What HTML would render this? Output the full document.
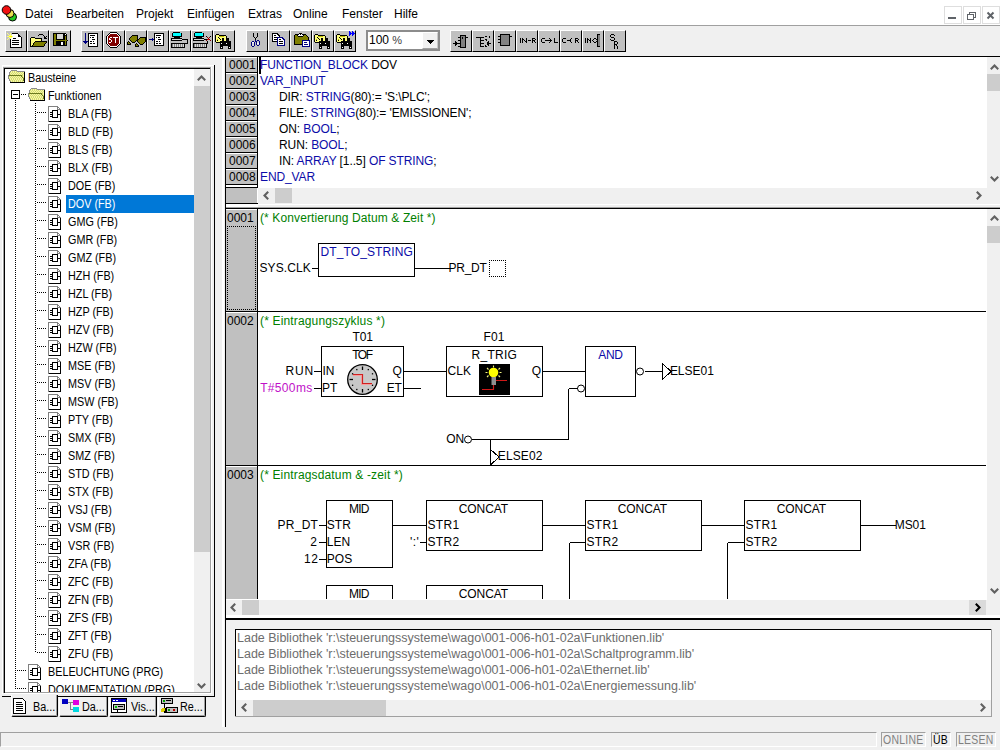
<!DOCTYPE html>
<html><head><meta charset="utf-8">
<style>
*{margin:0;padding:0;box-sizing:border-box}
html,body{width:1000px;height:750px;overflow:hidden;background:#f0f0f0;font-family:"Liberation Sans",sans-serif;font-size:12px;color:#000;position:relative}
.a{position:absolute}
.t{position:absolute;white-space:pre;line-height:16px;font-family:"Liberation Sans",sans-serif}
svg{position:absolute;overflow:visible}
</style></head><body>

<div class="a" style="left:0px;top:0px;width:1000px;height:25px;background:#fff;"></div>
<svg style="left:0;top:0" width="20" height="24" viewBox="0 0 20 24">
<circle cx="12.5" cy="17" r="4" fill="#22cc22" stroke="#000" stroke-width="1"/>
<circle cx="10" cy="13.5" r="4" fill="#e8e050" stroke="#000" stroke-width="1"/>
<circle cx="6.5" cy="10" r="4.3" fill="#f01010" stroke="#000" stroke-width="1"/>
</svg>
<span class="t" style="left:25px;top:6px;font-size:12px;color:#000;">Datei</span>
<span class="t" style="left:66px;top:6px;font-size:12px;color:#000;">Bearbeiten</span>
<span class="t" style="left:136px;top:6px;font-size:12px;color:#000;">Projekt</span>
<span class="t" style="left:187px;top:6px;font-size:12px;color:#000;">Einfügen</span>
<span class="t" style="left:248px;top:6px;font-size:12px;color:#000;">Extras</span>
<span class="t" style="left:293px;top:6px;font-size:12px;color:#000;">Online</span>
<span class="t" style="left:342px;top:6px;font-size:12px;color:#000;">Fenster</span>
<span class="t" style="left:394px;top:6px;font-size:12px;color:#000;">Hilfe</span>
<div class="a" style="left:944px;top:6px;width:18px;height:18px;background:#fff;border:1px solid #dedede"></div>
<div class="a" style="left:963px;top:6px;width:18px;height:18px;background:#fff;border:1px solid #dedede"></div>
<div class="a" style="left:982px;top:6px;width:18px;height:18px;background:#fff;border:1px solid #dedede"></div>
<div class="a" style="left:948px;top:17px;width:8px;height:2px;background:#5f6368;"></div>
<svg style="left:963px;top:6px" width="18" height="18"><g fill="none" stroke="#5f6368" stroke-width="1.2" shape-rendering="crispEdges">
<rect x="4.5" y="8.5" width="6" height="5"/><path d="M6.5 8.5 V6.5 H12.5 V11.5 H10.5"/></g></svg>
<svg style="left:982px;top:6px" width="18" height="18"><g stroke="#5f6368" stroke-width="2"><path d="M5.5 6.5 L11.5 12.5 M11.5 6.5 L5.5 12.5"/></g></svg>
<div class="a" style="left:0px;top:25px;width:1000px;height:1px;background:#a0a0a0;"></div>
<div class="a" style="left:0px;top:26px;width:1000px;height:29px;background:#f0f0f0;"></div>
<div class="a" style="left:0px;top:56px;width:1000px;height:1px;background:#000;"></div>
<div class="a" style="left:5px;top:30px;width:22px;height:22px;background:#c0c0c0;border-left:1px solid #fff;border-top:1px solid #fff;border-right:1px solid #000;border-bottom:1px solid #000"></div>
<svg style="left:6px;top:31px" width="20" height="20" shape-rendering="crispEdges"><rect x="1" y="2" width="1" height="1" fill="#ffff80"/><rect x="4" y="2" width="1" height="1" fill="#ffff80"/><rect x="6" y="2" width="6" height="1" fill="#000"/><rect x="2" y="3" width="1" height="1" fill="#ffff80"/><rect x="4" y="3" width="1" height="1" fill="#ffff80"/><rect x="6" y="3" width="6" height="1" fill="#fff"/><rect x="12" y="3" width="1" height="1" fill="#000"/><rect x="3" y="4" width="3" height="1" fill="#ffff80"/><rect x="6" y="4" width="6" height="1" fill="#fff"/><rect x="12" y="4" width="2" height="1" fill="#000"/><rect x="1" y="5" width="2" height="1" fill="#ffff80"/><rect x="3" y="5" width="3" height="1" fill="#ffff00"/><rect x="6" y="5" width="1" height="1" fill="#ffff80"/><rect x="7" y="5" width="5" height="1" fill="#fff"/><rect x="12" y="5" width="3" height="1" fill="#000"/><rect x="3" y="6" width="3" height="1" fill="#ffff80"/><rect x="6" y="6" width="9" height="1" fill="#fff"/><rect x="15" y="6" width="1" height="1" fill="#000"/><rect x="2" y="7" width="1" height="1" fill="#ffff80"/><rect x="4" y="7" width="1" height="1" fill="#ffff80"/><rect x="5" y="7" width="2" height="1" fill="#fff"/><rect x="7" y="7" width="3" height="1" fill="#000"/><rect x="10" y="7" width="5" height="1" fill="#fff"/><rect x="15" y="7" width="1" height="1" fill="#000"/><rect x="1" y="8" width="1" height="1" fill="#ffff80"/><rect x="4" y="8" width="1" height="1" fill="#000"/><rect x="5" y="8" width="10" height="1" fill="#fff"/><rect x="15" y="8" width="1" height="1" fill="#000"/><rect x="4" y="9" width="1" height="1" fill="#000"/><rect x="5" y="9" width="1" height="1" fill="#fff"/><rect x="6" y="9" width="7" height="1" fill="#000"/><rect x="13" y="9" width="2" height="1" fill="#fff"/><rect x="15" y="9" width="1" height="1" fill="#000"/><rect x="4" y="10" width="1" height="1" fill="#000"/><rect x="5" y="10" width="10" height="1" fill="#fff"/><rect x="15" y="10" width="1" height="1" fill="#000"/><rect x="4" y="11" width="1" height="1" fill="#000"/><rect x="5" y="11" width="1" height="1" fill="#fff"/><rect x="6" y="11" width="7" height="1" fill="#000"/><rect x="13" y="11" width="2" height="1" fill="#fff"/><rect x="15" y="11" width="1" height="1" fill="#000"/><rect x="4" y="12" width="1" height="1" fill="#000"/><rect x="5" y="12" width="10" height="1" fill="#fff"/><rect x="15" y="12" width="1" height="1" fill="#000"/><rect x="4" y="13" width="1" height="1" fill="#000"/><rect x="5" y="13" width="1" height="1" fill="#fff"/><rect x="6" y="13" width="7" height="1" fill="#000"/><rect x="13" y="13" width="2" height="1" fill="#fff"/><rect x="15" y="13" width="1" height="1" fill="#000"/><rect x="4" y="14" width="1" height="1" fill="#000"/><rect x="5" y="14" width="10" height="1" fill="#fff"/><rect x="15" y="14" width="1" height="1" fill="#000"/><rect x="4" y="15" width="1" height="1" fill="#000"/><rect x="5" y="15" width="10" height="1" fill="#fff"/><rect x="15" y="15" width="1" height="1" fill="#000"/><rect x="4" y="16" width="12" height="1" fill="#000"/></svg>
<div class="a" style="left:27px;top:30px;width:22px;height:22px;background:#c0c0c0;border-left:1px solid #fff;border-top:1px solid #fff;border-right:1px solid #000;border-bottom:1px solid #000"></div>
<svg style="left:28px;top:31px" width="20" height="20" shape-rendering="crispEdges"><rect x="11" y="3" width="4" height="1" fill="#000"/><rect x="10" y="4" width="1" height="1" fill="#000"/><rect x="15" y="4" width="1" height="1" fill="#000"/><rect x="16" y="5" width="1" height="1" fill="#000"/><rect x="18" y="5" width="1" height="1" fill="#000"/><rect x="3" y="6" width="4" height="1" fill="#000"/><rect x="16" y="6" width="2" height="1" fill="#000"/><rect x="2" y="7" width="1" height="1" fill="#000"/><rect x="3" y="7" width="4" height="1" fill="#ffff80"/><rect x="7" y="7" width="7" height="1" fill="#000"/><rect x="16" y="7" width="3" height="1" fill="#000"/><rect x="2" y="8" width="1" height="1" fill="#000"/><rect x="3" y="8" width="10" height="1" fill="#ffff80"/><rect x="13" y="8" width="1" height="1" fill="#000"/><rect x="2" y="9" width="1" height="1" fill="#000"/><rect x="3" y="9" width="10" height="1" fill="#ffff80"/><rect x="13" y="9" width="1" height="1" fill="#000"/><rect x="2" y="10" width="1" height="1" fill="#000"/><rect x="3" y="10" width="4" height="1" fill="#ffff80"/><rect x="7" y="10" width="12" height="1" fill="#000"/><rect x="2" y="11" width="1" height="1" fill="#000"/><rect x="3" y="11" width="3" height="1" fill="#ffff80"/><rect x="6" y="11" width="1" height="1" fill="#000"/><rect x="7" y="11" width="11" height="1" fill="#808000"/><rect x="18" y="11" width="1" height="1" fill="#000"/><rect x="2" y="12" width="1" height="1" fill="#000"/><rect x="3" y="12" width="2" height="1" fill="#ffff80"/><rect x="5" y="12" width="1" height="1" fill="#000"/><rect x="6" y="12" width="11" height="1" fill="#808000"/><rect x="17" y="12" width="1" height="1" fill="#000"/><rect x="2" y="13" width="1" height="1" fill="#000"/><rect x="3" y="13" width="2" height="1" fill="#ffff80"/><rect x="5" y="13" width="1" height="1" fill="#000"/><rect x="6" y="13" width="10" height="1" fill="#808000"/><rect x="16" y="13" width="1" height="1" fill="#000"/><rect x="2" y="14" width="1" height="1" fill="#000"/><rect x="3" y="14" width="1" height="1" fill="#ffff80"/><rect x="4" y="14" width="1" height="1" fill="#000"/><rect x="5" y="14" width="11" height="1" fill="#808000"/><rect x="16" y="14" width="1" height="1" fill="#000"/><rect x="2" y="15" width="14" height="1" fill="#000"/></svg>
<div class="a" style="left:49px;top:30px;width:22px;height:22px;background:#c0c0c0;border-left:1px solid #fff;border-top:1px solid #fff;border-right:1px solid #000;border-bottom:1px solid #000"></div>
<svg style="left:50px;top:31px" width="20" height="20" shape-rendering="crispEdges"><rect x="3" y="2" width="13" height="1" fill="#000"/><rect x="3" y="3" width="1" height="1" fill="#000"/><rect x="4" y="3" width="2" height="1" fill="#808000"/><rect x="6" y="3" width="1" height="1" fill="#000"/><rect x="7" y="3" width="6" height="1" fill="#d8d8d8"/><rect x="13" y="3" width="2" height="1" fill="#000"/><rect x="15" y="3" width="1" height="1" fill="#fff"/><rect x="16" y="3" width="1" height="1" fill="#000"/><rect x="3" y="4" width="1" height="1" fill="#000"/><rect x="4" y="4" width="2" height="1" fill="#808000"/><rect x="6" y="4" width="1" height="1" fill="#000"/><rect x="7" y="4" width="6" height="1" fill="#d8d8d8"/><rect x="13" y="4" width="4" height="1" fill="#000"/><rect x="3" y="5" width="1" height="1" fill="#000"/><rect x="4" y="5" width="2" height="1" fill="#808000"/><rect x="6" y="5" width="1" height="1" fill="#000"/><rect x="7" y="5" width="6" height="1" fill="#d8d8d8"/><rect x="13" y="5" width="2" height="1" fill="#000"/><rect x="15" y="5" width="1" height="1" fill="#808000"/><rect x="16" y="5" width="1" height="1" fill="#000"/><rect x="3" y="6" width="1" height="1" fill="#000"/><rect x="4" y="6" width="2" height="1" fill="#808000"/><rect x="6" y="6" width="1" height="1" fill="#000"/><rect x="7" y="6" width="6" height="1" fill="#d8d8d8"/><rect x="13" y="6" width="2" height="1" fill="#000"/><rect x="15" y="6" width="1" height="1" fill="#808000"/><rect x="16" y="6" width="1" height="1" fill="#000"/><rect x="3" y="7" width="1" height="1" fill="#000"/><rect x="4" y="7" width="2" height="1" fill="#808000"/><rect x="6" y="7" width="1" height="1" fill="#000"/><rect x="7" y="7" width="6" height="1" fill="#d8d8d8"/><rect x="13" y="7" width="2" height="1" fill="#000"/><rect x="15" y="7" width="1" height="1" fill="#808000"/><rect x="16" y="7" width="1" height="1" fill="#000"/><rect x="3" y="8" width="1" height="1" fill="#000"/><rect x="4" y="8" width="2" height="1" fill="#808000"/><rect x="6" y="8" width="9" height="1" fill="#000"/><rect x="15" y="8" width="1" height="1" fill="#808000"/><rect x="16" y="8" width="1" height="1" fill="#000"/><rect x="3" y="9" width="1" height="1" fill="#000"/><rect x="4" y="9" width="13" height="1" fill="#808000"/><rect x="17" y="9" width="1" height="1" fill="#000"/><rect x="3" y="10" width="1" height="1" fill="#000"/><rect x="4" y="10" width="2" height="1" fill="#808000"/><rect x="6" y="10" width="9" height="1" fill="#000"/><rect x="15" y="10" width="1" height="1" fill="#808000"/><rect x="16" y="10" width="1" height="1" fill="#000"/><rect x="3" y="11" width="1" height="1" fill="#000"/><rect x="4" y="11" width="2" height="1" fill="#808000"/><rect x="6" y="11" width="5" height="1" fill="#000"/><rect x="11" y="11" width="2" height="1" fill="#fff"/><rect x="13" y="11" width="2" height="1" fill="#000"/><rect x="15" y="11" width="1" height="1" fill="#808000"/><rect x="16" y="11" width="1" height="1" fill="#000"/><rect x="3" y="12" width="1" height="1" fill="#000"/><rect x="4" y="12" width="2" height="1" fill="#808000"/><rect x="6" y="12" width="5" height="1" fill="#000"/><rect x="11" y="12" width="2" height="1" fill="#fff"/><rect x="13" y="12" width="2" height="1" fill="#000"/><rect x="15" y="12" width="1" height="1" fill="#808000"/><rect x="16" y="12" width="1" height="1" fill="#000"/><rect x="3" y="13" width="1" height="1" fill="#000"/><rect x="4" y="13" width="2" height="1" fill="#808000"/><rect x="6" y="13" width="5" height="1" fill="#000"/><rect x="11" y="13" width="2" height="1" fill="#fff"/><rect x="13" y="13" width="2" height="1" fill="#000"/><rect x="15" y="13" width="1" height="1" fill="#808000"/><rect x="16" y="13" width="1" height="1" fill="#000"/><rect x="3" y="14" width="14" height="1" fill="#000"/></svg>
<div class="a" style="left:81px;top:30px;width:22px;height:22px;background:#c0c0c0;border-left:1px solid #fff;border-top:1px solid #fff;border-right:1px solid #000;border-bottom:1px solid #000"></div>
<svg style="left:82px;top:31px" width="20" height="20" shape-rendering="crispEdges"><rect x="3" y="2" width="1" height="1" fill="#000080"/><rect x="6" y="2" width="10" height="1" fill="#000"/><rect x="3" y="3" width="1" height="1" fill="#000080"/><rect x="6" y="3" width="1" height="1" fill="#000"/><rect x="7" y="3" width="8" height="1" fill="#fff"/><rect x="15" y="3" width="1" height="1" fill="#000"/><rect x="3" y="4" width="1" height="1" fill="#000080"/><rect x="6" y="4" width="1" height="1" fill="#000"/><rect x="7" y="4" width="1" height="1" fill="#fff"/><rect x="8" y="4" width="5" height="1" fill="#000"/><rect x="13" y="4" width="2" height="1" fill="#fff"/><rect x="15" y="4" width="1" height="1" fill="#000"/><rect x="3" y="5" width="1" height="1" fill="#000080"/><rect x="6" y="5" width="1" height="1" fill="#000"/><rect x="7" y="5" width="8" height="1" fill="#fff"/><rect x="15" y="5" width="1" height="1" fill="#000"/><rect x="3" y="6" width="1" height="1" fill="#000080"/><rect x="6" y="6" width="1" height="1" fill="#000"/><rect x="7" y="6" width="1" height="1" fill="#fff"/><rect x="8" y="6" width="1" height="1" fill="#000"/><rect x="9" y="6" width="1" height="1" fill="#fff"/><rect x="10" y="6" width="2" height="1" fill="#000"/><rect x="12" y="6" width="3" height="1" fill="#fff"/><rect x="15" y="6" width="1" height="1" fill="#000"/><rect x="3" y="7" width="1" height="1" fill="#000080"/><rect x="6" y="7" width="1" height="1" fill="#000"/><rect x="7" y="7" width="8" height="1" fill="#fff"/><rect x="15" y="7" width="1" height="1" fill="#000"/><rect x="3" y="8" width="1" height="1" fill="#000080"/><rect x="6" y="8" width="1" height="1" fill="#000"/><rect x="7" y="8" width="3" height="1" fill="#fff"/><rect x="10" y="8" width="3" height="1" fill="#000"/><rect x="13" y="8" width="2" height="1" fill="#fff"/><rect x="15" y="8" width="1" height="1" fill="#000"/><rect x="3" y="9" width="1" height="1" fill="#000080"/><rect x="6" y="9" width="1" height="1" fill="#000"/><rect x="7" y="9" width="8" height="1" fill="#fff"/><rect x="15" y="9" width="1" height="1" fill="#000"/><rect x="1" y="10" width="5" height="1" fill="#000080"/><rect x="6" y="10" width="1" height="1" fill="#000"/><rect x="7" y="10" width="1" height="1" fill="#fff"/><rect x="8" y="10" width="2" height="1" fill="#000"/><rect x="10" y="10" width="1" height="1" fill="#fff"/><rect x="11" y="10" width="1" height="1" fill="#000"/><rect x="12" y="10" width="3" height="1" fill="#fff"/><rect x="15" y="10" width="1" height="1" fill="#000"/><rect x="2" y="11" width="3" height="1" fill="#000080"/><rect x="6" y="11" width="1" height="1" fill="#000"/><rect x="7" y="11" width="8" height="1" fill="#fff"/><rect x="15" y="11" width="1" height="1" fill="#000"/><rect x="3" y="12" width="1" height="1" fill="#000080"/><rect x="6" y="12" width="1" height="1" fill="#000"/><rect x="7" y="12" width="1" height="1" fill="#fff"/><rect x="8" y="12" width="2" height="1" fill="#000"/><rect x="10" y="12" width="1" height="1" fill="#fff"/><rect x="11" y="12" width="2" height="1" fill="#000"/><rect x="13" y="12" width="2" height="1" fill="#fff"/><rect x="15" y="12" width="1" height="1" fill="#000"/><rect x="6" y="13" width="1" height="1" fill="#000"/><rect x="7" y="13" width="8" height="1" fill="#fff"/><rect x="15" y="13" width="1" height="1" fill="#000"/><rect x="6" y="14" width="1" height="1" fill="#000"/><rect x="7" y="14" width="8" height="1" fill="#fff"/><rect x="15" y="14" width="1" height="1" fill="#000"/><rect x="6" y="15" width="10" height="1" fill="#000"/></svg>
<div class="a" style="left:103px;top:30px;width:22px;height:22px;background:#c0c0c0;border-left:1px solid #fff;border-top:1px solid #fff;border-right:1px solid #000;border-bottom:1px solid #000"></div>
<svg style="left:104px;top:31px" width="20" height="20" shape-rendering="crispEdges"><rect x="6" y="1" width="7" height="1" fill="#000"/><rect x="5" y="2" width="1" height="1" fill="#000"/><rect x="6" y="2" width="7" height="1" fill="#fff"/><rect x="13" y="2" width="1" height="1" fill="#000"/><rect x="4" y="3" width="1" height="1" fill="#000"/><rect x="5" y="3" width="1" height="1" fill="#fff"/><rect x="6" y="3" width="7" height="1" fill="#800000"/><rect x="13" y="3" width="1" height="1" fill="#fff"/><rect x="14" y="3" width="1" height="1" fill="#000"/><rect x="3" y="4" width="1" height="1" fill="#000"/><rect x="4" y="4" width="1" height="1" fill="#fff"/><rect x="5" y="4" width="9" height="1" fill="#800000"/><rect x="14" y="4" width="1" height="1" fill="#fff"/><rect x="15" y="4" width="1" height="1" fill="#000"/><rect x="2" y="5" width="1" height="1" fill="#000"/><rect x="3" y="5" width="1" height="1" fill="#fff"/><rect x="4" y="5" width="11" height="1" fill="#800000"/><rect x="15" y="5" width="1" height="1" fill="#fff"/><rect x="16" y="5" width="1" height="1" fill="#000"/><rect x="2" y="6" width="1" height="1" fill="#000"/><rect x="3" y="6" width="1" height="1" fill="#fff"/><rect x="4" y="6" width="2" height="1" fill="#800000"/><rect x="6" y="6" width="2" height="1" fill="#fff"/><rect x="8" y="6" width="1" height="1" fill="#800000"/><rect x="9" y="6" width="5" height="1" fill="#fff"/><rect x="14" y="6" width="1" height="1" fill="#800000"/><rect x="15" y="6" width="1" height="1" fill="#fff"/><rect x="16" y="6" width="1" height="1" fill="#000"/><rect x="2" y="7" width="1" height="1" fill="#000"/><rect x="3" y="7" width="1" height="1" fill="#fff"/><rect x="4" y="7" width="1" height="1" fill="#800000"/><rect x="5" y="7" width="1" height="1" fill="#fff"/><rect x="6" y="7" width="5" height="1" fill="#800000"/><rect x="11" y="7" width="1" height="1" fill="#fff"/><rect x="12" y="7" width="3" height="1" fill="#800000"/><rect x="15" y="7" width="1" height="1" fill="#fff"/><rect x="16" y="7" width="1" height="1" fill="#000"/><rect x="2" y="8" width="1" height="1" fill="#000"/><rect x="3" y="8" width="1" height="1" fill="#fff"/><rect x="4" y="8" width="1" height="1" fill="#800000"/><rect x="5" y="8" width="2" height="1" fill="#fff"/><rect x="7" y="8" width="4" height="1" fill="#800000"/><rect x="11" y="8" width="1" height="1" fill="#fff"/><rect x="12" y="8" width="3" height="1" fill="#800000"/><rect x="15" y="8" width="1" height="1" fill="#fff"/><rect x="16" y="8" width="1" height="1" fill="#000"/><rect x="2" y="9" width="1" height="1" fill="#000"/><rect x="3" y="9" width="1" height="1" fill="#fff"/><rect x="4" y="9" width="3" height="1" fill="#800000"/><rect x="7" y="9" width="1" height="1" fill="#fff"/><rect x="8" y="9" width="3" height="1" fill="#800000"/><rect x="11" y="9" width="1" height="1" fill="#fff"/><rect x="12" y="9" width="3" height="1" fill="#800000"/><rect x="15" y="9" width="1" height="1" fill="#fff"/><rect x="16" y="9" width="1" height="1" fill="#000"/><rect x="2" y="10" width="1" height="1" fill="#000"/><rect x="3" y="10" width="1" height="1" fill="#fff"/><rect x="4" y="10" width="3" height="1" fill="#800000"/><rect x="7" y="10" width="1" height="1" fill="#fff"/><rect x="8" y="10" width="3" height="1" fill="#800000"/><rect x="11" y="10" width="1" height="1" fill="#fff"/><rect x="12" y="10" width="3" height="1" fill="#800000"/><rect x="15" y="10" width="1" height="1" fill="#fff"/><rect x="16" y="10" width="1" height="1" fill="#000"/><rect x="2" y="11" width="1" height="1" fill="#000"/><rect x="3" y="11" width="1" height="1" fill="#fff"/><rect x="4" y="11" width="1" height="1" fill="#800000"/><rect x="5" y="11" width="2" height="1" fill="#fff"/><rect x="7" y="11" width="4" height="1" fill="#800000"/><rect x="11" y="11" width="1" height="1" fill="#fff"/><rect x="12" y="11" width="3" height="1" fill="#800000"/><rect x="15" y="11" width="1" height="1" fill="#fff"/><rect x="16" y="11" width="1" height="1" fill="#000"/><rect x="2" y="12" width="1" height="1" fill="#000"/><rect x="3" y="12" width="1" height="1" fill="#fff"/><rect x="4" y="12" width="11" height="1" fill="#800000"/><rect x="15" y="12" width="1" height="1" fill="#fff"/><rect x="16" y="12" width="1" height="1" fill="#000"/><rect x="3" y="13" width="1" height="1" fill="#000"/><rect x="4" y="13" width="1" height="1" fill="#fff"/><rect x="5" y="13" width="9" height="1" fill="#800000"/><rect x="14" y="13" width="1" height="1" fill="#fff"/><rect x="15" y="13" width="1" height="1" fill="#000"/><rect x="4" y="14" width="1" height="1" fill="#000"/><rect x="5" y="14" width="1" height="1" fill="#fff"/><rect x="6" y="14" width="7" height="1" fill="#800000"/><rect x="13" y="14" width="1" height="1" fill="#fff"/><rect x="14" y="14" width="1" height="1" fill="#000"/><rect x="5" y="15" width="1" height="1" fill="#000"/><rect x="6" y="15" width="7" height="1" fill="#fff"/><rect x="13" y="15" width="1" height="1" fill="#000"/><rect x="6" y="16" width="7" height="1" fill="#000"/></svg>
<div class="a" style="left:125px;top:30px;width:22px;height:22px;background:#c0c0c0;border-left:1px solid #fff;border-top:1px solid #fff;border-right:1px solid #000;border-bottom:1px solid #000"></div>
<svg style="left:126px;top:31px" width="20" height="20" shape-rendering="crispEdges"><rect x="6" y="4" width="6" height="1" fill="#000"/><rect x="5" y="5" width="1" height="1" fill="#000"/><rect x="6" y="5" width="5" height="1" fill="#808000"/><rect x="11" y="5" width="1" height="1" fill="#000"/><rect x="4" y="6" width="1" height="1" fill="#000"/><rect x="5" y="6" width="6" height="1" fill="#808000"/><rect x="11" y="6" width="1" height="1" fill="#000"/><rect x="14" y="6" width="6" height="1" fill="#000"/><rect x="3" y="7" width="1" height="1" fill="#000"/><rect x="4" y="7" width="7" height="1" fill="#808000"/><rect x="11" y="7" width="1" height="1" fill="#000"/><rect x="13" y="7" width="1" height="1" fill="#000"/><rect x="14" y="7" width="5" height="1" fill="#808000"/><rect x="19" y="7" width="1" height="1" fill="#000"/><rect x="3" y="8" width="1" height="1" fill="#000"/><rect x="4" y="8" width="7" height="1" fill="#808000"/><rect x="11" y="8" width="2" height="1" fill="#000"/><rect x="13" y="8" width="6" height="1" fill="#808000"/><rect x="19" y="8" width="1" height="1" fill="#000"/><rect x="4" y="9" width="1" height="1" fill="#000"/><rect x="5" y="9" width="5" height="1" fill="#808000"/><rect x="10" y="9" width="2" height="1" fill="#000"/><rect x="12" y="9" width="7" height="1" fill="#808000"/><rect x="19" y="9" width="1" height="1" fill="#000"/><rect x="2" y="10" width="1" height="1" fill="#000"/><rect x="5" y="10" width="1" height="1" fill="#000"/><rect x="6" y="10" width="3" height="1" fill="#808000"/><rect x="9" y="10" width="1" height="1" fill="#000"/><rect x="11" y="10" width="1" height="1" fill="#000"/><rect x="12" y="10" width="7" height="1" fill="#808000"/><rect x="19" y="10" width="1" height="1" fill="#000"/><rect x="1" y="11" width="1" height="1" fill="#000"/><rect x="2" y="11" width="1" height="1" fill="#808000"/><rect x="3" y="11" width="1" height="1" fill="#000"/><rect x="6" y="11" width="3" height="1" fill="#000"/><rect x="12" y="11" width="1" height="1" fill="#000"/><rect x="13" y="11" width="5" height="1" fill="#808000"/><rect x="18" y="11" width="1" height="1" fill="#000"/><rect x="1" y="12" width="1" height="1" fill="#000"/><rect x="2" y="12" width="2" height="1" fill="#808000"/><rect x="4" y="12" width="1" height="1" fill="#000"/><rect x="10" y="12" width="1" height="1" fill="#000"/><rect x="13" y="12" width="1" height="1" fill="#000"/><rect x="14" y="12" width="3" height="1" fill="#808000"/><rect x="17" y="12" width="1" height="1" fill="#000"/><rect x="1" y="13" width="4" height="1" fill="#000"/><rect x="9" y="13" width="1" height="1" fill="#000"/><rect x="10" y="13" width="1" height="1" fill="#808000"/><rect x="11" y="13" width="1" height="1" fill="#000"/><rect x="14" y="13" width="3" height="1" fill="#000"/><rect x="9" y="14" width="1" height="1" fill="#000"/><rect x="10" y="14" width="2" height="1" fill="#808000"/><rect x="12" y="14" width="1" height="1" fill="#000"/><rect x="9" y="15" width="4" height="1" fill="#000"/></svg>
<div class="a" style="left:147px;top:30px;width:22px;height:22px;background:#c0c0c0;border-left:1px solid #fff;border-top:1px solid #fff;border-right:1px solid #000;border-bottom:1px solid #000"></div>
<svg style="left:148px;top:31px" width="20" height="20" shape-rendering="crispEdges"><rect x="6" y="2" width="10" height="1" fill="#000"/><rect x="6" y="3" width="1" height="1" fill="#000"/><rect x="7" y="3" width="8" height="1" fill="#fff"/><rect x="15" y="3" width="1" height="1" fill="#000"/><rect x="6" y="4" width="1" height="1" fill="#000"/><rect x="7" y="4" width="1" height="1" fill="#fff"/><rect x="8" y="4" width="5" height="1" fill="#000"/><rect x="13" y="4" width="2" height="1" fill="#fff"/><rect x="15" y="4" width="1" height="1" fill="#000"/><rect x="6" y="5" width="1" height="1" fill="#000"/><rect x="7" y="5" width="8" height="1" fill="#fff"/><rect x="15" y="5" width="1" height="1" fill="#000"/><rect x="6" y="6" width="1" height="1" fill="#000"/><rect x="7" y="6" width="1" height="1" fill="#fff"/><rect x="8" y="6" width="1" height="1" fill="#000"/><rect x="9" y="6" width="1" height="1" fill="#fff"/><rect x="10" y="6" width="2" height="1" fill="#000"/><rect x="12" y="6" width="3" height="1" fill="#fff"/><rect x="15" y="6" width="1" height="1" fill="#000"/><rect x="4" y="7" width="1" height="1" fill="#000080"/><rect x="6" y="7" width="1" height="1" fill="#000"/><rect x="7" y="7" width="8" height="1" fill="#fff"/><rect x="15" y="7" width="1" height="1" fill="#000"/><rect x="1" y="8" width="5" height="1" fill="#000080"/><rect x="6" y="8" width="1" height="1" fill="#000"/><rect x="7" y="8" width="3" height="1" fill="#fff"/><rect x="10" y="8" width="3" height="1" fill="#000"/><rect x="13" y="8" width="2" height="1" fill="#fff"/><rect x="15" y="8" width="1" height="1" fill="#000"/><rect x="4" y="9" width="1" height="1" fill="#000080"/><rect x="6" y="9" width="1" height="1" fill="#000"/><rect x="7" y="9" width="8" height="1" fill="#fff"/><rect x="15" y="9" width="1" height="1" fill="#000"/><rect x="6" y="10" width="1" height="1" fill="#000"/><rect x="7" y="10" width="1" height="1" fill="#fff"/><rect x="8" y="10" width="2" height="1" fill="#000"/><rect x="10" y="10" width="1" height="1" fill="#fff"/><rect x="11" y="10" width="1" height="1" fill="#000"/><rect x="12" y="10" width="3" height="1" fill="#fff"/><rect x="15" y="10" width="1" height="1" fill="#000"/><rect x="6" y="11" width="1" height="1" fill="#000"/><rect x="7" y="11" width="8" height="1" fill="#fff"/><rect x="15" y="11" width="1" height="1" fill="#000"/><rect x="6" y="12" width="1" height="1" fill="#000"/><rect x="7" y="12" width="1" height="1" fill="#fff"/><rect x="8" y="12" width="2" height="1" fill="#000"/><rect x="10" y="12" width="1" height="1" fill="#fff"/><rect x="11" y="12" width="2" height="1" fill="#000"/><rect x="13" y="12" width="2" height="1" fill="#fff"/><rect x="15" y="12" width="1" height="1" fill="#000"/><rect x="6" y="13" width="1" height="1" fill="#000"/><rect x="7" y="13" width="8" height="1" fill="#fff"/><rect x="15" y="13" width="1" height="1" fill="#000"/><rect x="6" y="14" width="10" height="1" fill="#000"/></svg>
<div class="a" style="left:169px;top:30px;width:22px;height:22px;background:#c0c0c0;border-left:1px solid #fff;border-top:1px solid #fff;border-right:1px solid #000;border-bottom:1px solid #000"></div>
<svg style="left:170px;top:31px" width="20" height="20" shape-rendering="crispEdges"><rect x="3" y="1" width="7" height="1" fill="#000"/><rect x="2" y="2" width="1" height="1" fill="#000"/><rect x="3" y="2" width="8" height="1" fill="#00ffff"/><rect x="11" y="2" width="1" height="1" fill="#000"/><rect x="2" y="3" width="1" height="1" fill="#000"/><rect x="3" y="3" width="8" height="1" fill="#00ffff"/><rect x="11" y="3" width="1" height="1" fill="#000"/><rect x="2" y="4" width="1" height="1" fill="#000"/><rect x="3" y="4" width="8" height="1" fill="#00ffff"/><rect x="11" y="4" width="1" height="1" fill="#000"/><rect x="2" y="5" width="10" height="1" fill="#000"/><rect x="4" y="6" width="6" height="1" fill="#000"/><rect x="1" y="7" width="11" height="1" fill="#000"/><rect x="1" y="8" width="1" height="1" fill="#000"/><rect x="2" y="8" width="10" height="1" fill="#d8d8d8"/><rect x="12" y="8" width="6" height="1" fill="#000"/><rect x="1" y="9" width="11" height="1" fill="#000"/><rect x="17" y="9" width="1" height="1" fill="#000"/><rect x="17" y="10" width="1" height="1" fill="#000"/><rect x="17" y="11" width="1" height="1" fill="#000"/><rect x="1" y="12" width="17" height="1" fill="#000"/><rect x="1" y="13" width="1" height="1" fill="#000"/><rect x="2" y="13" width="1" height="1" fill="#808080"/><rect x="3" y="13" width="1" height="1" fill="#d8d8d8"/><rect x="4" y="13" width="1" height="1" fill="#808080"/><rect x="5" y="13" width="1" height="1" fill="#d8d8d8"/><rect x="6" y="13" width="1" height="1" fill="#808080"/><rect x="7" y="13" width="1" height="1" fill="#d8d8d8"/><rect x="8" y="13" width="1" height="1" fill="#808080"/><rect x="9" y="13" width="1" height="1" fill="#d8d8d8"/><rect x="10" y="13" width="1" height="1" fill="#808080"/><rect x="11" y="13" width="1" height="1" fill="#d8d8d8"/><rect x="12" y="13" width="1" height="1" fill="#808080"/><rect x="13" y="13" width="1" height="1" fill="#d8d8d8"/><rect x="14" y="13" width="1" height="1" fill="#000"/><rect x="1" y="14" width="1" height="1" fill="#000"/><rect x="2" y="14" width="1" height="1" fill="#808080"/><rect x="3" y="14" width="1" height="1" fill="#d8d8d8"/><rect x="4" y="14" width="1" height="1" fill="#808080"/><rect x="5" y="14" width="1" height="1" fill="#d8d8d8"/><rect x="6" y="14" width="1" height="1" fill="#808080"/><rect x="7" y="14" width="1" height="1" fill="#d8d8d8"/><rect x="8" y="14" width="1" height="1" fill="#808080"/><rect x="9" y="14" width="1" height="1" fill="#d8d8d8"/><rect x="10" y="14" width="1" height="1" fill="#808080"/><rect x="11" y="14" width="1" height="1" fill="#d8d8d8"/><rect x="12" y="14" width="1" height="1" fill="#808080"/><rect x="13" y="14" width="1" height="1" fill="#d8d8d8"/><rect x="14" y="14" width="1" height="1" fill="#000"/><rect x="1" y="15" width="1" height="1" fill="#000"/><rect x="2" y="15" width="1" height="1" fill="#808080"/><rect x="3" y="15" width="1" height="1" fill="#d8d8d8"/><rect x="4" y="15" width="1" height="1" fill="#808080"/><rect x="5" y="15" width="1" height="1" fill="#d8d8d8"/><rect x="6" y="15" width="1" height="1" fill="#808080"/><rect x="7" y="15" width="1" height="1" fill="#d8d8d8"/><rect x="8" y="15" width="1" height="1" fill="#808080"/><rect x="9" y="15" width="1" height="1" fill="#d8d8d8"/><rect x="10" y="15" width="1" height="1" fill="#808080"/><rect x="11" y="15" width="1" height="1" fill="#d8d8d8"/><rect x="12" y="15" width="1" height="1" fill="#808080"/><rect x="13" y="15" width="1" height="1" fill="#d8d8d8"/><rect x="14" y="15" width="1" height="1" fill="#000"/><rect x="1" y="16" width="14" height="1" fill="#000"/></svg>
<div class="a" style="left:191px;top:30px;width:22px;height:22px;background:#c0c0c0;border-left:1px solid #fff;border-top:1px solid #fff;border-right:1px solid #000;border-bottom:1px solid #000"></div>
<svg style="left:192px;top:31px" width="20" height="20" shape-rendering="crispEdges"><rect x="3" y="1" width="7" height="1" fill="#000"/><rect x="2" y="2" width="1" height="1" fill="#000"/><rect x="3" y="2" width="8" height="1" fill="#00ffff"/><rect x="11" y="2" width="1" height="1" fill="#000"/><rect x="2" y="3" width="1" height="1" fill="#000"/><rect x="3" y="3" width="8" height="1" fill="#00ffff"/><rect x="11" y="3" width="1" height="1" fill="#000"/><rect x="2" y="4" width="1" height="1" fill="#000"/><rect x="3" y="4" width="8" height="1" fill="#00ffff"/><rect x="11" y="4" width="1" height="1" fill="#000"/><rect x="2" y="5" width="10" height="1" fill="#000"/><rect x="14" y="5" width="1" height="1" fill="#000"/><rect x="18" y="5" width="1" height="1" fill="#000"/><rect x="4" y="6" width="6" height="1" fill="#000"/><rect x="15" y="6" width="1" height="1" fill="#800000"/><rect x="17" y="6" width="1" height="1" fill="#800000"/><rect x="1" y="7" width="11" height="1" fill="#000"/><rect x="16" y="7" width="1" height="1" fill="#800000"/><rect x="1" y="8" width="1" height="1" fill="#000"/><rect x="2" y="8" width="10" height="1" fill="#d8d8d8"/><rect x="12" y="8" width="3" height="1" fill="#000"/><rect x="15" y="8" width="1" height="1" fill="#800000"/><rect x="16" y="8" width="1" height="1" fill="#ff0000"/><rect x="17" y="8" width="1" height="1" fill="#800000"/><rect x="1" y="9" width="11" height="1" fill="#000"/><rect x="14" y="9" width="1" height="1" fill="#800000"/><rect x="18" y="9" width="1" height="1" fill="#800000"/><rect x="15" y="10" width="1" height="1" fill="#000"/><rect x="15" y="11" width="1" height="1" fill="#000"/><rect x="1" y="12" width="15" height="1" fill="#000"/><rect x="1" y="13" width="1" height="1" fill="#000"/><rect x="2" y="13" width="1" height="1" fill="#808080"/><rect x="3" y="13" width="1" height="1" fill="#d8d8d8"/><rect x="4" y="13" width="1" height="1" fill="#808080"/><rect x="5" y="13" width="1" height="1" fill="#d8d8d8"/><rect x="6" y="13" width="1" height="1" fill="#808080"/><rect x="7" y="13" width="1" height="1" fill="#d8d8d8"/><rect x="8" y="13" width="1" height="1" fill="#808080"/><rect x="9" y="13" width="1" height="1" fill="#d8d8d8"/><rect x="10" y="13" width="1" height="1" fill="#808080"/><rect x="11" y="13" width="1" height="1" fill="#d8d8d8"/><rect x="12" y="13" width="1" height="1" fill="#808080"/><rect x="13" y="13" width="1" height="1" fill="#d8d8d8"/><rect x="14" y="13" width="1" height="1" fill="#000"/><rect x="1" y="14" width="1" height="1" fill="#000"/><rect x="2" y="14" width="1" height="1" fill="#808080"/><rect x="3" y="14" width="1" height="1" fill="#d8d8d8"/><rect x="4" y="14" width="1" height="1" fill="#808080"/><rect x="5" y="14" width="1" height="1" fill="#d8d8d8"/><rect x="6" y="14" width="1" height="1" fill="#808080"/><rect x="7" y="14" width="1" height="1" fill="#d8d8d8"/><rect x="8" y="14" width="1" height="1" fill="#808080"/><rect x="9" y="14" width="1" height="1" fill="#d8d8d8"/><rect x="10" y="14" width="1" height="1" fill="#808080"/><rect x="11" y="14" width="1" height="1" fill="#d8d8d8"/><rect x="12" y="14" width="1" height="1" fill="#808080"/><rect x="13" y="14" width="1" height="1" fill="#d8d8d8"/><rect x="14" y="14" width="1" height="1" fill="#000"/><rect x="1" y="15" width="1" height="1" fill="#000"/><rect x="2" y="15" width="1" height="1" fill="#808080"/><rect x="3" y="15" width="1" height="1" fill="#d8d8d8"/><rect x="4" y="15" width="1" height="1" fill="#808080"/><rect x="5" y="15" width="1" height="1" fill="#d8d8d8"/><rect x="6" y="15" width="1" height="1" fill="#808080"/><rect x="7" y="15" width="1" height="1" fill="#d8d8d8"/><rect x="8" y="15" width="1" height="1" fill="#808080"/><rect x="9" y="15" width="1" height="1" fill="#d8d8d8"/><rect x="10" y="15" width="1" height="1" fill="#808080"/><rect x="11" y="15" width="1" height="1" fill="#d8d8d8"/><rect x="12" y="15" width="1" height="1" fill="#808080"/><rect x="13" y="15" width="1" height="1" fill="#d8d8d8"/><rect x="14" y="15" width="1" height="1" fill="#000"/><rect x="1" y="16" width="14" height="1" fill="#000"/></svg>
<div class="a" style="left:213px;top:30px;width:22px;height:22px;background:#c0c0c0;border-left:1px solid #fff;border-top:1px solid #fff;border-right:1px solid #000;border-bottom:1px solid #000"></div>
<svg style="left:214px;top:31px" width="20" height="20" shape-rendering="crispEdges"><rect x="2" y="3" width="3" height="1" fill="#000"/><rect x="1" y="4" width="1" height="1" fill="#000"/><rect x="2" y="4" width="3" height="1" fill="#ffff80"/><rect x="5" y="4" width="7" height="1" fill="#000"/><rect x="1" y="5" width="1" height="1" fill="#000"/><rect x="2" y="5" width="3" height="1" fill="#ffff80"/><rect x="5" y="5" width="5" height="1" fill="#c0c000"/><rect x="10" y="5" width="2" height="1" fill="#ffff80"/><rect x="12" y="5" width="1" height="1" fill="#000"/><rect x="1" y="6" width="1" height="1" fill="#000"/><rect x="2" y="6" width="2" height="1" fill="#ffff80"/><rect x="4" y="6" width="1" height="1" fill="#000"/><rect x="5" y="6" width="7" height="1" fill="#ffff80"/><rect x="12" y="6" width="1" height="1" fill="#000"/><rect x="1" y="7" width="1" height="1" fill="#000"/><rect x="2" y="7" width="3" height="1" fill="#ffff80"/><rect x="5" y="7" width="1" height="1" fill="#000"/><rect x="6" y="7" width="2" height="1" fill="#ffff80"/><rect x="8" y="7" width="2" height="1" fill="#000"/><rect x="10" y="7" width="2" height="1" fill="#ffff80"/><rect x="12" y="7" width="3" height="1" fill="#000"/><rect x="1" y="8" width="1" height="1" fill="#000"/><rect x="2" y="8" width="1" height="1" fill="#ffff80"/><rect x="3" y="8" width="1" height="1" fill="#c0c000"/><rect x="4" y="8" width="2" height="1" fill="#ffff80"/><rect x="6" y="8" width="1" height="1" fill="#000"/><rect x="7" y="8" width="1" height="1" fill="#ffff80"/><rect x="8" y="8" width="2" height="1" fill="#000"/><rect x="10" y="8" width="2" height="1" fill="#ffff80"/><rect x="12" y="8" width="3" height="1" fill="#000"/><rect x="1" y="9" width="1" height="1" fill="#000"/><rect x="2" y="9" width="1" height="1" fill="#ffff80"/><rect x="3" y="9" width="1" height="1" fill="#000"/><rect x="4" y="9" width="4" height="1" fill="#ffff80"/><rect x="8" y="9" width="2" height="1" fill="#000"/><rect x="10" y="9" width="2" height="1" fill="#ffff80"/><rect x="12" y="9" width="3" height="1" fill="#000"/><rect x="1" y="10" width="1" height="1" fill="#000"/><rect x="2" y="10" width="4" height="1" fill="#ffff80"/><rect x="6" y="10" width="11" height="1" fill="#000"/><rect x="2" y="11" width="15" height="1" fill="#000"/><rect x="6" y="12" width="1" height="1" fill="#000"/><rect x="7" y="12" width="1" height="1" fill="#fff"/><rect x="8" y="12" width="4" height="1" fill="#000"/><rect x="12" y="12" width="1" height="1" fill="#fff"/><rect x="13" y="12" width="4" height="1" fill="#000"/><rect x="6" y="13" width="11" height="1" fill="#000"/><rect x="6" y="14" width="11" height="1" fill="#000"/><rect x="6" y="15" width="3" height="1" fill="#000"/><rect x="14" y="15" width="3" height="1" fill="#000"/><rect x="6" y="16" width="1" height="1" fill="#000"/><rect x="7" y="16" width="1" height="1" fill="#fff"/><rect x="8" y="16" width="1" height="1" fill="#000"/><rect x="14" y="16" width="1" height="1" fill="#000"/><rect x="15" y="16" width="1" height="1" fill="#fff"/><rect x="16" y="16" width="1" height="1" fill="#000"/><rect x="6" y="17" width="3" height="1" fill="#000"/><rect x="14" y="17" width="3" height="1" fill="#000"/></svg>
<div class="a" style="left:246px;top:30px;width:22px;height:22px;background:#c0c0c0;border-left:1px solid #fff;border-top:1px solid #fff;border-right:1px solid #000;border-bottom:1px solid #000"></div>
<svg style="left:247px;top:31px" width="20" height="20" shape-rendering="crispEdges"><rect x="6" y="2" width="1" height="1" fill="#000"/><rect x="10" y="2" width="1" height="1" fill="#000"/><rect x="6" y="3" width="1" height="1" fill="#000"/><rect x="10" y="3" width="1" height="1" fill="#000"/><rect x="6" y="4" width="1" height="1" fill="#000"/><rect x="10" y="4" width="1" height="1" fill="#000"/><rect x="6" y="5" width="1" height="1" fill="#000"/><rect x="10" y="5" width="1" height="1" fill="#000"/><rect x="7" y="6" width="1" height="1" fill="#000"/><rect x="9" y="6" width="1" height="1" fill="#000"/><rect x="8" y="7" width="1" height="1" fill="#000"/><rect x="8" y="8" width="1" height="1" fill="#000"/><rect x="8" y="9" width="1" height="1" fill="#000080"/><rect x="10" y="9" width="2" height="1" fill="#000080"/><rect x="5" y="10" width="2" height="1" fill="#000080"/><rect x="8" y="10" width="2" height="1" fill="#000080"/><rect x="12" y="10" width="1" height="1" fill="#000080"/><rect x="4" y="11" width="1" height="1" fill="#000080"/><rect x="5" y="11" width="2" height="1" fill="#fff"/><rect x="7" y="11" width="1" height="1" fill="#000080"/><rect x="9" y="11" width="1" height="1" fill="#000080"/><rect x="10" y="11" width="2" height="1" fill="#d8d8d8"/><rect x="12" y="11" width="1" height="1" fill="#000080"/><rect x="4" y="12" width="1" height="1" fill="#000080"/><rect x="5" y="12" width="2" height="1" fill="#d8d8d8"/><rect x="7" y="12" width="1" height="1" fill="#000080"/><rect x="9" y="12" width="1" height="1" fill="#000080"/><rect x="10" y="12" width="2" height="1" fill="#fff"/><rect x="12" y="12" width="1" height="1" fill="#000080"/><rect x="4" y="13" width="1" height="1" fill="#000080"/><rect x="5" y="13" width="2" height="1" fill="#d8d8d8"/><rect x="7" y="13" width="1" height="1" fill="#000080"/><rect x="9" y="13" width="1" height="1" fill="#000080"/><rect x="10" y="13" width="2" height="1" fill="#d8d8d8"/><rect x="12" y="13" width="1" height="1" fill="#000080"/><rect x="4" y="14" width="1" height="1" fill="#000080"/><rect x="5" y="14" width="2" height="1" fill="#d8d8d8"/><rect x="7" y="14" width="1" height="1" fill="#000080"/><rect x="10" y="14" width="2" height="1" fill="#000080"/><rect x="5" y="15" width="2" height="1" fill="#000080"/></svg>
<div class="a" style="left:268px;top:30px;width:22px;height:22px;background:#c0c0c0;border-left:1px solid #fff;border-top:1px solid #fff;border-right:1px solid #000;border-bottom:1px solid #000"></div>
<svg style="left:269px;top:31px" width="20" height="20" shape-rendering="crispEdges"><rect x="3" y="2" width="6" height="1" fill="#000"/><rect x="3" y="3" width="1" height="1" fill="#000"/><rect x="4" y="3" width="4" height="1" fill="#fff"/><rect x="8" y="3" width="2" height="1" fill="#000"/><rect x="3" y="4" width="1" height="1" fill="#000"/><rect x="4" y="4" width="1" height="1" fill="#fff"/><rect x="5" y="4" width="2" height="1" fill="#000"/><rect x="7" y="4" width="2" height="1" fill="#fff"/><rect x="9" y="4" width="2" height="1" fill="#000"/><rect x="3" y="5" width="1" height="1" fill="#000"/><rect x="4" y="5" width="6" height="1" fill="#fff"/><rect x="10" y="5" width="1" height="1" fill="#000"/><rect x="3" y="6" width="1" height="1" fill="#000"/><rect x="4" y="6" width="1" height="1" fill="#fff"/><rect x="5" y="6" width="3" height="1" fill="#000"/><rect x="8" y="6" width="6" height="1" fill="#000080"/><rect x="3" y="7" width="1" height="1" fill="#000"/><rect x="4" y="7" width="4" height="1" fill="#fff"/><rect x="8" y="7" width="1" height="1" fill="#000080"/><rect x="9" y="7" width="4" height="1" fill="#fff"/><rect x="13" y="7" width="2" height="1" fill="#000080"/><rect x="3" y="8" width="1" height="1" fill="#000"/><rect x="4" y="8" width="1" height="1" fill="#fff"/><rect x="5" y="8" width="3" height="1" fill="#000"/><rect x="8" y="8" width="1" height="1" fill="#000080"/><rect x="9" y="8" width="1" height="1" fill="#fff"/><rect x="10" y="8" width="2" height="1" fill="#000"/><rect x="12" y="8" width="2" height="1" fill="#fff"/><rect x="14" y="8" width="2" height="1" fill="#000080"/><rect x="3" y="9" width="1" height="1" fill="#000"/><rect x="4" y="9" width="4" height="1" fill="#fff"/><rect x="8" y="9" width="1" height="1" fill="#000080"/><rect x="9" y="9" width="6" height="1" fill="#fff"/><rect x="15" y="9" width="1" height="1" fill="#000080"/><rect x="3" y="10" width="5" height="1" fill="#000"/><rect x="8" y="10" width="1" height="1" fill="#000080"/><rect x="9" y="10" width="1" height="1" fill="#fff"/><rect x="10" y="10" width="4" height="1" fill="#000"/><rect x="14" y="10" width="1" height="1" fill="#fff"/><rect x="15" y="10" width="1" height="1" fill="#000080"/><rect x="8" y="11" width="1" height="1" fill="#000080"/><rect x="9" y="11" width="6" height="1" fill="#fff"/><rect x="15" y="11" width="1" height="1" fill="#000080"/><rect x="8" y="12" width="1" height="1" fill="#000080"/><rect x="9" y="12" width="1" height="1" fill="#fff"/><rect x="10" y="12" width="4" height="1" fill="#000"/><rect x="14" y="12" width="1" height="1" fill="#fff"/><rect x="15" y="12" width="1" height="1" fill="#000080"/><rect x="8" y="13" width="1" height="1" fill="#000080"/><rect x="9" y="13" width="6" height="1" fill="#fff"/><rect x="15" y="13" width="1" height="1" fill="#000080"/><rect x="8" y="14" width="8" height="1" fill="#000080"/></svg>
<div class="a" style="left:290px;top:30px;width:22px;height:22px;background:#c0c0c0;border-left:1px solid #fff;border-top:1px solid #fff;border-right:1px solid #000;border-bottom:1px solid #000"></div>
<svg style="left:291px;top:31px" width="20" height="20" shape-rendering="crispEdges"><rect x="8" y="2" width="3" height="1" fill="#000"/><rect x="4" y="3" width="4" height="1" fill="#000"/><rect x="8" y="3" width="1" height="1" fill="#fff"/><rect x="9" y="3" width="1" height="1" fill="#000"/><rect x="10" y="3" width="1" height="1" fill="#fff"/><rect x="11" y="3" width="4" height="1" fill="#000"/><rect x="3" y="4" width="1" height="1" fill="#000"/><rect x="4" y="4" width="2" height="1" fill="#808000"/><rect x="6" y="4" width="1" height="1" fill="#000"/><rect x="7" y="4" width="5" height="1" fill="#fff"/><rect x="12" y="4" width="1" height="1" fill="#000"/><rect x="13" y="4" width="2" height="1" fill="#808000"/><rect x="15" y="4" width="1" height="1" fill="#000"/><rect x="3" y="5" width="1" height="1" fill="#000"/><rect x="4" y="5" width="3" height="1" fill="#808000"/><rect x="7" y="5" width="5" height="1" fill="#000"/><rect x="12" y="5" width="4" height="1" fill="#808000"/><rect x="16" y="5" width="1" height="1" fill="#000"/><rect x="3" y="6" width="1" height="1" fill="#000"/><rect x="4" y="6" width="13" height="1" fill="#808000"/><rect x="17" y="6" width="1" height="1" fill="#000"/><rect x="3" y="7" width="1" height="1" fill="#000"/><rect x="4" y="7" width="13" height="1" fill="#808000"/><rect x="17" y="7" width="1" height="1" fill="#000"/><rect x="3" y="8" width="1" height="1" fill="#000"/><rect x="4" y="8" width="13" height="1" fill="#808000"/><rect x="17" y="8" width="1" height="1" fill="#000"/><rect x="3" y="9" width="1" height="1" fill="#000"/><rect x="4" y="9" width="7" height="1" fill="#808000"/><rect x="11" y="9" width="8" height="1" fill="#000080"/><rect x="3" y="10" width="1" height="1" fill="#000"/><rect x="4" y="10" width="7" height="1" fill="#808000"/><rect x="11" y="10" width="1" height="1" fill="#000080"/><rect x="12" y="10" width="6" height="1" fill="#fff"/><rect x="18" y="10" width="1" height="1" fill="#000080"/><rect x="3" y="11" width="1" height="1" fill="#000"/><rect x="4" y="11" width="7" height="1" fill="#808000"/><rect x="11" y="11" width="1" height="1" fill="#000080"/><rect x="12" y="11" width="1" height="1" fill="#fff"/><rect x="13" y="11" width="3" height="1" fill="#000080"/><rect x="16" y="11" width="2" height="1" fill="#fff"/><rect x="18" y="11" width="1" height="1" fill="#000080"/><rect x="3" y="12" width="1" height="1" fill="#000"/><rect x="4" y="12" width="7" height="1" fill="#808000"/><rect x="11" y="12" width="1" height="1" fill="#000080"/><rect x="12" y="12" width="6" height="1" fill="#fff"/><rect x="18" y="12" width="1" height="1" fill="#000080"/><rect x="3" y="13" width="8" height="1" fill="#000"/><rect x="11" y="13" width="1" height="1" fill="#000080"/><rect x="12" y="13" width="1" height="1" fill="#fff"/><rect x="13" y="13" width="4" height="1" fill="#000080"/><rect x="17" y="13" width="1" height="1" fill="#fff"/><rect x="18" y="13" width="1" height="1" fill="#000080"/><rect x="11" y="14" width="1" height="1" fill="#000080"/><rect x="12" y="14" width="6" height="1" fill="#fff"/><rect x="18" y="14" width="1" height="1" fill="#000080"/><rect x="11" y="15" width="8" height="1" fill="#000080"/></svg>
<div class="a" style="left:312px;top:30px;width:22px;height:22px;background:#c0c0c0;border-left:1px solid #fff;border-top:1px solid #fff;border-right:1px solid #000;border-bottom:1px solid #000"></div>
<svg style="left:313px;top:31px" width="20" height="20" shape-rendering="crispEdges"><rect x="2" y="3" width="3" height="1" fill="#000"/><rect x="1" y="4" width="1" height="1" fill="#000"/><rect x="2" y="4" width="3" height="1" fill="#ffff80"/><rect x="5" y="4" width="7" height="1" fill="#000"/><rect x="1" y="5" width="1" height="1" fill="#000"/><rect x="2" y="5" width="3" height="1" fill="#ffff80"/><rect x="5" y="5" width="5" height="1" fill="#c0c000"/><rect x="10" y="5" width="2" height="1" fill="#ffff80"/><rect x="12" y="5" width="1" height="1" fill="#000"/><rect x="1" y="6" width="1" height="1" fill="#000"/><rect x="2" y="6" width="2" height="1" fill="#ffff80"/><rect x="4" y="6" width="1" height="1" fill="#000"/><rect x="5" y="6" width="7" height="1" fill="#ffff80"/><rect x="12" y="6" width="1" height="1" fill="#000"/><rect x="1" y="7" width="1" height="1" fill="#000"/><rect x="2" y="7" width="3" height="1" fill="#ffff80"/><rect x="5" y="7" width="1" height="1" fill="#000"/><rect x="6" y="7" width="2" height="1" fill="#ffff80"/><rect x="8" y="7" width="2" height="1" fill="#000"/><rect x="10" y="7" width="2" height="1" fill="#ffff80"/><rect x="12" y="7" width="3" height="1" fill="#000"/><rect x="1" y="8" width="1" height="1" fill="#000"/><rect x="2" y="8" width="1" height="1" fill="#ffff80"/><rect x="3" y="8" width="1" height="1" fill="#c0c000"/><rect x="4" y="8" width="2" height="1" fill="#ffff80"/><rect x="6" y="8" width="1" height="1" fill="#000"/><rect x="7" y="8" width="1" height="1" fill="#ffff80"/><rect x="8" y="8" width="2" height="1" fill="#000"/><rect x="10" y="8" width="2" height="1" fill="#ffff80"/><rect x="12" y="8" width="3" height="1" fill="#000"/><rect x="1" y="9" width="1" height="1" fill="#000"/><rect x="2" y="9" width="1" height="1" fill="#ffff80"/><rect x="3" y="9" width="1" height="1" fill="#000"/><rect x="4" y="9" width="4" height="1" fill="#ffff80"/><rect x="8" y="9" width="2" height="1" fill="#000"/><rect x="10" y="9" width="2" height="1" fill="#ffff80"/><rect x="12" y="9" width="3" height="1" fill="#000"/><rect x="1" y="10" width="1" height="1" fill="#000"/><rect x="2" y="10" width="4" height="1" fill="#ffff80"/><rect x="6" y="10" width="11" height="1" fill="#000"/><rect x="2" y="11" width="15" height="1" fill="#000"/><rect x="6" y="12" width="1" height="1" fill="#000"/><rect x="7" y="12" width="1" height="1" fill="#fff"/><rect x="8" y="12" width="4" height="1" fill="#000"/><rect x="12" y="12" width="1" height="1" fill="#fff"/><rect x="13" y="12" width="4" height="1" fill="#000"/><rect x="6" y="13" width="11" height="1" fill="#000"/><rect x="6" y="14" width="11" height="1" fill="#000"/><rect x="6" y="15" width="3" height="1" fill="#000"/><rect x="14" y="15" width="3" height="1" fill="#000"/><rect x="6" y="16" width="1" height="1" fill="#000"/><rect x="7" y="16" width="1" height="1" fill="#fff"/><rect x="8" y="16" width="1" height="1" fill="#000"/><rect x="14" y="16" width="1" height="1" fill="#000"/><rect x="15" y="16" width="1" height="1" fill="#fff"/><rect x="16" y="16" width="1" height="1" fill="#000"/><rect x="6" y="17" width="3" height="1" fill="#000"/><rect x="14" y="17" width="3" height="1" fill="#000"/></svg>
<div class="a" style="left:334px;top:30px;width:22px;height:22px;background:#c0c0c0;border-left:1px solid #fff;border-top:1px solid #fff;border-right:1px solid #000;border-bottom:1px solid #000"></div>
<svg style="left:335px;top:31px" width="20" height="20" shape-rendering="crispEdges"><rect x="14" y="0" width="1" height="1" fill="#0000ff"/><rect x="17" y="0" width="1" height="1" fill="#0000ff"/><rect x="14" y="1" width="2" height="1" fill="#0000ff"/><rect x="17" y="1" width="2" height="1" fill="#0000ff"/><rect x="14" y="2" width="6" height="1" fill="#0000ff"/><rect x="2" y="3" width="3" height="1" fill="#000"/><rect x="14" y="3" width="2" height="1" fill="#0000ff"/><rect x="17" y="3" width="2" height="1" fill="#0000ff"/><rect x="1" y="4" width="1" height="1" fill="#000"/><rect x="2" y="4" width="3" height="1" fill="#ffff80"/><rect x="5" y="4" width="7" height="1" fill="#000"/><rect x="14" y="4" width="1" height="1" fill="#0000ff"/><rect x="17" y="4" width="1" height="1" fill="#0000ff"/><rect x="1" y="5" width="1" height="1" fill="#000"/><rect x="2" y="5" width="3" height="1" fill="#ffff80"/><rect x="5" y="5" width="5" height="1" fill="#c0c000"/><rect x="10" y="5" width="2" height="1" fill="#ffff80"/><rect x="12" y="5" width="1" height="1" fill="#000"/><rect x="1" y="6" width="1" height="1" fill="#000"/><rect x="2" y="6" width="2" height="1" fill="#ffff80"/><rect x="4" y="6" width="1" height="1" fill="#000"/><rect x="5" y="6" width="7" height="1" fill="#ffff80"/><rect x="12" y="6" width="1" height="1" fill="#000"/><rect x="1" y="7" width="1" height="1" fill="#000"/><rect x="2" y="7" width="3" height="1" fill="#ffff80"/><rect x="5" y="7" width="1" height="1" fill="#000"/><rect x="6" y="7" width="2" height="1" fill="#ffff80"/><rect x="8" y="7" width="2" height="1" fill="#000"/><rect x="10" y="7" width="2" height="1" fill="#ffff80"/><rect x="12" y="7" width="3" height="1" fill="#000"/><rect x="1" y="8" width="1" height="1" fill="#000"/><rect x="2" y="8" width="1" height="1" fill="#ffff80"/><rect x="3" y="8" width="1" height="1" fill="#c0c000"/><rect x="4" y="8" width="2" height="1" fill="#ffff80"/><rect x="6" y="8" width="1" height="1" fill="#000"/><rect x="7" y="8" width="1" height="1" fill="#ffff80"/><rect x="8" y="8" width="2" height="1" fill="#000"/><rect x="10" y="8" width="2" height="1" fill="#ffff80"/><rect x="12" y="8" width="3" height="1" fill="#000"/><rect x="1" y="9" width="1" height="1" fill="#000"/><rect x="2" y="9" width="1" height="1" fill="#ffff80"/><rect x="3" y="9" width="1" height="1" fill="#000"/><rect x="4" y="9" width="4" height="1" fill="#ffff80"/><rect x="8" y="9" width="2" height="1" fill="#000"/><rect x="10" y="9" width="2" height="1" fill="#ffff80"/><rect x="12" y="9" width="3" height="1" fill="#000"/><rect x="1" y="10" width="1" height="1" fill="#000"/><rect x="2" y="10" width="4" height="1" fill="#ffff80"/><rect x="6" y="10" width="11" height="1" fill="#000"/><rect x="2" y="11" width="15" height="1" fill="#000"/><rect x="6" y="12" width="1" height="1" fill="#000"/><rect x="7" y="12" width="1" height="1" fill="#fff"/><rect x="8" y="12" width="4" height="1" fill="#000"/><rect x="12" y="12" width="1" height="1" fill="#fff"/><rect x="13" y="12" width="4" height="1" fill="#000"/><rect x="6" y="13" width="11" height="1" fill="#000"/><rect x="6" y="14" width="11" height="1" fill="#000"/><rect x="6" y="15" width="3" height="1" fill="#000"/><rect x="14" y="15" width="3" height="1" fill="#000"/><rect x="6" y="16" width="1" height="1" fill="#000"/><rect x="7" y="16" width="1" height="1" fill="#fff"/><rect x="8" y="16" width="1" height="1" fill="#000"/><rect x="14" y="16" width="1" height="1" fill="#000"/><rect x="15" y="16" width="1" height="1" fill="#fff"/><rect x="16" y="16" width="1" height="1" fill="#000"/><rect x="6" y="17" width="3" height="1" fill="#000"/><rect x="14" y="17" width="3" height="1" fill="#000"/></svg>
<div class="a" style="left:450px;top:30px;width:22px;height:22px;background:#c0c0c0;border-left:1px solid #fff;border-top:1px solid #fff;border-right:1px solid #000;border-bottom:1px solid #000"></div>
<svg style="left:451px;top:31px" width="20" height="20" shape-rendering="crispEdges"><rect x="9" y="4" width="6" height="1" fill="#000"/><rect x="9" y="5" width="1" height="1" fill="#000"/><rect x="10" y="5" width="4" height="1" fill="#808080"/><rect x="14" y="5" width="1" height="1" fill="#000"/><rect x="7" y="6" width="3" height="1" fill="#000"/><rect x="10" y="6" width="1" height="1" fill="#808080"/><rect x="11" y="6" width="1" height="1" fill="#000"/><rect x="12" y="6" width="2" height="1" fill="#808080"/><rect x="14" y="6" width="3" height="1" fill="#000"/><rect x="9" y="7" width="1" height="1" fill="#000"/><rect x="10" y="7" width="1" height="1" fill="#808080"/><rect x="11" y="7" width="1" height="1" fill="#000"/><rect x="12" y="7" width="2" height="1" fill="#808080"/><rect x="14" y="7" width="1" height="1" fill="#000"/><rect x="9" y="8" width="1" height="1" fill="#000"/><rect x="10" y="8" width="4" height="1" fill="#808080"/><rect x="14" y="8" width="1" height="1" fill="#000"/><rect x="7" y="9" width="3" height="1" fill="#000"/><rect x="10" y="9" width="4" height="1" fill="#808080"/><rect x="14" y="9" width="1" height="1" fill="#000"/><rect x="4" y="10" width="1" height="1" fill="#000"/><rect x="9" y="10" width="1" height="1" fill="#000"/><rect x="10" y="10" width="4" height="1" fill="#808080"/><rect x="14" y="10" width="1" height="1" fill="#000"/><rect x="4" y="11" width="2" height="1" fill="#000"/><rect x="9" y="11" width="1" height="1" fill="#000"/><rect x="10" y="11" width="4" height="1" fill="#808080"/><rect x="14" y="11" width="1" height="1" fill="#000"/><rect x="2" y="12" width="8" height="1" fill="#000"/><rect x="10" y="12" width="4" height="1" fill="#808080"/><rect x="14" y="12" width="1" height="1" fill="#000"/><rect x="4" y="13" width="2" height="1" fill="#000"/><rect x="9" y="13" width="1" height="1" fill="#000"/><rect x="10" y="13" width="4" height="1" fill="#808080"/><rect x="14" y="13" width="1" height="1" fill="#000"/><rect x="4" y="14" width="1" height="1" fill="#000"/><rect x="9" y="14" width="1" height="1" fill="#000"/><rect x="10" y="14" width="4" height="1" fill="#808080"/><rect x="14" y="14" width="1" height="1" fill="#000"/><rect x="7" y="15" width="3" height="1" fill="#000"/><rect x="10" y="15" width="4" height="1" fill="#808080"/><rect x="14" y="15" width="1" height="1" fill="#000"/><rect x="9" y="16" width="6" height="1" fill="#000"/></svg>
<div class="a" style="left:472px;top:30px;width:22px;height:22px;background:#c0c0c0;border-left:1px solid #fff;border-top:1px solid #fff;border-right:1px solid #000;border-bottom:1px solid #000"></div>
<svg style="left:473px;top:31px" width="20" height="20" shape-rendering="crispEdges"><rect x="12" y="5" width="2" height="1" fill="#000"/><rect x="16" y="5" width="1" height="1" fill="#000"/><rect x="3" y="6" width="8" height="1" fill="#000"/><rect x="16" y="6" width="1" height="1" fill="#000"/><rect x="7" y="7" width="1" height="1" fill="#000"/><rect x="7" y="8" width="1" height="1" fill="#000"/><rect x="12" y="8" width="2" height="1" fill="#000"/><rect x="7" y="9" width="4" height="1" fill="#000"/><rect x="13" y="9" width="1" height="1" fill="#000"/><rect x="7" y="10" width="1" height="1" fill="#000"/><rect x="15" y="10" width="1" height="1" fill="#000"/><rect x="7" y="11" width="1" height="1" fill="#000"/><rect x="14" y="11" width="2" height="1" fill="#000"/><rect x="7" y="12" width="4" height="1" fill="#000"/><rect x="14" y="12" width="4" height="1" fill="#000"/><rect x="7" y="13" width="1" height="1" fill="#000"/><rect x="14" y="13" width="2" height="1" fill="#000"/><rect x="7" y="14" width="1" height="1" fill="#000"/><rect x="12" y="14" width="1" height="1" fill="#000"/><rect x="15" y="14" width="1" height="1" fill="#000"/><rect x="7" y="15" width="4" height="1" fill="#000"/><rect x="12" y="15" width="2" height="1" fill="#000"/></svg>
<div class="a" style="left:494px;top:30px;width:22px;height:22px;background:#c0c0c0;border-left:1px solid #fff;border-top:1px solid #fff;border-right:1px solid #000;border-bottom:1px solid #000"></div>
<svg style="left:495px;top:31px" width="20" height="20" shape-rendering="crispEdges"><rect x="5" y="3" width="10" height="1" fill="#000"/><rect x="5" y="4" width="1" height="1" fill="#000"/><rect x="6" y="4" width="8" height="1" fill="#808080"/><rect x="14" y="4" width="1" height="1" fill="#000"/><rect x="3" y="5" width="3" height="1" fill="#000"/><rect x="6" y="5" width="8" height="1" fill="#808080"/><rect x="14" y="5" width="3" height="1" fill="#000"/><rect x="5" y="6" width="1" height="1" fill="#000"/><rect x="6" y="6" width="8" height="1" fill="#808080"/><rect x="14" y="6" width="1" height="1" fill="#000"/><rect x="5" y="7" width="1" height="1" fill="#000"/><rect x="6" y="7" width="8" height="1" fill="#808080"/><rect x="14" y="7" width="1" height="1" fill="#000"/><rect x="3" y="8" width="3" height="1" fill="#000"/><rect x="6" y="8" width="8" height="1" fill="#808080"/><rect x="14" y="8" width="1" height="1" fill="#000"/><rect x="5" y="9" width="1" height="1" fill="#000"/><rect x="6" y="9" width="8" height="1" fill="#808080"/><rect x="14" y="9" width="1" height="1" fill="#000"/><rect x="5" y="10" width="1" height="1" fill="#000"/><rect x="6" y="10" width="8" height="1" fill="#808080"/><rect x="14" y="10" width="1" height="1" fill="#000"/><rect x="3" y="11" width="3" height="1" fill="#000"/><rect x="6" y="11" width="8" height="1" fill="#808080"/><rect x="14" y="11" width="1" height="1" fill="#000"/><rect x="5" y="12" width="1" height="1" fill="#000"/><rect x="6" y="12" width="8" height="1" fill="#808080"/><rect x="14" y="12" width="1" height="1" fill="#000"/><rect x="5" y="13" width="1" height="1" fill="#000"/><rect x="6" y="13" width="8" height="1" fill="#808080"/><rect x="14" y="13" width="1" height="1" fill="#000"/><rect x="5" y="14" width="10" height="1" fill="#000"/></svg>
<div class="a" style="left:516px;top:30px;width:22px;height:22px;background:#c0c0c0;border-left:1px solid #fff;border-top:1px solid #fff;border-right:1px solid #000;border-bottom:1px solid #000"></div>
<svg style="left:517px;top:31px" width="20" height="20" shape-rendering="crispEdges"><rect x="3" y="7" width="1" height="1" fill="#000"/><rect x="5" y="7" width="1" height="1" fill="#000"/><rect x="9" y="7" width="1" height="1" fill="#000"/><rect x="15" y="7" width="3" height="1" fill="#000"/><rect x="3" y="8" width="1" height="1" fill="#000"/><rect x="5" y="8" width="2" height="1" fill="#000"/><rect x="9" y="8" width="1" height="1" fill="#000"/><rect x="15" y="8" width="1" height="1" fill="#000"/><rect x="18" y="8" width="1" height="1" fill="#000"/><rect x="3" y="9" width="1" height="1" fill="#000"/><rect x="5" y="9" width="1" height="1" fill="#000"/><rect x="7" y="9" width="1" height="1" fill="#000"/><rect x="9" y="9" width="1" height="1" fill="#000"/><rect x="11" y="9" width="3" height="1" fill="#000"/><rect x="15" y="9" width="3" height="1" fill="#000"/><rect x="3" y="10" width="1" height="1" fill="#000"/><rect x="5" y="10" width="1" height="1" fill="#000"/><rect x="8" y="10" width="2" height="1" fill="#000"/><rect x="15" y="10" width="1" height="1" fill="#000"/><rect x="17" y="10" width="1" height="1" fill="#000"/><rect x="3" y="11" width="1" height="1" fill="#000"/><rect x="5" y="11" width="1" height="1" fill="#000"/><rect x="9" y="11" width="1" height="1" fill="#000"/><rect x="15" y="11" width="1" height="1" fill="#000"/><rect x="18" y="11" width="1" height="1" fill="#000"/></svg>
<div class="a" style="left:538px;top:30px;width:22px;height:22px;background:#c0c0c0;border-left:1px solid #fff;border-top:1px solid #fff;border-right:1px solid #000;border-bottom:1px solid #000"></div>
<svg style="left:539px;top:31px" width="20" height="20" shape-rendering="crispEdges"><rect x="3" y="7" width="3" height="1" fill="#000"/><rect x="10" y="7" width="1" height="1" fill="#000"/><rect x="15" y="7" width="1" height="1" fill="#000"/><rect x="2" y="8" width="1" height="1" fill="#000"/><rect x="11" y="8" width="1" height="1" fill="#000"/><rect x="15" y="8" width="1" height="1" fill="#000"/><rect x="2" y="9" width="1" height="1" fill="#000"/><rect x="6" y="9" width="7" height="1" fill="#000"/><rect x="15" y="9" width="1" height="1" fill="#000"/><rect x="2" y="10" width="1" height="1" fill="#000"/><rect x="11" y="10" width="1" height="1" fill="#000"/><rect x="15" y="10" width="1" height="1" fill="#000"/><rect x="3" y="11" width="3" height="1" fill="#000"/><rect x="10" y="11" width="1" height="1" fill="#000"/><rect x="15" y="11" width="4" height="1" fill="#000"/></svg>
<div class="a" style="left:560px;top:30px;width:22px;height:22px;background:#c0c0c0;border-left:1px solid #fff;border-top:1px solid #fff;border-right:1px solid #000;border-bottom:1px solid #000"></div>
<svg style="left:561px;top:31px" width="20" height="20" shape-rendering="crispEdges"><rect x="2" y="7" width="3" height="1" fill="#000"/><rect x="10" y="7" width="1" height="1" fill="#000"/><rect x="14" y="7" width="3" height="1" fill="#000"/><rect x="1" y="8" width="1" height="1" fill="#000"/><rect x="9" y="8" width="1" height="1" fill="#000"/><rect x="14" y="8" width="1" height="1" fill="#000"/><rect x="17" y="8" width="1" height="1" fill="#000"/><rect x="1" y="9" width="1" height="1" fill="#000"/><rect x="6" y="9" width="4" height="1" fill="#000"/><rect x="14" y="9" width="3" height="1" fill="#000"/><rect x="1" y="10" width="1" height="1" fill="#000"/><rect x="9" y="10" width="1" height="1" fill="#000"/><rect x="14" y="10" width="1" height="1" fill="#000"/><rect x="16" y="10" width="1" height="1" fill="#000"/><rect x="2" y="11" width="3" height="1" fill="#000"/><rect x="10" y="11" width="1" height="1" fill="#000"/><rect x="14" y="11" width="1" height="1" fill="#000"/><rect x="17" y="11" width="1" height="1" fill="#000"/></svg>
<div class="a" style="left:582px;top:30px;width:22px;height:22px;background:#c0c0c0;border-left:1px solid #fff;border-top:1px solid #fff;border-right:1px solid #000;border-bottom:1px solid #000"></div>
<svg style="left:583px;top:31px" width="20" height="20" shape-rendering="crispEdges"><rect x="14" y="3" width="3" height="1" fill="#000"/><rect x="14" y="4" width="1" height="1" fill="#000"/><rect x="15" y="4" width="2" height="1" fill="#808080"/><rect x="14" y="5" width="1" height="1" fill="#000"/><rect x="15" y="5" width="2" height="1" fill="#808080"/><rect x="14" y="6" width="1" height="1" fill="#000"/><rect x="15" y="6" width="2" height="1" fill="#808080"/><rect x="2" y="7" width="1" height="1" fill="#000"/><rect x="4" y="7" width="1" height="1" fill="#000"/><rect x="7" y="7" width="1" height="1" fill="#000"/><rect x="11" y="7" width="2" height="1" fill="#000"/><rect x="14" y="7" width="1" height="1" fill="#000"/><rect x="15" y="7" width="2" height="1" fill="#808080"/><rect x="2" y="8" width="1" height="1" fill="#000"/><rect x="4" y="8" width="2" height="1" fill="#000"/><rect x="7" y="8" width="1" height="1" fill="#000"/><rect x="10" y="8" width="1" height="1" fill="#000"/><rect x="13" y="8" width="2" height="1" fill="#000"/><rect x="15" y="8" width="2" height="1" fill="#808080"/><rect x="2" y="9" width="1" height="1" fill="#000"/><rect x="4" y="9" width="1" height="1" fill="#000"/><rect x="6" y="9" width="2" height="1" fill="#000"/><rect x="9" y="9" width="1" height="1" fill="#000"/><rect x="14" y="9" width="1" height="1" fill="#000"/><rect x="15" y="9" width="2" height="1" fill="#808080"/><rect x="2" y="10" width="1" height="1" fill="#000"/><rect x="4" y="10" width="1" height="1" fill="#000"/><rect x="7" y="10" width="1" height="1" fill="#000"/><rect x="10" y="10" width="1" height="1" fill="#000"/><rect x="13" y="10" width="2" height="1" fill="#000"/><rect x="15" y="10" width="2" height="1" fill="#808080"/><rect x="2" y="11" width="1" height="1" fill="#000"/><rect x="4" y="11" width="1" height="1" fill="#000"/><rect x="7" y="11" width="1" height="1" fill="#000"/><rect x="11" y="11" width="2" height="1" fill="#000"/><rect x="14" y="11" width="1" height="1" fill="#000"/><rect x="15" y="11" width="2" height="1" fill="#808080"/><rect x="14" y="12" width="1" height="1" fill="#000"/><rect x="15" y="12" width="2" height="1" fill="#808080"/><rect x="14" y="13" width="1" height="1" fill="#000"/><rect x="15" y="13" width="2" height="1" fill="#808080"/><rect x="14" y="14" width="1" height="1" fill="#000"/><rect x="15" y="14" width="2" height="1" fill="#808080"/><rect x="14" y="15" width="3" height="1" fill="#000"/></svg>
<div class="a" style="left:604px;top:30px;width:22px;height:22px;background:#c0c0c0;border-left:1px solid #fff;border-top:1px solid #fff;border-right:1px solid #000;border-bottom:1px solid #000"></div>
<svg style="left:605px;top:31px" width="20" height="20" shape-rendering="crispEdges"><rect x="6" y="3" width="3" height="1" fill="#000"/><rect x="5" y="4" width="1" height="1" fill="#000"/><rect x="9" y="4" width="1" height="1" fill="#000"/><rect x="5" y="5" width="1" height="1" fill="#000"/><rect x="6" y="6" width="3" height="1" fill="#000"/><rect x="9" y="7" width="1" height="1" fill="#000"/><rect x="5" y="8" width="1" height="1" fill="#000"/><rect x="9" y="8" width="1" height="1" fill="#000"/><rect x="6" y="9" width="3" height="1" fill="#000"/><rect x="9" y="10" width="3" height="1" fill="#000"/><rect x="9" y="11" width="1" height="1" fill="#000"/><rect x="12" y="11" width="1" height="1" fill="#000"/><rect x="9" y="12" width="1" height="1" fill="#000"/><rect x="12" y="12" width="1" height="1" fill="#000"/><rect x="9" y="13" width="3" height="1" fill="#000"/><rect x="9" y="14" width="1" height="1" fill="#000"/><rect x="11" y="14" width="1" height="1" fill="#000"/><rect x="9" y="15" width="1" height="1" fill="#000"/><rect x="12" y="15" width="1" height="1" fill="#000"/><rect x="9" y="16" width="1" height="1" fill="#000"/><rect x="12" y="16" width="1" height="1" fill="#000"/><rect x="9" y="17" width="1" height="1" fill="#000"/><rect x="12" y="17" width="1" height="1" fill="#000"/></svg>
<div class="a" style="left:366px;top:30px;width:74px;height:21px;background:#fff;border:2px solid #8c8c8c"></div>
<span class="t" style="left:369px;top:32px;font-size:12px;color:#000">100 <span style="font-size:11px;color:#404040">%</span></span>
<div class="a" style="left:422px;top:32px;width:16px;height:17px;background:#f0f0f0;border-left:1px solid #fff;border-top:1px solid #fff;border-right:1px solid #c8c8c8;border-bottom:1px solid #a0a0a0"></div>
<svg style="left:422px;top:32px" width="16" height="17" shape-rendering="crispEdges"><path d="M5 8h7v1h-1v1h-1v1h-1v1h-1v-1h-1v-1h-1v-1h-1z" fill="#000"/></svg>
<div class="a" style="left:0px;top:57px;width:1000px;height:1px;background:#fff;"></div>
<div class="a" style="left:2px;top:65px;width:212px;height:1px;background:#fff;"></div>
<div class="a" style="left:2px;top:65px;width:1px;height:631px;background:#fff;"></div>
<div class="a" style="left:214px;top:65px;width:1px;height:631px;background:#000;"></div>
<div class="a" style="left:2px;top:696px;width:213px;height:1px;background:#000;"></div>
<div class="a" style="left:3px;top:67px;width:208px;height:1px;background:#a0a0a0;"></div>
<div class="a" style="left:3px;top:67px;width:1px;height:626px;background:#a0a0a0;"></div>
<div class="a" style="left:4px;top:68px;width:206px;height:1px;background:#000;"></div>
<div class="a" style="left:4px;top:68px;width:1px;height:625px;background:#000;"></div>
<div class="a" style="left:210px;top:68px;width:1px;height:625px;background:#a0a0a0;"></div>
<div class="a" style="left:5px;top:692px;width:206px;height:1px;background:#a0a0a0;"></div>
<div class="a" style="left:211px;top:67px;width:1px;height:627px;background:#fff;"></div>
<div class="a" style="left:4px;top:693px;width:208px;height:1px;background:#fff;"></div>
<div class="a" style="left:5px;top:69px;width:189px;height:623px;background:#fff;"></div>
<div class="a" style="left:194px;top:69px;width:16px;height:623px;background:#f0f0f0;"></div>
<div class="a" style="left:194px;top:86px;width:16px;height:466px;background:#cdcdcd;"></div>
<svg style="left:197px;top:75px" width="9" height="6"><path d="M0.8 5.2 L4.5 1.5 L8.2 5.2" fill="none" stroke="#606060" stroke-width="2.1"/></svg>
<svg style="left:197px;top:683px" width="9" height="6"><path d="M0.8 0.8 L4.5 4.5 L8.2 0.8" fill="none" stroke="#606060" stroke-width="2.1"/></svg>
<svg style="left:8px;top:70px" width="17" height="14" shape-rendering="crispEdges"><rect x="3" y="0" width="6" height="1" fill="#8c8c8c"/><rect x="2" y="1" width="1" height="1" fill="#8c8c8c"/><rect x="3" y="1" width="1" height="1" fill="#f6f6a8"/><rect x="4" y="1" width="1" height="1" fill="#d4dc70"/><rect x="5" y="1" width="1" height="1" fill="#f6f6a8"/><rect x="6" y="1" width="1" height="1" fill="#d4dc70"/><rect x="7" y="1" width="1" height="1" fill="#f6f6a8"/><rect x="8" y="1" width="1" height="1" fill="#d4dc70"/><rect x="9" y="1" width="8" height="1" fill="#8c8c8c"/><rect x="1" y="2" width="1" height="1" fill="#8c8c8c"/><rect x="2" y="2" width="1" height="1" fill="#d4dc70"/><rect x="3" y="2" width="1" height="1" fill="#f6f6a8"/><rect x="4" y="2" width="1" height="1" fill="#d4dc70"/><rect x="5" y="2" width="1" height="1" fill="#f6f6a8"/><rect x="6" y="2" width="1" height="1" fill="#d4dc70"/><rect x="7" y="2" width="1" height="1" fill="#f6f6a8"/><rect x="8" y="2" width="1" height="1" fill="#d4dc70"/><rect x="9" y="2" width="1" height="1" fill="#f6f6a8"/><rect x="10" y="2" width="1" height="1" fill="#d4dc70"/><rect x="11" y="2" width="1" height="1" fill="#f6f6a8"/><rect x="12" y="2" width="1" height="1" fill="#d4dc70"/><rect x="13" y="2" width="1" height="1" fill="#f6f6a8"/><rect x="14" y="2" width="1" height="1" fill="#d4dc70"/><rect x="15" y="2" width="1" height="1" fill="#f6f6a8"/><rect x="16" y="2" width="1" height="1" fill="#000"/><rect x="1" y="3" width="1" height="1" fill="#8c8c8c"/><rect x="2" y="3" width="1" height="1" fill="#f6f6a8"/><rect x="3" y="3" width="1" height="1" fill="#d4dc70"/><rect x="4" y="3" width="1" height="1" fill="#f6f6a8"/><rect x="5" y="3" width="1" height="1" fill="#d4dc70"/><rect x="6" y="3" width="1" height="1" fill="#f6f6a8"/><rect x="7" y="3" width="1" height="1" fill="#d4dc70"/><rect x="8" y="3" width="1" height="1" fill="#f6f6a8"/><rect x="9" y="3" width="1" height="1" fill="#d4dc70"/><rect x="10" y="3" width="1" height="1" fill="#f6f6a8"/><rect x="11" y="3" width="1" height="1" fill="#d4dc70"/><rect x="12" y="3" width="1" height="1" fill="#f6f6a8"/><rect x="13" y="3" width="1" height="1" fill="#d4dc70"/><rect x="14" y="3" width="1" height="1" fill="#f6f6a8"/><rect x="15" y="3" width="1" height="1" fill="#d4dc70"/><rect x="16" y="3" width="1" height="1" fill="#000"/><rect x="1" y="4" width="1" height="1" fill="#8c8c8c"/><rect x="2" y="4" width="1" height="1" fill="#d4dc70"/><rect x="3" y="4" width="1" height="1" fill="#f6f6a8"/><rect x="4" y="4" width="1" height="1" fill="#d4dc70"/><rect x="5" y="4" width="1" height="1" fill="#f6f6a8"/><rect x="6" y="4" width="1" height="1" fill="#d4dc70"/><rect x="7" y="4" width="1" height="1" fill="#f6f6a8"/><rect x="8" y="4" width="1" height="1" fill="#d4dc70"/><rect x="9" y="4" width="1" height="1" fill="#f6f6a8"/><rect x="10" y="4" width="1" height="1" fill="#d4dc70"/><rect x="11" y="4" width="1" height="1" fill="#f6f6a8"/><rect x="12" y="4" width="1" height="1" fill="#d4dc70"/><rect x="13" y="4" width="1" height="1" fill="#f6f6a8"/><rect x="14" y="4" width="1" height="1" fill="#d4dc70"/><rect x="15" y="4" width="1" height="1" fill="#f6f6a8"/><rect x="16" y="4" width="1" height="1" fill="#000"/><rect x="0" y="5" width="1" height="1" fill="#8c8c8c"/><rect x="1" y="5" width="13" height="1" fill="#6b7a1e"/><rect x="14" y="5" width="1" height="1" fill="#d4dc70"/><rect x="15" y="5" width="1" height="1" fill="#f6f6a8"/><rect x="16" y="5" width="1" height="1" fill="#000"/><rect x="0" y="6" width="1" height="1" fill="#8c8c8c"/><rect x="1" y="6" width="1" height="1" fill="#d4dc70"/><rect x="2" y="6" width="1" height="1" fill="#f6f6a8"/><rect x="3" y="6" width="1" height="1" fill="#d4dc70"/><rect x="4" y="6" width="1" height="1" fill="#f6f6a8"/><rect x="5" y="6" width="1" height="1" fill="#d4dc70"/><rect x="6" y="6" width="1" height="1" fill="#f6f6a8"/><rect x="7" y="6" width="1" height="1" fill="#d4dc70"/><rect x="8" y="6" width="1" height="1" fill="#f6f6a8"/><rect x="9" y="6" width="1" height="1" fill="#d4dc70"/><rect x="10" y="6" width="1" height="1" fill="#f6f6a8"/><rect x="11" y="6" width="1" height="1" fill="#d4dc70"/><rect x="12" y="6" width="1" height="1" fill="#f6f6a8"/><rect x="13" y="6" width="1" height="1" fill="#6b7a1e"/><rect x="14" y="6" width="1" height="1" fill="#d4dc70"/><rect x="15" y="6" width="1" height="1" fill="#f6f6a8"/><rect x="16" y="6" width="1" height="1" fill="#000"/><rect x="0" y="7" width="1" height="1" fill="#8c8c8c"/><rect x="1" y="7" width="1" height="1" fill="#f6f6a8"/><rect x="2" y="7" width="1" height="1" fill="#d4dc70"/><rect x="3" y="7" width="1" height="1" fill="#f6f6a8"/><rect x="4" y="7" width="1" height="1" fill="#d4dc70"/><rect x="5" y="7" width="1" height="1" fill="#f6f6a8"/><rect x="6" y="7" width="1" height="1" fill="#d4dc70"/><rect x="7" y="7" width="1" height="1" fill="#f6f6a8"/><rect x="8" y="7" width="1" height="1" fill="#d4dc70"/><rect x="9" y="7" width="1" height="1" fill="#f6f6a8"/><rect x="10" y="7" width="1" height="1" fill="#d4dc70"/><rect x="11" y="7" width="1" height="1" fill="#f6f6a8"/><rect x="12" y="7" width="1" height="1" fill="#d4dc70"/><rect x="13" y="7" width="1" height="1" fill="#f6f6a8"/><rect x="14" y="7" width="1" height="1" fill="#6b7a1e"/><rect x="15" y="7" width="1" height="1" fill="#d4dc70"/><rect x="16" y="7" width="1" height="1" fill="#000"/><rect x="0" y="8" width="1" height="1" fill="#8c8c8c"/><rect x="1" y="8" width="1" height="1" fill="#d4dc70"/><rect x="2" y="8" width="1" height="1" fill="#f6f6a8"/><rect x="3" y="8" width="1" height="1" fill="#d4dc70"/><rect x="4" y="8" width="1" height="1" fill="#f6f6a8"/><rect x="5" y="8" width="1" height="1" fill="#d4dc70"/><rect x="6" y="8" width="1" height="1" fill="#f6f6a8"/><rect x="7" y="8" width="1" height="1" fill="#d4dc70"/><rect x="8" y="8" width="1" height="1" fill="#f6f6a8"/><rect x="9" y="8" width="1" height="1" fill="#d4dc70"/><rect x="10" y="8" width="1" height="1" fill="#f6f6a8"/><rect x="11" y="8" width="1" height="1" fill="#d4dc70"/><rect x="12" y="8" width="1" height="1" fill="#f6f6a8"/><rect x="13" y="8" width="1" height="1" fill="#d4dc70"/><rect x="14" y="8" width="1" height="1" fill="#f6f6a8"/><rect x="15" y="8" width="1" height="1" fill="#6b7a1e"/><rect x="16" y="8" width="1" height="1" fill="#000"/><rect x="1" y="9" width="1" height="1" fill="#8c8c8c"/><rect x="2" y="9" width="1" height="1" fill="#f6f6a8"/><rect x="3" y="9" width="1" height="1" fill="#d4dc70"/><rect x="4" y="9" width="1" height="1" fill="#f6f6a8"/><rect x="5" y="9" width="1" height="1" fill="#d4dc70"/><rect x="6" y="9" width="1" height="1" fill="#f6f6a8"/><rect x="7" y="9" width="1" height="1" fill="#d4dc70"/><rect x="8" y="9" width="1" height="1" fill="#f6f6a8"/><rect x="9" y="9" width="1" height="1" fill="#d4dc70"/><rect x="10" y="9" width="1" height="1" fill="#f6f6a8"/><rect x="11" y="9" width="1" height="1" fill="#d4dc70"/><rect x="12" y="9" width="1" height="1" fill="#f6f6a8"/><rect x="13" y="9" width="1" height="1" fill="#d4dc70"/><rect x="14" y="9" width="1" height="1" fill="#f6f6a8"/><rect x="15" y="9" width="1" height="1" fill="#6b7a1e"/><rect x="16" y="9" width="1" height="1" fill="#000"/><rect x="1" y="10" width="1" height="1" fill="#8c8c8c"/><rect x="2" y="10" width="1" height="1" fill="#d4dc70"/><rect x="3" y="10" width="1" height="1" fill="#f6f6a8"/><rect x="4" y="10" width="1" height="1" fill="#d4dc70"/><rect x="5" y="10" width="1" height="1" fill="#f6f6a8"/><rect x="6" y="10" width="1" height="1" fill="#d4dc70"/><rect x="7" y="10" width="1" height="1" fill="#f6f6a8"/><rect x="8" y="10" width="1" height="1" fill="#d4dc70"/><rect x="9" y="10" width="1" height="1" fill="#f6f6a8"/><rect x="10" y="10" width="1" height="1" fill="#d4dc70"/><rect x="11" y="10" width="1" height="1" fill="#f6f6a8"/><rect x="12" y="10" width="1" height="1" fill="#d4dc70"/><rect x="13" y="10" width="1" height="1" fill="#f6f6a8"/><rect x="14" y="10" width="1" height="1" fill="#d4dc70"/><rect x="15" y="10" width="1" height="1" fill="#6b7a1e"/><rect x="16" y="10" width="1" height="1" fill="#000"/><rect x="2" y="11" width="1" height="1" fill="#8c8c8c"/><rect x="3" y="11" width="1" height="1" fill="#f6f6a8"/><rect x="4" y="11" width="1" height="1" fill="#d4dc70"/><rect x="5" y="11" width="1" height="1" fill="#f6f6a8"/><rect x="6" y="11" width="1" height="1" fill="#d4dc70"/><rect x="7" y="11" width="1" height="1" fill="#f6f6a8"/><rect x="8" y="11" width="1" height="1" fill="#d4dc70"/><rect x="9" y="11" width="1" height="1" fill="#f6f6a8"/><rect x="10" y="11" width="1" height="1" fill="#d4dc70"/><rect x="11" y="11" width="1" height="1" fill="#f6f6a8"/><rect x="12" y="11" width="1" height="1" fill="#d4dc70"/><rect x="13" y="11" width="1" height="1" fill="#f6f6a8"/><rect x="14" y="11" width="1" height="1" fill="#d4dc70"/><rect x="15" y="11" width="1" height="1" fill="#f6f6a8"/><rect x="16" y="11" width="1" height="1" fill="#000"/><rect x="2" y="12" width="15" height="1" fill="#000"/></svg>
<span class="t" style="left:28px;top:70px;font-size:12px;color:#000;transform:scaleX(0.9);transform-origin:0 0">Bausteine</span>
<svg style="left:11px;top:90px" width="9" height="9" shape-rendering="crispEdges"><rect x="0.5" y="0.5" width="8" height="8" fill="#fff" stroke="#000"/><path d="M2 4.5h5" stroke="#000"/></svg>
<svg style="left:28px;top:88px" width="17" height="14" shape-rendering="crispEdges"><rect x="3" y="0" width="6" height="1" fill="#8c8c8c"/><rect x="2" y="1" width="1" height="1" fill="#8c8c8c"/><rect x="3" y="1" width="1" height="1" fill="#f6f6a8"/><rect x="4" y="1" width="1" height="1" fill="#d4dc70"/><rect x="5" y="1" width="1" height="1" fill="#f6f6a8"/><rect x="6" y="1" width="1" height="1" fill="#d4dc70"/><rect x="7" y="1" width="1" height="1" fill="#f6f6a8"/><rect x="8" y="1" width="1" height="1" fill="#d4dc70"/><rect x="9" y="1" width="8" height="1" fill="#8c8c8c"/><rect x="1" y="2" width="1" height="1" fill="#8c8c8c"/><rect x="2" y="2" width="1" height="1" fill="#d4dc70"/><rect x="3" y="2" width="1" height="1" fill="#f6f6a8"/><rect x="4" y="2" width="1" height="1" fill="#d4dc70"/><rect x="5" y="2" width="1" height="1" fill="#f6f6a8"/><rect x="6" y="2" width="1" height="1" fill="#d4dc70"/><rect x="7" y="2" width="1" height="1" fill="#f6f6a8"/><rect x="8" y="2" width="1" height="1" fill="#d4dc70"/><rect x="9" y="2" width="1" height="1" fill="#f6f6a8"/><rect x="10" y="2" width="1" height="1" fill="#d4dc70"/><rect x="11" y="2" width="1" height="1" fill="#f6f6a8"/><rect x="12" y="2" width="1" height="1" fill="#d4dc70"/><rect x="13" y="2" width="1" height="1" fill="#f6f6a8"/><rect x="14" y="2" width="1" height="1" fill="#d4dc70"/><rect x="15" y="2" width="1" height="1" fill="#f6f6a8"/><rect x="16" y="2" width="1" height="1" fill="#000"/><rect x="1" y="3" width="1" height="1" fill="#8c8c8c"/><rect x="2" y="3" width="1" height="1" fill="#f6f6a8"/><rect x="3" y="3" width="1" height="1" fill="#d4dc70"/><rect x="4" y="3" width="1" height="1" fill="#f6f6a8"/><rect x="5" y="3" width="1" height="1" fill="#d4dc70"/><rect x="6" y="3" width="1" height="1" fill="#f6f6a8"/><rect x="7" y="3" width="1" height="1" fill="#d4dc70"/><rect x="8" y="3" width="1" height="1" fill="#f6f6a8"/><rect x="9" y="3" width="1" height="1" fill="#d4dc70"/><rect x="10" y="3" width="1" height="1" fill="#f6f6a8"/><rect x="11" y="3" width="1" height="1" fill="#d4dc70"/><rect x="12" y="3" width="1" height="1" fill="#f6f6a8"/><rect x="13" y="3" width="1" height="1" fill="#d4dc70"/><rect x="14" y="3" width="1" height="1" fill="#f6f6a8"/><rect x="15" y="3" width="1" height="1" fill="#d4dc70"/><rect x="16" y="3" width="1" height="1" fill="#000"/><rect x="1" y="4" width="1" height="1" fill="#8c8c8c"/><rect x="2" y="4" width="1" height="1" fill="#d4dc70"/><rect x="3" y="4" width="1" height="1" fill="#f6f6a8"/><rect x="4" y="4" width="1" height="1" fill="#d4dc70"/><rect x="5" y="4" width="1" height="1" fill="#f6f6a8"/><rect x="6" y="4" width="1" height="1" fill="#d4dc70"/><rect x="7" y="4" width="1" height="1" fill="#f6f6a8"/><rect x="8" y="4" width="1" height="1" fill="#d4dc70"/><rect x="9" y="4" width="1" height="1" fill="#f6f6a8"/><rect x="10" y="4" width="1" height="1" fill="#d4dc70"/><rect x="11" y="4" width="1" height="1" fill="#f6f6a8"/><rect x="12" y="4" width="1" height="1" fill="#d4dc70"/><rect x="13" y="4" width="1" height="1" fill="#f6f6a8"/><rect x="14" y="4" width="1" height="1" fill="#d4dc70"/><rect x="15" y="4" width="1" height="1" fill="#f6f6a8"/><rect x="16" y="4" width="1" height="1" fill="#000"/><rect x="0" y="5" width="1" height="1" fill="#8c8c8c"/><rect x="1" y="5" width="13" height="1" fill="#6b7a1e"/><rect x="14" y="5" width="1" height="1" fill="#d4dc70"/><rect x="15" y="5" width="1" height="1" fill="#f6f6a8"/><rect x="16" y="5" width="1" height="1" fill="#000"/><rect x="0" y="6" width="1" height="1" fill="#8c8c8c"/><rect x="1" y="6" width="1" height="1" fill="#d4dc70"/><rect x="2" y="6" width="1" height="1" fill="#f6f6a8"/><rect x="3" y="6" width="1" height="1" fill="#d4dc70"/><rect x="4" y="6" width="1" height="1" fill="#f6f6a8"/><rect x="5" y="6" width="1" height="1" fill="#d4dc70"/><rect x="6" y="6" width="1" height="1" fill="#f6f6a8"/><rect x="7" y="6" width="1" height="1" fill="#d4dc70"/><rect x="8" y="6" width="1" height="1" fill="#f6f6a8"/><rect x="9" y="6" width="1" height="1" fill="#d4dc70"/><rect x="10" y="6" width="1" height="1" fill="#f6f6a8"/><rect x="11" y="6" width="1" height="1" fill="#d4dc70"/><rect x="12" y="6" width="1" height="1" fill="#f6f6a8"/><rect x="13" y="6" width="1" height="1" fill="#6b7a1e"/><rect x="14" y="6" width="1" height="1" fill="#d4dc70"/><rect x="15" y="6" width="1" height="1" fill="#f6f6a8"/><rect x="16" y="6" width="1" height="1" fill="#000"/><rect x="0" y="7" width="1" height="1" fill="#8c8c8c"/><rect x="1" y="7" width="1" height="1" fill="#f6f6a8"/><rect x="2" y="7" width="1" height="1" fill="#d4dc70"/><rect x="3" y="7" width="1" height="1" fill="#f6f6a8"/><rect x="4" y="7" width="1" height="1" fill="#d4dc70"/><rect x="5" y="7" width="1" height="1" fill="#f6f6a8"/><rect x="6" y="7" width="1" height="1" fill="#d4dc70"/><rect x="7" y="7" width="1" height="1" fill="#f6f6a8"/><rect x="8" y="7" width="1" height="1" fill="#d4dc70"/><rect x="9" y="7" width="1" height="1" fill="#f6f6a8"/><rect x="10" y="7" width="1" height="1" fill="#d4dc70"/><rect x="11" y="7" width="1" height="1" fill="#f6f6a8"/><rect x="12" y="7" width="1" height="1" fill="#d4dc70"/><rect x="13" y="7" width="1" height="1" fill="#f6f6a8"/><rect x="14" y="7" width="1" height="1" fill="#6b7a1e"/><rect x="15" y="7" width="1" height="1" fill="#d4dc70"/><rect x="16" y="7" width="1" height="1" fill="#000"/><rect x="0" y="8" width="1" height="1" fill="#8c8c8c"/><rect x="1" y="8" width="1" height="1" fill="#d4dc70"/><rect x="2" y="8" width="1" height="1" fill="#f6f6a8"/><rect x="3" y="8" width="1" height="1" fill="#d4dc70"/><rect x="4" y="8" width="1" height="1" fill="#f6f6a8"/><rect x="5" y="8" width="1" height="1" fill="#d4dc70"/><rect x="6" y="8" width="1" height="1" fill="#f6f6a8"/><rect x="7" y="8" width="1" height="1" fill="#d4dc70"/><rect x="8" y="8" width="1" height="1" fill="#f6f6a8"/><rect x="9" y="8" width="1" height="1" fill="#d4dc70"/><rect x="10" y="8" width="1" height="1" fill="#f6f6a8"/><rect x="11" y="8" width="1" height="1" fill="#d4dc70"/><rect x="12" y="8" width="1" height="1" fill="#f6f6a8"/><rect x="13" y="8" width="1" height="1" fill="#d4dc70"/><rect x="14" y="8" width="1" height="1" fill="#f6f6a8"/><rect x="15" y="8" width="1" height="1" fill="#6b7a1e"/><rect x="16" y="8" width="1" height="1" fill="#000"/><rect x="1" y="9" width="1" height="1" fill="#8c8c8c"/><rect x="2" y="9" width="1" height="1" fill="#f6f6a8"/><rect x="3" y="9" width="1" height="1" fill="#d4dc70"/><rect x="4" y="9" width="1" height="1" fill="#f6f6a8"/><rect x="5" y="9" width="1" height="1" fill="#d4dc70"/><rect x="6" y="9" width="1" height="1" fill="#f6f6a8"/><rect x="7" y="9" width="1" height="1" fill="#d4dc70"/><rect x="8" y="9" width="1" height="1" fill="#f6f6a8"/><rect x="9" y="9" width="1" height="1" fill="#d4dc70"/><rect x="10" y="9" width="1" height="1" fill="#f6f6a8"/><rect x="11" y="9" width="1" height="1" fill="#d4dc70"/><rect x="12" y="9" width="1" height="1" fill="#f6f6a8"/><rect x="13" y="9" width="1" height="1" fill="#d4dc70"/><rect x="14" y="9" width="1" height="1" fill="#f6f6a8"/><rect x="15" y="9" width="1" height="1" fill="#6b7a1e"/><rect x="16" y="9" width="1" height="1" fill="#000"/><rect x="1" y="10" width="1" height="1" fill="#8c8c8c"/><rect x="2" y="10" width="1" height="1" fill="#d4dc70"/><rect x="3" y="10" width="1" height="1" fill="#f6f6a8"/><rect x="4" y="10" width="1" height="1" fill="#d4dc70"/><rect x="5" y="10" width="1" height="1" fill="#f6f6a8"/><rect x="6" y="10" width="1" height="1" fill="#d4dc70"/><rect x="7" y="10" width="1" height="1" fill="#f6f6a8"/><rect x="8" y="10" width="1" height="1" fill="#d4dc70"/><rect x="9" y="10" width="1" height="1" fill="#f6f6a8"/><rect x="10" y="10" width="1" height="1" fill="#d4dc70"/><rect x="11" y="10" width="1" height="1" fill="#f6f6a8"/><rect x="12" y="10" width="1" height="1" fill="#d4dc70"/><rect x="13" y="10" width="1" height="1" fill="#f6f6a8"/><rect x="14" y="10" width="1" height="1" fill="#d4dc70"/><rect x="15" y="10" width="1" height="1" fill="#6b7a1e"/><rect x="16" y="10" width="1" height="1" fill="#000"/><rect x="2" y="11" width="1" height="1" fill="#8c8c8c"/><rect x="3" y="11" width="1" height="1" fill="#f6f6a8"/><rect x="4" y="11" width="1" height="1" fill="#d4dc70"/><rect x="5" y="11" width="1" height="1" fill="#f6f6a8"/><rect x="6" y="11" width="1" height="1" fill="#d4dc70"/><rect x="7" y="11" width="1" height="1" fill="#f6f6a8"/><rect x="8" y="11" width="1" height="1" fill="#d4dc70"/><rect x="9" y="11" width="1" height="1" fill="#f6f6a8"/><rect x="10" y="11" width="1" height="1" fill="#d4dc70"/><rect x="11" y="11" width="1" height="1" fill="#f6f6a8"/><rect x="12" y="11" width="1" height="1" fill="#d4dc70"/><rect x="13" y="11" width="1" height="1" fill="#f6f6a8"/><rect x="14" y="11" width="1" height="1" fill="#d4dc70"/><rect x="15" y="11" width="1" height="1" fill="#f6f6a8"/><rect x="16" y="11" width="1" height="1" fill="#000"/><rect x="2" y="12" width="15" height="1" fill="#000"/></svg>
<span class="t" style="left:48px;top:88px;font-size:12px;color:#000;transform:scaleX(0.9);transform-origin:0 0">Funktionen</span>
<svg style="left:0;top:0" width="200" height="700" shape-rendering="crispEdges"><g fill="#000"><rect x="15" y="100" width="1" height="1"/><rect x="15" y="102" width="1" height="1"/><rect x="15" y="104" width="1" height="1"/><rect x="15" y="106" width="1" height="1"/><rect x="15" y="108" width="1" height="1"/><rect x="15" y="110" width="1" height="1"/><rect x="15" y="112" width="1" height="1"/><rect x="15" y="114" width="1" height="1"/><rect x="15" y="116" width="1" height="1"/><rect x="15" y="118" width="1" height="1"/><rect x="15" y="120" width="1" height="1"/><rect x="15" y="122" width="1" height="1"/><rect x="15" y="124" width="1" height="1"/><rect x="15" y="126" width="1" height="1"/><rect x="15" y="128" width="1" height="1"/><rect x="15" y="130" width="1" height="1"/><rect x="15" y="132" width="1" height="1"/><rect x="15" y="134" width="1" height="1"/><rect x="15" y="136" width="1" height="1"/><rect x="15" y="138" width="1" height="1"/><rect x="15" y="140" width="1" height="1"/><rect x="15" y="142" width="1" height="1"/><rect x="15" y="144" width="1" height="1"/><rect x="15" y="146" width="1" height="1"/><rect x="15" y="148" width="1" height="1"/><rect x="15" y="150" width="1" height="1"/><rect x="15" y="152" width="1" height="1"/><rect x="15" y="154" width="1" height="1"/><rect x="15" y="156" width="1" height="1"/><rect x="15" y="158" width="1" height="1"/><rect x="15" y="160" width="1" height="1"/><rect x="15" y="162" width="1" height="1"/><rect x="15" y="164" width="1" height="1"/><rect x="15" y="166" width="1" height="1"/><rect x="15" y="168" width="1" height="1"/><rect x="15" y="170" width="1" height="1"/><rect x="15" y="172" width="1" height="1"/><rect x="15" y="174" width="1" height="1"/><rect x="15" y="176" width="1" height="1"/><rect x="15" y="178" width="1" height="1"/><rect x="15" y="180" width="1" height="1"/><rect x="15" y="182" width="1" height="1"/><rect x="15" y="184" width="1" height="1"/><rect x="15" y="186" width="1" height="1"/><rect x="15" y="188" width="1" height="1"/><rect x="15" y="190" width="1" height="1"/><rect x="15" y="192" width="1" height="1"/><rect x="15" y="194" width="1" height="1"/><rect x="15" y="196" width="1" height="1"/><rect x="15" y="198" width="1" height="1"/><rect x="15" y="200" width="1" height="1"/><rect x="15" y="202" width="1" height="1"/><rect x="15" y="204" width="1" height="1"/><rect x="15" y="206" width="1" height="1"/><rect x="15" y="208" width="1" height="1"/><rect x="15" y="210" width="1" height="1"/><rect x="15" y="212" width="1" height="1"/><rect x="15" y="214" width="1" height="1"/><rect x="15" y="216" width="1" height="1"/><rect x="15" y="218" width="1" height="1"/><rect x="15" y="220" width="1" height="1"/><rect x="15" y="222" width="1" height="1"/><rect x="15" y="224" width="1" height="1"/><rect x="15" y="226" width="1" height="1"/><rect x="15" y="228" width="1" height="1"/><rect x="15" y="230" width="1" height="1"/><rect x="15" y="232" width="1" height="1"/><rect x="15" y="234" width="1" height="1"/><rect x="15" y="236" width="1" height="1"/><rect x="15" y="238" width="1" height="1"/><rect x="15" y="240" width="1" height="1"/><rect x="15" y="242" width="1" height="1"/><rect x="15" y="244" width="1" height="1"/><rect x="15" y="246" width="1" height="1"/><rect x="15" y="248" width="1" height="1"/><rect x="15" y="250" width="1" height="1"/><rect x="15" y="252" width="1" height="1"/><rect x="15" y="254" width="1" height="1"/><rect x="15" y="256" width="1" height="1"/><rect x="15" y="258" width="1" height="1"/><rect x="15" y="260" width="1" height="1"/><rect x="15" y="262" width="1" height="1"/><rect x="15" y="264" width="1" height="1"/><rect x="15" y="266" width="1" height="1"/><rect x="15" y="268" width="1" height="1"/><rect x="15" y="270" width="1" height="1"/><rect x="15" y="272" width="1" height="1"/><rect x="15" y="274" width="1" height="1"/><rect x="15" y="276" width="1" height="1"/><rect x="15" y="278" width="1" height="1"/><rect x="15" y="280" width="1" height="1"/><rect x="15" y="282" width="1" height="1"/><rect x="15" y="284" width="1" height="1"/><rect x="15" y="286" width="1" height="1"/><rect x="15" y="288" width="1" height="1"/><rect x="15" y="290" width="1" height="1"/><rect x="15" y="292" width="1" height="1"/><rect x="15" y="294" width="1" height="1"/><rect x="15" y="296" width="1" height="1"/><rect x="15" y="298" width="1" height="1"/><rect x="15" y="300" width="1" height="1"/><rect x="15" y="302" width="1" height="1"/><rect x="15" y="304" width="1" height="1"/><rect x="15" y="306" width="1" height="1"/><rect x="15" y="308" width="1" height="1"/><rect x="15" y="310" width="1" height="1"/><rect x="15" y="312" width="1" height="1"/><rect x="15" y="314" width="1" height="1"/><rect x="15" y="316" width="1" height="1"/><rect x="15" y="318" width="1" height="1"/><rect x="15" y="320" width="1" height="1"/><rect x="15" y="322" width="1" height="1"/><rect x="15" y="324" width="1" height="1"/><rect x="15" y="326" width="1" height="1"/><rect x="15" y="328" width="1" height="1"/><rect x="15" y="330" width="1" height="1"/><rect x="15" y="332" width="1" height="1"/><rect x="15" y="334" width="1" height="1"/><rect x="15" y="336" width="1" height="1"/><rect x="15" y="338" width="1" height="1"/><rect x="15" y="340" width="1" height="1"/><rect x="15" y="342" width="1" height="1"/><rect x="15" y="344" width="1" height="1"/><rect x="15" y="346" width="1" height="1"/><rect x="15" y="348" width="1" height="1"/><rect x="15" y="350" width="1" height="1"/><rect x="15" y="352" width="1" height="1"/><rect x="15" y="354" width="1" height="1"/><rect x="15" y="356" width="1" height="1"/><rect x="15" y="358" width="1" height="1"/><rect x="15" y="360" width="1" height="1"/><rect x="15" y="362" width="1" height="1"/><rect x="15" y="364" width="1" height="1"/><rect x="15" y="366" width="1" height="1"/><rect x="15" y="368" width="1" height="1"/><rect x="15" y="370" width="1" height="1"/><rect x="15" y="372" width="1" height="1"/><rect x="15" y="374" width="1" height="1"/><rect x="15" y="376" width="1" height="1"/><rect x="15" y="378" width="1" height="1"/><rect x="15" y="380" width="1" height="1"/><rect x="15" y="382" width="1" height="1"/><rect x="15" y="384" width="1" height="1"/><rect x="15" y="386" width="1" height="1"/><rect x="15" y="388" width="1" height="1"/><rect x="15" y="390" width="1" height="1"/><rect x="15" y="392" width="1" height="1"/><rect x="15" y="394" width="1" height="1"/><rect x="15" y="396" width="1" height="1"/><rect x="15" y="398" width="1" height="1"/><rect x="15" y="400" width="1" height="1"/><rect x="15" y="402" width="1" height="1"/><rect x="15" y="404" width="1" height="1"/><rect x="15" y="406" width="1" height="1"/><rect x="15" y="408" width="1" height="1"/><rect x="15" y="410" width="1" height="1"/><rect x="15" y="412" width="1" height="1"/><rect x="15" y="414" width="1" height="1"/><rect x="15" y="416" width="1" height="1"/><rect x="15" y="418" width="1" height="1"/><rect x="15" y="420" width="1" height="1"/><rect x="15" y="422" width="1" height="1"/><rect x="15" y="424" width="1" height="1"/><rect x="15" y="426" width="1" height="1"/><rect x="15" y="428" width="1" height="1"/><rect x="15" y="430" width="1" height="1"/><rect x="15" y="432" width="1" height="1"/><rect x="15" y="434" width="1" height="1"/><rect x="15" y="436" width="1" height="1"/><rect x="15" y="438" width="1" height="1"/><rect x="15" y="440" width="1" height="1"/><rect x="15" y="442" width="1" height="1"/><rect x="15" y="444" width="1" height="1"/><rect x="15" y="446" width="1" height="1"/><rect x="15" y="448" width="1" height="1"/><rect x="15" y="450" width="1" height="1"/><rect x="15" y="452" width="1" height="1"/><rect x="15" y="454" width="1" height="1"/><rect x="15" y="456" width="1" height="1"/><rect x="15" y="458" width="1" height="1"/><rect x="15" y="460" width="1" height="1"/><rect x="15" y="462" width="1" height="1"/><rect x="15" y="464" width="1" height="1"/><rect x="15" y="466" width="1" height="1"/><rect x="15" y="468" width="1" height="1"/><rect x="15" y="470" width="1" height="1"/><rect x="15" y="472" width="1" height="1"/><rect x="15" y="474" width="1" height="1"/><rect x="15" y="476" width="1" height="1"/><rect x="15" y="478" width="1" height="1"/><rect x="15" y="480" width="1" height="1"/><rect x="15" y="482" width="1" height="1"/><rect x="15" y="484" width="1" height="1"/><rect x="15" y="486" width="1" height="1"/><rect x="15" y="488" width="1" height="1"/><rect x="15" y="490" width="1" height="1"/><rect x="15" y="492" width="1" height="1"/><rect x="15" y="494" width="1" height="1"/><rect x="15" y="496" width="1" height="1"/><rect x="15" y="498" width="1" height="1"/><rect x="15" y="500" width="1" height="1"/><rect x="15" y="502" width="1" height="1"/><rect x="15" y="504" width="1" height="1"/><rect x="15" y="506" width="1" height="1"/><rect x="15" y="508" width="1" height="1"/><rect x="15" y="510" width="1" height="1"/><rect x="15" y="512" width="1" height="1"/><rect x="15" y="514" width="1" height="1"/><rect x="15" y="516" width="1" height="1"/><rect x="15" y="518" width="1" height="1"/><rect x="15" y="520" width="1" height="1"/><rect x="15" y="522" width="1" height="1"/><rect x="15" y="524" width="1" height="1"/><rect x="15" y="526" width="1" height="1"/><rect x="15" y="528" width="1" height="1"/><rect x="15" y="530" width="1" height="1"/><rect x="15" y="532" width="1" height="1"/><rect x="15" y="534" width="1" height="1"/><rect x="15" y="536" width="1" height="1"/><rect x="15" y="538" width="1" height="1"/><rect x="15" y="540" width="1" height="1"/><rect x="15" y="542" width="1" height="1"/><rect x="15" y="544" width="1" height="1"/><rect x="15" y="546" width="1" height="1"/><rect x="15" y="548" width="1" height="1"/><rect x="15" y="550" width="1" height="1"/><rect x="15" y="552" width="1" height="1"/><rect x="15" y="554" width="1" height="1"/><rect x="15" y="556" width="1" height="1"/><rect x="15" y="558" width="1" height="1"/><rect x="15" y="560" width="1" height="1"/><rect x="15" y="562" width="1" height="1"/><rect x="15" y="564" width="1" height="1"/><rect x="15" y="566" width="1" height="1"/><rect x="15" y="568" width="1" height="1"/><rect x="15" y="570" width="1" height="1"/><rect x="15" y="572" width="1" height="1"/><rect x="15" y="574" width="1" height="1"/><rect x="15" y="576" width="1" height="1"/><rect x="15" y="578" width="1" height="1"/><rect x="15" y="580" width="1" height="1"/><rect x="15" y="582" width="1" height="1"/><rect x="15" y="584" width="1" height="1"/><rect x="15" y="586" width="1" height="1"/><rect x="15" y="588" width="1" height="1"/><rect x="15" y="590" width="1" height="1"/><rect x="15" y="592" width="1" height="1"/><rect x="15" y="594" width="1" height="1"/><rect x="15" y="596" width="1" height="1"/><rect x="15" y="598" width="1" height="1"/><rect x="15" y="600" width="1" height="1"/><rect x="15" y="602" width="1" height="1"/><rect x="15" y="604" width="1" height="1"/><rect x="15" y="606" width="1" height="1"/><rect x="15" y="608" width="1" height="1"/><rect x="15" y="610" width="1" height="1"/><rect x="15" y="612" width="1" height="1"/><rect x="15" y="614" width="1" height="1"/><rect x="15" y="616" width="1" height="1"/><rect x="15" y="618" width="1" height="1"/><rect x="15" y="620" width="1" height="1"/><rect x="15" y="622" width="1" height="1"/><rect x="15" y="624" width="1" height="1"/><rect x="15" y="626" width="1" height="1"/><rect x="15" y="628" width="1" height="1"/><rect x="15" y="630" width="1" height="1"/><rect x="15" y="632" width="1" height="1"/><rect x="15" y="634" width="1" height="1"/><rect x="15" y="636" width="1" height="1"/><rect x="15" y="638" width="1" height="1"/><rect x="15" y="640" width="1" height="1"/><rect x="15" y="642" width="1" height="1"/><rect x="15" y="644" width="1" height="1"/><rect x="15" y="646" width="1" height="1"/><rect x="15" y="648" width="1" height="1"/><rect x="15" y="650" width="1" height="1"/><rect x="15" y="652" width="1" height="1"/><rect x="15" y="654" width="1" height="1"/><rect x="15" y="656" width="1" height="1"/><rect x="15" y="658" width="1" height="1"/><rect x="15" y="660" width="1" height="1"/><rect x="15" y="662" width="1" height="1"/><rect x="15" y="664" width="1" height="1"/><rect x="15" y="666" width="1" height="1"/><rect x="15" y="668" width="1" height="1"/><rect x="15" y="670" width="1" height="1"/><rect x="15" y="672" width="1" height="1"/><rect x="15" y="674" width="1" height="1"/><rect x="15" y="676" width="1" height="1"/><rect x="15" y="678" width="1" height="1"/><rect x="15" y="680" width="1" height="1"/><rect x="15" y="682" width="1" height="1"/><rect x="15" y="684" width="1" height="1"/><rect x="15" y="686" width="1" height="1"/><rect x="15" y="688" width="1" height="1"/><rect x="21" y="94" width="1" height="1"/><rect x="23" y="94" width="1" height="1"/><rect x="25" y="94" width="1" height="1"/><rect x="35" y="103" width="1" height="1"/><rect x="35" y="105" width="1" height="1"/><rect x="35" y="107" width="1" height="1"/><rect x="35" y="109" width="1" height="1"/><rect x="35" y="111" width="1" height="1"/><rect x="35" y="113" width="1" height="1"/><rect x="35" y="115" width="1" height="1"/><rect x="35" y="117" width="1" height="1"/><rect x="35" y="119" width="1" height="1"/><rect x="35" y="121" width="1" height="1"/><rect x="35" y="123" width="1" height="1"/><rect x="35" y="125" width="1" height="1"/><rect x="35" y="127" width="1" height="1"/><rect x="35" y="129" width="1" height="1"/><rect x="35" y="131" width="1" height="1"/><rect x="35" y="133" width="1" height="1"/><rect x="35" y="135" width="1" height="1"/><rect x="35" y="137" width="1" height="1"/><rect x="35" y="139" width="1" height="1"/><rect x="35" y="141" width="1" height="1"/><rect x="35" y="143" width="1" height="1"/><rect x="35" y="145" width="1" height="1"/><rect x="35" y="147" width="1" height="1"/><rect x="35" y="149" width="1" height="1"/><rect x="35" y="151" width="1" height="1"/><rect x="35" y="153" width="1" height="1"/><rect x="35" y="155" width="1" height="1"/><rect x="35" y="157" width="1" height="1"/><rect x="35" y="159" width="1" height="1"/><rect x="35" y="161" width="1" height="1"/><rect x="35" y="163" width="1" height="1"/><rect x="35" y="165" width="1" height="1"/><rect x="35" y="167" width="1" height="1"/><rect x="35" y="169" width="1" height="1"/><rect x="35" y="171" width="1" height="1"/><rect x="35" y="173" width="1" height="1"/><rect x="35" y="175" width="1" height="1"/><rect x="35" y="177" width="1" height="1"/><rect x="35" y="179" width="1" height="1"/><rect x="35" y="181" width="1" height="1"/><rect x="35" y="183" width="1" height="1"/><rect x="35" y="185" width="1" height="1"/><rect x="35" y="187" width="1" height="1"/><rect x="35" y="189" width="1" height="1"/><rect x="35" y="191" width="1" height="1"/><rect x="35" y="193" width="1" height="1"/><rect x="35" y="195" width="1" height="1"/><rect x="35" y="197" width="1" height="1"/><rect x="35" y="199" width="1" height="1"/><rect x="35" y="201" width="1" height="1"/><rect x="35" y="203" width="1" height="1"/><rect x="35" y="205" width="1" height="1"/><rect x="35" y="207" width="1" height="1"/><rect x="35" y="209" width="1" height="1"/><rect x="35" y="211" width="1" height="1"/><rect x="35" y="213" width="1" height="1"/><rect x="35" y="215" width="1" height="1"/><rect x="35" y="217" width="1" height="1"/><rect x="35" y="219" width="1" height="1"/><rect x="35" y="221" width="1" height="1"/><rect x="35" y="223" width="1" height="1"/><rect x="35" y="225" width="1" height="1"/><rect x="35" y="227" width="1" height="1"/><rect x="35" y="229" width="1" height="1"/><rect x="35" y="231" width="1" height="1"/><rect x="35" y="233" width="1" height="1"/><rect x="35" y="235" width="1" height="1"/><rect x="35" y="237" width="1" height="1"/><rect x="35" y="239" width="1" height="1"/><rect x="35" y="241" width="1" height="1"/><rect x="35" y="243" width="1" height="1"/><rect x="35" y="245" width="1" height="1"/><rect x="35" y="247" width="1" height="1"/><rect x="35" y="249" width="1" height="1"/><rect x="35" y="251" width="1" height="1"/><rect x="35" y="253" width="1" height="1"/><rect x="35" y="255" width="1" height="1"/><rect x="35" y="257" width="1" height="1"/><rect x="35" y="259" width="1" height="1"/><rect x="35" y="261" width="1" height="1"/><rect x="35" y="263" width="1" height="1"/><rect x="35" y="265" width="1" height="1"/><rect x="35" y="267" width="1" height="1"/><rect x="35" y="269" width="1" height="1"/><rect x="35" y="271" width="1" height="1"/><rect x="35" y="273" width="1" height="1"/><rect x="35" y="275" width="1" height="1"/><rect x="35" y="277" width="1" height="1"/><rect x="35" y="279" width="1" height="1"/><rect x="35" y="281" width="1" height="1"/><rect x="35" y="283" width="1" height="1"/><rect x="35" y="285" width="1" height="1"/><rect x="35" y="287" width="1" height="1"/><rect x="35" y="289" width="1" height="1"/><rect x="35" y="291" width="1" height="1"/><rect x="35" y="293" width="1" height="1"/><rect x="35" y="295" width="1" height="1"/><rect x="35" y="297" width="1" height="1"/><rect x="35" y="299" width="1" height="1"/><rect x="35" y="301" width="1" height="1"/><rect x="35" y="303" width="1" height="1"/><rect x="35" y="305" width="1" height="1"/><rect x="35" y="307" width="1" height="1"/><rect x="35" y="309" width="1" height="1"/><rect x="35" y="311" width="1" height="1"/><rect x="35" y="313" width="1" height="1"/><rect x="35" y="315" width="1" height="1"/><rect x="35" y="317" width="1" height="1"/><rect x="35" y="319" width="1" height="1"/><rect x="35" y="321" width="1" height="1"/><rect x="35" y="323" width="1" height="1"/><rect x="35" y="325" width="1" height="1"/><rect x="35" y="327" width="1" height="1"/><rect x="35" y="329" width="1" height="1"/><rect x="35" y="331" width="1" height="1"/><rect x="35" y="333" width="1" height="1"/><rect x="35" y="335" width="1" height="1"/><rect x="35" y="337" width="1" height="1"/><rect x="35" y="339" width="1" height="1"/><rect x="35" y="341" width="1" height="1"/><rect x="35" y="343" width="1" height="1"/><rect x="35" y="345" width="1" height="1"/><rect x="35" y="347" width="1" height="1"/><rect x="35" y="349" width="1" height="1"/><rect x="35" y="351" width="1" height="1"/><rect x="35" y="353" width="1" height="1"/><rect x="35" y="355" width="1" height="1"/><rect x="35" y="357" width="1" height="1"/><rect x="35" y="359" width="1" height="1"/><rect x="35" y="361" width="1" height="1"/><rect x="35" y="363" width="1" height="1"/><rect x="35" y="365" width="1" height="1"/><rect x="35" y="367" width="1" height="1"/><rect x="35" y="369" width="1" height="1"/><rect x="35" y="371" width="1" height="1"/><rect x="35" y="373" width="1" height="1"/><rect x="35" y="375" width="1" height="1"/><rect x="35" y="377" width="1" height="1"/><rect x="35" y="379" width="1" height="1"/><rect x="35" y="381" width="1" height="1"/><rect x="35" y="383" width="1" height="1"/><rect x="35" y="385" width="1" height="1"/><rect x="35" y="387" width="1" height="1"/><rect x="35" y="389" width="1" height="1"/><rect x="35" y="391" width="1" height="1"/><rect x="35" y="393" width="1" height="1"/><rect x="35" y="395" width="1" height="1"/><rect x="35" y="397" width="1" height="1"/><rect x="35" y="399" width="1" height="1"/><rect x="35" y="401" width="1" height="1"/><rect x="35" y="403" width="1" height="1"/><rect x="35" y="405" width="1" height="1"/><rect x="35" y="407" width="1" height="1"/><rect x="35" y="409" width="1" height="1"/><rect x="35" y="411" width="1" height="1"/><rect x="35" y="413" width="1" height="1"/><rect x="35" y="415" width="1" height="1"/><rect x="35" y="417" width="1" height="1"/><rect x="35" y="419" width="1" height="1"/><rect x="35" y="421" width="1" height="1"/><rect x="35" y="423" width="1" height="1"/><rect x="35" y="425" width="1" height="1"/><rect x="35" y="427" width="1" height="1"/><rect x="35" y="429" width="1" height="1"/><rect x="35" y="431" width="1" height="1"/><rect x="35" y="433" width="1" height="1"/><rect x="35" y="435" width="1" height="1"/><rect x="35" y="437" width="1" height="1"/><rect x="35" y="439" width="1" height="1"/><rect x="35" y="441" width="1" height="1"/><rect x="35" y="443" width="1" height="1"/><rect x="35" y="445" width="1" height="1"/><rect x="35" y="447" width="1" height="1"/><rect x="35" y="449" width="1" height="1"/><rect x="35" y="451" width="1" height="1"/><rect x="35" y="453" width="1" height="1"/><rect x="35" y="455" width="1" height="1"/><rect x="35" y="457" width="1" height="1"/><rect x="35" y="459" width="1" height="1"/><rect x="35" y="461" width="1" height="1"/><rect x="35" y="463" width="1" height="1"/><rect x="35" y="465" width="1" height="1"/><rect x="35" y="467" width="1" height="1"/><rect x="35" y="469" width="1" height="1"/><rect x="35" y="471" width="1" height="1"/><rect x="35" y="473" width="1" height="1"/><rect x="35" y="475" width="1" height="1"/><rect x="35" y="477" width="1" height="1"/><rect x="35" y="479" width="1" height="1"/><rect x="35" y="481" width="1" height="1"/><rect x="35" y="483" width="1" height="1"/><rect x="35" y="485" width="1" height="1"/><rect x="35" y="487" width="1" height="1"/><rect x="35" y="489" width="1" height="1"/><rect x="35" y="491" width="1" height="1"/><rect x="35" y="493" width="1" height="1"/><rect x="35" y="495" width="1" height="1"/><rect x="35" y="497" width="1" height="1"/><rect x="35" y="499" width="1" height="1"/><rect x="35" y="501" width="1" height="1"/><rect x="35" y="503" width="1" height="1"/><rect x="35" y="505" width="1" height="1"/><rect x="35" y="507" width="1" height="1"/><rect x="35" y="509" width="1" height="1"/><rect x="35" y="511" width="1" height="1"/><rect x="35" y="513" width="1" height="1"/><rect x="35" y="515" width="1" height="1"/><rect x="35" y="517" width="1" height="1"/><rect x="35" y="519" width="1" height="1"/><rect x="35" y="521" width="1" height="1"/><rect x="35" y="523" width="1" height="1"/><rect x="35" y="525" width="1" height="1"/><rect x="35" y="527" width="1" height="1"/><rect x="35" y="529" width="1" height="1"/><rect x="35" y="531" width="1" height="1"/><rect x="35" y="533" width="1" height="1"/><rect x="35" y="535" width="1" height="1"/><rect x="35" y="537" width="1" height="1"/><rect x="35" y="539" width="1" height="1"/><rect x="35" y="541" width="1" height="1"/><rect x="35" y="543" width="1" height="1"/><rect x="35" y="545" width="1" height="1"/><rect x="35" y="547" width="1" height="1"/><rect x="35" y="549" width="1" height="1"/><rect x="35" y="551" width="1" height="1"/><rect x="35" y="553" width="1" height="1"/><rect x="35" y="555" width="1" height="1"/><rect x="35" y="557" width="1" height="1"/><rect x="35" y="559" width="1" height="1"/><rect x="35" y="561" width="1" height="1"/><rect x="35" y="563" width="1" height="1"/><rect x="35" y="565" width="1" height="1"/><rect x="35" y="567" width="1" height="1"/><rect x="35" y="569" width="1" height="1"/><rect x="35" y="571" width="1" height="1"/><rect x="35" y="573" width="1" height="1"/><rect x="35" y="575" width="1" height="1"/><rect x="35" y="577" width="1" height="1"/><rect x="35" y="579" width="1" height="1"/><rect x="35" y="581" width="1" height="1"/><rect x="35" y="583" width="1" height="1"/><rect x="35" y="585" width="1" height="1"/><rect x="35" y="587" width="1" height="1"/><rect x="35" y="589" width="1" height="1"/><rect x="35" y="591" width="1" height="1"/><rect x="35" y="593" width="1" height="1"/><rect x="35" y="595" width="1" height="1"/><rect x="35" y="597" width="1" height="1"/><rect x="35" y="599" width="1" height="1"/><rect x="35" y="601" width="1" height="1"/><rect x="35" y="603" width="1" height="1"/><rect x="35" y="605" width="1" height="1"/><rect x="35" y="607" width="1" height="1"/><rect x="35" y="609" width="1" height="1"/><rect x="35" y="611" width="1" height="1"/><rect x="35" y="613" width="1" height="1"/><rect x="35" y="615" width="1" height="1"/><rect x="35" y="617" width="1" height="1"/><rect x="35" y="619" width="1" height="1"/><rect x="35" y="621" width="1" height="1"/><rect x="35" y="623" width="1" height="1"/><rect x="35" y="625" width="1" height="1"/><rect x="35" y="627" width="1" height="1"/><rect x="35" y="629" width="1" height="1"/><rect x="35" y="631" width="1" height="1"/><rect x="35" y="633" width="1" height="1"/><rect x="35" y="635" width="1" height="1"/><rect x="35" y="637" width="1" height="1"/><rect x="35" y="639" width="1" height="1"/><rect x="35" y="641" width="1" height="1"/><rect x="35" y="643" width="1" height="1"/><rect x="35" y="645" width="1" height="1"/><rect x="35" y="647" width="1" height="1"/><rect x="35" y="649" width="1" height="1"/><rect x="35" y="651" width="1" height="1"/><rect x="37" y="112" width="1" height="1"/><rect x="39" y="112" width="1" height="1"/><rect x="41" y="112" width="1" height="1"/><rect x="43" y="112" width="1" height="1"/><rect x="45" y="112" width="1" height="1"/><rect x="37" y="130" width="1" height="1"/><rect x="39" y="130" width="1" height="1"/><rect x="41" y="130" width="1" height="1"/><rect x="43" y="130" width="1" height="1"/><rect x="45" y="130" width="1" height="1"/><rect x="37" y="148" width="1" height="1"/><rect x="39" y="148" width="1" height="1"/><rect x="41" y="148" width="1" height="1"/><rect x="43" y="148" width="1" height="1"/><rect x="45" y="148" width="1" height="1"/><rect x="37" y="166" width="1" height="1"/><rect x="39" y="166" width="1" height="1"/><rect x="41" y="166" width="1" height="1"/><rect x="43" y="166" width="1" height="1"/><rect x="45" y="166" width="1" height="1"/><rect x="37" y="184" width="1" height="1"/><rect x="39" y="184" width="1" height="1"/><rect x="41" y="184" width="1" height="1"/><rect x="43" y="184" width="1" height="1"/><rect x="45" y="184" width="1" height="1"/><rect x="37" y="202" width="1" height="1"/><rect x="39" y="202" width="1" height="1"/><rect x="41" y="202" width="1" height="1"/><rect x="43" y="202" width="1" height="1"/><rect x="45" y="202" width="1" height="1"/><rect x="37" y="220" width="1" height="1"/><rect x="39" y="220" width="1" height="1"/><rect x="41" y="220" width="1" height="1"/><rect x="43" y="220" width="1" height="1"/><rect x="45" y="220" width="1" height="1"/><rect x="37" y="238" width="1" height="1"/><rect x="39" y="238" width="1" height="1"/><rect x="41" y="238" width="1" height="1"/><rect x="43" y="238" width="1" height="1"/><rect x="45" y="238" width="1" height="1"/><rect x="37" y="256" width="1" height="1"/><rect x="39" y="256" width="1" height="1"/><rect x="41" y="256" width="1" height="1"/><rect x="43" y="256" width="1" height="1"/><rect x="45" y="256" width="1" height="1"/><rect x="37" y="274" width="1" height="1"/><rect x="39" y="274" width="1" height="1"/><rect x="41" y="274" width="1" height="1"/><rect x="43" y="274" width="1" height="1"/><rect x="45" y="274" width="1" height="1"/><rect x="37" y="292" width="1" height="1"/><rect x="39" y="292" width="1" height="1"/><rect x="41" y="292" width="1" height="1"/><rect x="43" y="292" width="1" height="1"/><rect x="45" y="292" width="1" height="1"/><rect x="37" y="310" width="1" height="1"/><rect x="39" y="310" width="1" height="1"/><rect x="41" y="310" width="1" height="1"/><rect x="43" y="310" width="1" height="1"/><rect x="45" y="310" width="1" height="1"/><rect x="37" y="328" width="1" height="1"/><rect x="39" y="328" width="1" height="1"/><rect x="41" y="328" width="1" height="1"/><rect x="43" y="328" width="1" height="1"/><rect x="45" y="328" width="1" height="1"/><rect x="37" y="346" width="1" height="1"/><rect x="39" y="346" width="1" height="1"/><rect x="41" y="346" width="1" height="1"/><rect x="43" y="346" width="1" height="1"/><rect x="45" y="346" width="1" height="1"/><rect x="37" y="364" width="1" height="1"/><rect x="39" y="364" width="1" height="1"/><rect x="41" y="364" width="1" height="1"/><rect x="43" y="364" width="1" height="1"/><rect x="45" y="364" width="1" height="1"/><rect x="37" y="382" width="1" height="1"/><rect x="39" y="382" width="1" height="1"/><rect x="41" y="382" width="1" height="1"/><rect x="43" y="382" width="1" height="1"/><rect x="45" y="382" width="1" height="1"/><rect x="37" y="400" width="1" height="1"/><rect x="39" y="400" width="1" height="1"/><rect x="41" y="400" width="1" height="1"/><rect x="43" y="400" width="1" height="1"/><rect x="45" y="400" width="1" height="1"/><rect x="37" y="418" width="1" height="1"/><rect x="39" y="418" width="1" height="1"/><rect x="41" y="418" width="1" height="1"/><rect x="43" y="418" width="1" height="1"/><rect x="45" y="418" width="1" height="1"/><rect x="37" y="436" width="1" height="1"/><rect x="39" y="436" width="1" height="1"/><rect x="41" y="436" width="1" height="1"/><rect x="43" y="436" width="1" height="1"/><rect x="45" y="436" width="1" height="1"/><rect x="37" y="454" width="1" height="1"/><rect x="39" y="454" width="1" height="1"/><rect x="41" y="454" width="1" height="1"/><rect x="43" y="454" width="1" height="1"/><rect x="45" y="454" width="1" height="1"/><rect x="37" y="472" width="1" height="1"/><rect x="39" y="472" width="1" height="1"/><rect x="41" y="472" width="1" height="1"/><rect x="43" y="472" width="1" height="1"/><rect x="45" y="472" width="1" height="1"/><rect x="37" y="490" width="1" height="1"/><rect x="39" y="490" width="1" height="1"/><rect x="41" y="490" width="1" height="1"/><rect x="43" y="490" width="1" height="1"/><rect x="45" y="490" width="1" height="1"/><rect x="37" y="508" width="1" height="1"/><rect x="39" y="508" width="1" height="1"/><rect x="41" y="508" width="1" height="1"/><rect x="43" y="508" width="1" height="1"/><rect x="45" y="508" width="1" height="1"/><rect x="37" y="526" width="1" height="1"/><rect x="39" y="526" width="1" height="1"/><rect x="41" y="526" width="1" height="1"/><rect x="43" y="526" width="1" height="1"/><rect x="45" y="526" width="1" height="1"/><rect x="37" y="544" width="1" height="1"/><rect x="39" y="544" width="1" height="1"/><rect x="41" y="544" width="1" height="1"/><rect x="43" y="544" width="1" height="1"/><rect x="45" y="544" width="1" height="1"/><rect x="37" y="562" width="1" height="1"/><rect x="39" y="562" width="1" height="1"/><rect x="41" y="562" width="1" height="1"/><rect x="43" y="562" width="1" height="1"/><rect x="45" y="562" width="1" height="1"/><rect x="37" y="580" width="1" height="1"/><rect x="39" y="580" width="1" height="1"/><rect x="41" y="580" width="1" height="1"/><rect x="43" y="580" width="1" height="1"/><rect x="45" y="580" width="1" height="1"/><rect x="37" y="598" width="1" height="1"/><rect x="39" y="598" width="1" height="1"/><rect x="41" y="598" width="1" height="1"/><rect x="43" y="598" width="1" height="1"/><rect x="45" y="598" width="1" height="1"/><rect x="37" y="616" width="1" height="1"/><rect x="39" y="616" width="1" height="1"/><rect x="41" y="616" width="1" height="1"/><rect x="43" y="616" width="1" height="1"/><rect x="45" y="616" width="1" height="1"/><rect x="37" y="634" width="1" height="1"/><rect x="39" y="634" width="1" height="1"/><rect x="41" y="634" width="1" height="1"/><rect x="43" y="634" width="1" height="1"/><rect x="45" y="634" width="1" height="1"/><rect x="37" y="652" width="1" height="1"/><rect x="39" y="652" width="1" height="1"/><rect x="41" y="652" width="1" height="1"/><rect x="43" y="652" width="1" height="1"/><rect x="45" y="652" width="1" height="1"/><rect x="17" y="670" width="1" height="1"/><rect x="19" y="670" width="1" height="1"/><rect x="21" y="670" width="1" height="1"/><rect x="23" y="670" width="1" height="1"/><rect x="25" y="670" width="1" height="1"/><rect x="17" y="688" width="1" height="1"/><rect x="19" y="688" width="1" height="1"/><rect x="21" y="688" width="1" height="1"/><rect x="23" y="688" width="1" height="1"/><rect x="25" y="688" width="1" height="1"/></g></svg>
<svg style="left:48px;top:106px" width="14" height="16" shape-rendering="crispEdges">
<path d="M0.5 0.5h9l3 3v11.5H0.5z" fill="#fff" stroke="#808080"/>
<path d="M12.5 3.5v12H0.5" fill="none" stroke="#000"/><path d="M9.5 0.5v3h3" fill="none" stroke="#808080"/>
<path d="M4.5 4.5h5v7h-5z" fill="none" stroke="#000"/><path d="M2 6.5h2M2 8.5h2M2 10.5h2M10 8h2" stroke="#000"/>
</svg>
<span class="t" style="left:68px;top:106px;font-size:12px;color:#000;transform:scaleX(0.9);transform-origin:0 0">BLA (FB)</span>
<svg style="left:48px;top:124px" width="14" height="16" shape-rendering="crispEdges">
<path d="M0.5 0.5h9l3 3v11.5H0.5z" fill="#fff" stroke="#808080"/>
<path d="M12.5 3.5v12H0.5" fill="none" stroke="#000"/><path d="M9.5 0.5v3h3" fill="none" stroke="#808080"/>
<path d="M4.5 4.5h5v7h-5z" fill="none" stroke="#000"/><path d="M2 6.5h2M2 8.5h2M2 10.5h2M10 8h2" stroke="#000"/>
</svg>
<span class="t" style="left:68px;top:124px;font-size:12px;color:#000;transform:scaleX(0.9);transform-origin:0 0">BLD (FB)</span>
<svg style="left:48px;top:142px" width="14" height="16" shape-rendering="crispEdges">
<path d="M0.5 0.5h9l3 3v11.5H0.5z" fill="#fff" stroke="#808080"/>
<path d="M12.5 3.5v12H0.5" fill="none" stroke="#000"/><path d="M9.5 0.5v3h3" fill="none" stroke="#808080"/>
<path d="M4.5 4.5h5v7h-5z" fill="none" stroke="#000"/><path d="M2 6.5h2M2 8.5h2M2 10.5h2M10 8h2" stroke="#000"/>
</svg>
<span class="t" style="left:68px;top:142px;font-size:12px;color:#000;transform:scaleX(0.9);transform-origin:0 0">BLS (FB)</span>
<svg style="left:48px;top:160px" width="14" height="16" shape-rendering="crispEdges">
<path d="M0.5 0.5h9l3 3v11.5H0.5z" fill="#fff" stroke="#808080"/>
<path d="M12.5 3.5v12H0.5" fill="none" stroke="#000"/><path d="M9.5 0.5v3h3" fill="none" stroke="#808080"/>
<path d="M4.5 4.5h5v7h-5z" fill="none" stroke="#000"/><path d="M2 6.5h2M2 8.5h2M2 10.5h2M10 8h2" stroke="#000"/>
</svg>
<span class="t" style="left:68px;top:160px;font-size:12px;color:#000;transform:scaleX(0.9);transform-origin:0 0">BLX (FB)</span>
<svg style="left:48px;top:178px" width="14" height="16" shape-rendering="crispEdges">
<path d="M0.5 0.5h9l3 3v11.5H0.5z" fill="#fff" stroke="#808080"/>
<path d="M12.5 3.5v12H0.5" fill="none" stroke="#000"/><path d="M9.5 0.5v3h3" fill="none" stroke="#808080"/>
<path d="M4.5 4.5h5v7h-5z" fill="none" stroke="#000"/><path d="M2 6.5h2M2 8.5h2M2 10.5h2M10 8h2" stroke="#000"/>
</svg>
<span class="t" style="left:68px;top:178px;font-size:12px;color:#000;transform:scaleX(0.9);transform-origin:0 0">DOE (FB)</span>
<svg style="left:48px;top:196px" width="14" height="16" shape-rendering="crispEdges">
<path d="M0.5 0.5h9l3 3v11.5H0.5z" fill="#fff" stroke="#808080"/>
<path d="M12.5 3.5v12H0.5" fill="none" stroke="#000"/><path d="M9.5 0.5v3h3" fill="none" stroke="#808080"/>
<path d="M4.5 4.5h5v7h-5z" fill="none" stroke="#000"/><path d="M2 6.5h2M2 8.5h2M2 10.5h2M10 8h2" stroke="#000"/>
</svg>
<div class="a" style="left:66px;top:195px;width:128px;height:18px;background:#0078d7;"></div>
<span class="t" style="left:68px;top:196px;font-size:12px;color:#fff;transform:scaleX(0.9);transform-origin:0 0">DOV (FB)</span>
<svg style="left:48px;top:214px" width="14" height="16" shape-rendering="crispEdges">
<path d="M0.5 0.5h9l3 3v11.5H0.5z" fill="#fff" stroke="#808080"/>
<path d="M12.5 3.5v12H0.5" fill="none" stroke="#000"/><path d="M9.5 0.5v3h3" fill="none" stroke="#808080"/>
<path d="M4.5 4.5h5v7h-5z" fill="none" stroke="#000"/><path d="M2 6.5h2M2 8.5h2M2 10.5h2M10 8h2" stroke="#000"/>
</svg>
<span class="t" style="left:68px;top:214px;font-size:12px;color:#000;transform:scaleX(0.9);transform-origin:0 0">GMG (FB)</span>
<svg style="left:48px;top:232px" width="14" height="16" shape-rendering="crispEdges">
<path d="M0.5 0.5h9l3 3v11.5H0.5z" fill="#fff" stroke="#808080"/>
<path d="M12.5 3.5v12H0.5" fill="none" stroke="#000"/><path d="M9.5 0.5v3h3" fill="none" stroke="#808080"/>
<path d="M4.5 4.5h5v7h-5z" fill="none" stroke="#000"/><path d="M2 6.5h2M2 8.5h2M2 10.5h2M10 8h2" stroke="#000"/>
</svg>
<span class="t" style="left:68px;top:232px;font-size:12px;color:#000;transform:scaleX(0.9);transform-origin:0 0">GMR (FB)</span>
<svg style="left:48px;top:250px" width="14" height="16" shape-rendering="crispEdges">
<path d="M0.5 0.5h9l3 3v11.5H0.5z" fill="#fff" stroke="#808080"/>
<path d="M12.5 3.5v12H0.5" fill="none" stroke="#000"/><path d="M9.5 0.5v3h3" fill="none" stroke="#808080"/>
<path d="M4.5 4.5h5v7h-5z" fill="none" stroke="#000"/><path d="M2 6.5h2M2 8.5h2M2 10.5h2M10 8h2" stroke="#000"/>
</svg>
<span class="t" style="left:68px;top:250px;font-size:12px;color:#000;transform:scaleX(0.9);transform-origin:0 0">GMZ (FB)</span>
<svg style="left:48px;top:268px" width="14" height="16" shape-rendering="crispEdges">
<path d="M0.5 0.5h9l3 3v11.5H0.5z" fill="#fff" stroke="#808080"/>
<path d="M12.5 3.5v12H0.5" fill="none" stroke="#000"/><path d="M9.5 0.5v3h3" fill="none" stroke="#808080"/>
<path d="M4.5 4.5h5v7h-5z" fill="none" stroke="#000"/><path d="M2 6.5h2M2 8.5h2M2 10.5h2M10 8h2" stroke="#000"/>
</svg>
<span class="t" style="left:68px;top:268px;font-size:12px;color:#000;transform:scaleX(0.9);transform-origin:0 0">HZH (FB)</span>
<svg style="left:48px;top:286px" width="14" height="16" shape-rendering="crispEdges">
<path d="M0.5 0.5h9l3 3v11.5H0.5z" fill="#fff" stroke="#808080"/>
<path d="M12.5 3.5v12H0.5" fill="none" stroke="#000"/><path d="M9.5 0.5v3h3" fill="none" stroke="#808080"/>
<path d="M4.5 4.5h5v7h-5z" fill="none" stroke="#000"/><path d="M2 6.5h2M2 8.5h2M2 10.5h2M10 8h2" stroke="#000"/>
</svg>
<span class="t" style="left:68px;top:286px;font-size:12px;color:#000;transform:scaleX(0.9);transform-origin:0 0">HZL (FB)</span>
<svg style="left:48px;top:304px" width="14" height="16" shape-rendering="crispEdges">
<path d="M0.5 0.5h9l3 3v11.5H0.5z" fill="#fff" stroke="#808080"/>
<path d="M12.5 3.5v12H0.5" fill="none" stroke="#000"/><path d="M9.5 0.5v3h3" fill="none" stroke="#808080"/>
<path d="M4.5 4.5h5v7h-5z" fill="none" stroke="#000"/><path d="M2 6.5h2M2 8.5h2M2 10.5h2M10 8h2" stroke="#000"/>
</svg>
<span class="t" style="left:68px;top:304px;font-size:12px;color:#000;transform:scaleX(0.9);transform-origin:0 0">HZP (FB)</span>
<svg style="left:48px;top:322px" width="14" height="16" shape-rendering="crispEdges">
<path d="M0.5 0.5h9l3 3v11.5H0.5z" fill="#fff" stroke="#808080"/>
<path d="M12.5 3.5v12H0.5" fill="none" stroke="#000"/><path d="M9.5 0.5v3h3" fill="none" stroke="#808080"/>
<path d="M4.5 4.5h5v7h-5z" fill="none" stroke="#000"/><path d="M2 6.5h2M2 8.5h2M2 10.5h2M10 8h2" stroke="#000"/>
</svg>
<span class="t" style="left:68px;top:322px;font-size:12px;color:#000;transform:scaleX(0.9);transform-origin:0 0">HZV (FB)</span>
<svg style="left:48px;top:340px" width="14" height="16" shape-rendering="crispEdges">
<path d="M0.5 0.5h9l3 3v11.5H0.5z" fill="#fff" stroke="#808080"/>
<path d="M12.5 3.5v12H0.5" fill="none" stroke="#000"/><path d="M9.5 0.5v3h3" fill="none" stroke="#808080"/>
<path d="M4.5 4.5h5v7h-5z" fill="none" stroke="#000"/><path d="M2 6.5h2M2 8.5h2M2 10.5h2M10 8h2" stroke="#000"/>
</svg>
<span class="t" style="left:68px;top:340px;font-size:12px;color:#000;transform:scaleX(0.9);transform-origin:0 0">HZW (FB)</span>
<svg style="left:48px;top:358px" width="14" height="16" shape-rendering="crispEdges">
<path d="M0.5 0.5h9l3 3v11.5H0.5z" fill="#fff" stroke="#808080"/>
<path d="M12.5 3.5v12H0.5" fill="none" stroke="#000"/><path d="M9.5 0.5v3h3" fill="none" stroke="#808080"/>
<path d="M4.5 4.5h5v7h-5z" fill="none" stroke="#000"/><path d="M2 6.5h2M2 8.5h2M2 10.5h2M10 8h2" stroke="#000"/>
</svg>
<span class="t" style="left:68px;top:358px;font-size:12px;color:#000;transform:scaleX(0.9);transform-origin:0 0">MSE (FB)</span>
<svg style="left:48px;top:376px" width="14" height="16" shape-rendering="crispEdges">
<path d="M0.5 0.5h9l3 3v11.5H0.5z" fill="#fff" stroke="#808080"/>
<path d="M12.5 3.5v12H0.5" fill="none" stroke="#000"/><path d="M9.5 0.5v3h3" fill="none" stroke="#808080"/>
<path d="M4.5 4.5h5v7h-5z" fill="none" stroke="#000"/><path d="M2 6.5h2M2 8.5h2M2 10.5h2M10 8h2" stroke="#000"/>
</svg>
<span class="t" style="left:68px;top:376px;font-size:12px;color:#000;transform:scaleX(0.9);transform-origin:0 0">MSV (FB)</span>
<svg style="left:48px;top:394px" width="14" height="16" shape-rendering="crispEdges">
<path d="M0.5 0.5h9l3 3v11.5H0.5z" fill="#fff" stroke="#808080"/>
<path d="M12.5 3.5v12H0.5" fill="none" stroke="#000"/><path d="M9.5 0.5v3h3" fill="none" stroke="#808080"/>
<path d="M4.5 4.5h5v7h-5z" fill="none" stroke="#000"/><path d="M2 6.5h2M2 8.5h2M2 10.5h2M10 8h2" stroke="#000"/>
</svg>
<span class="t" style="left:68px;top:394px;font-size:12px;color:#000;transform:scaleX(0.9);transform-origin:0 0">MSW (FB)</span>
<svg style="left:48px;top:412px" width="14" height="16" shape-rendering="crispEdges">
<path d="M0.5 0.5h9l3 3v11.5H0.5z" fill="#fff" stroke="#808080"/>
<path d="M12.5 3.5v12H0.5" fill="none" stroke="#000"/><path d="M9.5 0.5v3h3" fill="none" stroke="#808080"/>
<path d="M4.5 4.5h5v7h-5z" fill="none" stroke="#000"/><path d="M2 6.5h2M2 8.5h2M2 10.5h2M10 8h2" stroke="#000"/>
</svg>
<span class="t" style="left:68px;top:412px;font-size:12px;color:#000;transform:scaleX(0.9);transform-origin:0 0">PTY (FB)</span>
<svg style="left:48px;top:430px" width="14" height="16" shape-rendering="crispEdges">
<path d="M0.5 0.5h9l3 3v11.5H0.5z" fill="#fff" stroke="#808080"/>
<path d="M12.5 3.5v12H0.5" fill="none" stroke="#000"/><path d="M9.5 0.5v3h3" fill="none" stroke="#808080"/>
<path d="M4.5 4.5h5v7h-5z" fill="none" stroke="#000"/><path d="M2 6.5h2M2 8.5h2M2 10.5h2M10 8h2" stroke="#000"/>
</svg>
<span class="t" style="left:68px;top:430px;font-size:12px;color:#000;transform:scaleX(0.9);transform-origin:0 0">SMX (FB)</span>
<svg style="left:48px;top:448px" width="14" height="16" shape-rendering="crispEdges">
<path d="M0.5 0.5h9l3 3v11.5H0.5z" fill="#fff" stroke="#808080"/>
<path d="M12.5 3.5v12H0.5" fill="none" stroke="#000"/><path d="M9.5 0.5v3h3" fill="none" stroke="#808080"/>
<path d="M4.5 4.5h5v7h-5z" fill="none" stroke="#000"/><path d="M2 6.5h2M2 8.5h2M2 10.5h2M10 8h2" stroke="#000"/>
</svg>
<span class="t" style="left:68px;top:448px;font-size:12px;color:#000;transform:scaleX(0.9);transform-origin:0 0">SMZ (FB)</span>
<svg style="left:48px;top:466px" width="14" height="16" shape-rendering="crispEdges">
<path d="M0.5 0.5h9l3 3v11.5H0.5z" fill="#fff" stroke="#808080"/>
<path d="M12.5 3.5v12H0.5" fill="none" stroke="#000"/><path d="M9.5 0.5v3h3" fill="none" stroke="#808080"/>
<path d="M4.5 4.5h5v7h-5z" fill="none" stroke="#000"/><path d="M2 6.5h2M2 8.5h2M2 10.5h2M10 8h2" stroke="#000"/>
</svg>
<span class="t" style="left:68px;top:466px;font-size:12px;color:#000;transform:scaleX(0.9);transform-origin:0 0">STD (FB)</span>
<svg style="left:48px;top:484px" width="14" height="16" shape-rendering="crispEdges">
<path d="M0.5 0.5h9l3 3v11.5H0.5z" fill="#fff" stroke="#808080"/>
<path d="M12.5 3.5v12H0.5" fill="none" stroke="#000"/><path d="M9.5 0.5v3h3" fill="none" stroke="#808080"/>
<path d="M4.5 4.5h5v7h-5z" fill="none" stroke="#000"/><path d="M2 6.5h2M2 8.5h2M2 10.5h2M10 8h2" stroke="#000"/>
</svg>
<span class="t" style="left:68px;top:484px;font-size:12px;color:#000;transform:scaleX(0.9);transform-origin:0 0">STX (FB)</span>
<svg style="left:48px;top:502px" width="14" height="16" shape-rendering="crispEdges">
<path d="M0.5 0.5h9l3 3v11.5H0.5z" fill="#fff" stroke="#808080"/>
<path d="M12.5 3.5v12H0.5" fill="none" stroke="#000"/><path d="M9.5 0.5v3h3" fill="none" stroke="#808080"/>
<path d="M4.5 4.5h5v7h-5z" fill="none" stroke="#000"/><path d="M2 6.5h2M2 8.5h2M2 10.5h2M10 8h2" stroke="#000"/>
</svg>
<span class="t" style="left:68px;top:502px;font-size:12px;color:#000;transform:scaleX(0.9);transform-origin:0 0">VSJ (FB)</span>
<svg style="left:48px;top:520px" width="14" height="16" shape-rendering="crispEdges">
<path d="M0.5 0.5h9l3 3v11.5H0.5z" fill="#fff" stroke="#808080"/>
<path d="M12.5 3.5v12H0.5" fill="none" stroke="#000"/><path d="M9.5 0.5v3h3" fill="none" stroke="#808080"/>
<path d="M4.5 4.5h5v7h-5z" fill="none" stroke="#000"/><path d="M2 6.5h2M2 8.5h2M2 10.5h2M10 8h2" stroke="#000"/>
</svg>
<span class="t" style="left:68px;top:520px;font-size:12px;color:#000;transform:scaleX(0.9);transform-origin:0 0">VSM (FB)</span>
<svg style="left:48px;top:538px" width="14" height="16" shape-rendering="crispEdges">
<path d="M0.5 0.5h9l3 3v11.5H0.5z" fill="#fff" stroke="#808080"/>
<path d="M12.5 3.5v12H0.5" fill="none" stroke="#000"/><path d="M9.5 0.5v3h3" fill="none" stroke="#808080"/>
<path d="M4.5 4.5h5v7h-5z" fill="none" stroke="#000"/><path d="M2 6.5h2M2 8.5h2M2 10.5h2M10 8h2" stroke="#000"/>
</svg>
<span class="t" style="left:68px;top:538px;font-size:12px;color:#000;transform:scaleX(0.9);transform-origin:0 0">VSR (FB)</span>
<svg style="left:48px;top:556px" width="14" height="16" shape-rendering="crispEdges">
<path d="M0.5 0.5h9l3 3v11.5H0.5z" fill="#fff" stroke="#808080"/>
<path d="M12.5 3.5v12H0.5" fill="none" stroke="#000"/><path d="M9.5 0.5v3h3" fill="none" stroke="#808080"/>
<path d="M4.5 4.5h5v7h-5z" fill="none" stroke="#000"/><path d="M2 6.5h2M2 8.5h2M2 10.5h2M10 8h2" stroke="#000"/>
</svg>
<span class="t" style="left:68px;top:556px;font-size:12px;color:#000;transform:scaleX(0.9);transform-origin:0 0">ZFA (FB)</span>
<svg style="left:48px;top:574px" width="14" height="16" shape-rendering="crispEdges">
<path d="M0.5 0.5h9l3 3v11.5H0.5z" fill="#fff" stroke="#808080"/>
<path d="M12.5 3.5v12H0.5" fill="none" stroke="#000"/><path d="M9.5 0.5v3h3" fill="none" stroke="#808080"/>
<path d="M4.5 4.5h5v7h-5z" fill="none" stroke="#000"/><path d="M2 6.5h2M2 8.5h2M2 10.5h2M10 8h2" stroke="#000"/>
</svg>
<span class="t" style="left:68px;top:574px;font-size:12px;color:#000;transform:scaleX(0.9);transform-origin:0 0">ZFC (FB)</span>
<svg style="left:48px;top:592px" width="14" height="16" shape-rendering="crispEdges">
<path d="M0.5 0.5h9l3 3v11.5H0.5z" fill="#fff" stroke="#808080"/>
<path d="M12.5 3.5v12H0.5" fill="none" stroke="#000"/><path d="M9.5 0.5v3h3" fill="none" stroke="#808080"/>
<path d="M4.5 4.5h5v7h-5z" fill="none" stroke="#000"/><path d="M2 6.5h2M2 8.5h2M2 10.5h2M10 8h2" stroke="#000"/>
</svg>
<span class="t" style="left:68px;top:592px;font-size:12px;color:#000;transform:scaleX(0.9);transform-origin:0 0">ZFN (FB)</span>
<svg style="left:48px;top:610px" width="14" height="16" shape-rendering="crispEdges">
<path d="M0.5 0.5h9l3 3v11.5H0.5z" fill="#fff" stroke="#808080"/>
<path d="M12.5 3.5v12H0.5" fill="none" stroke="#000"/><path d="M9.5 0.5v3h3" fill="none" stroke="#808080"/>
<path d="M4.5 4.5h5v7h-5z" fill="none" stroke="#000"/><path d="M2 6.5h2M2 8.5h2M2 10.5h2M10 8h2" stroke="#000"/>
</svg>
<span class="t" style="left:68px;top:610px;font-size:12px;color:#000;transform:scaleX(0.9);transform-origin:0 0">ZFS (FB)</span>
<svg style="left:48px;top:628px" width="14" height="16" shape-rendering="crispEdges">
<path d="M0.5 0.5h9l3 3v11.5H0.5z" fill="#fff" stroke="#808080"/>
<path d="M12.5 3.5v12H0.5" fill="none" stroke="#000"/><path d="M9.5 0.5v3h3" fill="none" stroke="#808080"/>
<path d="M4.5 4.5h5v7h-5z" fill="none" stroke="#000"/><path d="M2 6.5h2M2 8.5h2M2 10.5h2M10 8h2" stroke="#000"/>
</svg>
<span class="t" style="left:68px;top:628px;font-size:12px;color:#000;transform:scaleX(0.9);transform-origin:0 0">ZFT (FB)</span>
<svg style="left:48px;top:646px" width="14" height="16" shape-rendering="crispEdges">
<path d="M0.5 0.5h9l3 3v11.5H0.5z" fill="#fff" stroke="#808080"/>
<path d="M12.5 3.5v12H0.5" fill="none" stroke="#000"/><path d="M9.5 0.5v3h3" fill="none" stroke="#808080"/>
<path d="M4.5 4.5h5v7h-5z" fill="none" stroke="#000"/><path d="M2 6.5h2M2 8.5h2M2 10.5h2M10 8h2" stroke="#000"/>
</svg>
<span class="t" style="left:68px;top:646px;font-size:12px;color:#000;transform:scaleX(0.9);transform-origin:0 0">ZFU (FB)</span>
<svg style="left:28px;top:664px" width="14" height="16" shape-rendering="crispEdges">
<path d="M0.5 0.5h9l3 3v11.5H0.5z" fill="#fff" stroke="#808080"/>
<path d="M12.5 3.5v12H0.5" fill="none" stroke="#000"/><path d="M9.5 0.5v3h3" fill="none" stroke="#808080"/>
<path d="M4.5 4.5h5v7h-5z" fill="none" stroke="#000"/><path d="M2 6.5h2M2 8.5h2M2 10.5h2M10 8h2" stroke="#000"/>
</svg>
<span class="t" style="left:48px;top:664px;font-size:12px;color:#000;transform:scaleX(0.9);transform-origin:0 0">BELEUCHTUNG (PRG)</span>
<svg style="left:28px;top:682px" width="14" height="16" shape-rendering="crispEdges">
<path d="M0.5 0.5h9l3 3v11.5H0.5z" fill="#fff" stroke="#808080"/>
<path d="M12.5 3.5v12H0.5" fill="none" stroke="#000"/><path d="M9.5 0.5v3h3" fill="none" stroke="#808080"/>
<path d="M4.5 4.5h5v7h-5z" fill="none" stroke="#000"/><path d="M2 6.5h2M2 8.5h2M2 10.5h2M10 8h2" stroke="#000"/>
</svg>
<span class="t" style="left:48px;top:682px;font-size:12px;color:#000;transform:scaleX(0.9);transform-origin:0 0">DOKUMENTATION (PRG)</span>
<div class="a" style="left:5px;top:692px;width:206px;height:1px;background:#a0a0a0;"></div>
<div class="a" style="left:4px;top:693px;width:208px;height:1px;background:#fff;"></div>
<div class="a" style="left:2px;top:694px;width:212px;height:2px;background:#f0f0f0;"></div>
<div class="a" style="left:4px;top:692px;width:1px;height:1px;background:#000;"></div>
<div class="a" style="left:2px;top:696px;width:213px;height:1px;background:#000;"></div>
<div class="a" style="left:11px;top:695px;width:47px;height:22px;background:#f0f0f0;border-left:1px solid #fff;border-right:1px solid #000;border-bottom:1px solid #000;border-bottom-right-radius:2px;border-bottom-left-radius:2px"></div>
<div class="a" style="left:12px;top:695px;width:45px;height:21px;border-right:1px solid #a0a0a0;border-bottom:1px solid #a0a0a0"></div>
<svg style="left:13px;top:698px" width="14" height="16" shape-rendering="crispEdges"><path d="M0.5 0.5h9l3 3v12H0.5z" fill="#fff" stroke="#000"/><path d="M3 4h6M3 6h7M3 8h7M3 10h7M3 12h7" stroke="#000"/></svg>
<span class="t" style="left:33px;top:699px;font-size:12px;color:#000;transform:scaleX(0.9);transform-origin:0 0">Ba...</span>
<div class="a" style="left:59px;top:697px;width:49px;height:20px;background:#f0f0f0;border-left:1px solid #fff;border-right:1px solid #000;border-bottom:1px solid #000;border-bottom-right-radius:2px;border-bottom-left-radius:2px"></div>
<div class="a" style="left:60px;top:697px;width:47px;height:19px;border-right:1px solid #a0a0a0;border-bottom:1px solid #a0a0a0"></div>
<svg style="left:62px;top:699px" width="17" height="14" shape-rendering="crispEdges"><rect x="0" y="0" width="6" height="5" fill="#0000c0"/><rect x="11" y="1" width="6" height="5" fill="#e000e0"/><rect x="11" y="8" width="6" height="5" fill="#00d8e0"/><path d="M6 3h5M8.5 3v7H11" fill="none" stroke="#808080"/></svg>
<span class="t" style="left:82px;top:699px;font-size:12px;color:#000;transform:scaleX(0.9);transform-origin:0 0">Da...</span>
<div class="a" style="left:109px;top:697px;width:48px;height:20px;background:#f0f0f0;border-left:1px solid #fff;border-right:1px solid #000;border-bottom:1px solid #000;border-bottom-right-radius:2px;border-bottom-left-radius:2px"></div>
<div class="a" style="left:110px;top:697px;width:46px;height:19px;border-right:1px solid #a0a0a0;border-bottom:1px solid #a0a0a0"></div>
<svg style="left:111px;top:698px" width="17" height="16" shape-rendering="crispEdges"><rect x="0.5" y="0.5" width="15" height="14" fill="#fff" stroke="#000"/><rect x="1" y="1" width="14" height="3" fill="#0000c0"/><path d="M2 2h2M5 2h2" stroke="#fff"/><rect x="2.5" y="6.5" width="11" height="5" rx="1" fill="#c0c0c0" stroke="#000"/><rect x="4" y="8" width="2" height="2" fill="#00c000"/><path d="M7 8.5h5M6 12v2" stroke="#000"/></svg>
<span class="t" style="left:131px;top:699px;font-size:12px;color:#000;transform:scaleX(0.9);transform-origin:0 0">Vis...</span>
<div class="a" style="left:158px;top:697px;width:48px;height:20px;background:#f0f0f0;border-left:1px solid #fff;border-right:1px solid #000;border-bottom:1px solid #000;border-bottom-right-radius:2px;border-bottom-left-radius:2px"></div>
<div class="a" style="left:159px;top:697px;width:46px;height:19px;border-right:1px solid #a0a0a0;border-bottom:1px solid #a0a0a0"></div>
<svg style="left:160px;top:698px" width="18" height="16" shape-rendering="crispEdges"><rect x="1.5" y="0.5" width="11" height="5" fill="#c0c0c0" stroke="#000"/><rect x="3" y="2" width="2" height="2" fill="#00a000"/><path d="M6 2.5h5M4 6v8h3" stroke="#000"/><rect x="6.5" y="9.5" width="11" height="5" fill="#c0c0c0" stroke="#000"/><rect x="8" y="11" width="2" height="2" fill="#00a000"/><rect x="13" y="11" width="2" height="2" fill="#c00000"/><circle cx="3" cy="12" r="2" fill="#e0d000"/></svg>
<span class="t" style="left:180px;top:699px;font-size:12px;color:#000;transform:scaleX(0.9);transform-origin:0 0">Re...</span>
<div class="a" style="left:222px;top:57px;width:2px;height:670px;background:#fff;"></div>
<div class="a" style="left:225px;top:57px;width:1px;height:670px;background:#000;"></div>
<div class="a" style="left:226px;top:57px;width:774px;height:150px;background:#fff;"></div>
<div class="a" style="left:226px;top:57px;width:31px;height:1px;background:#fff;"></div>
<div class="a" style="left:226px;top:58px;width:31px;height:15px;background:#c0c0c0;"></div>
<div class="a" style="left:226px;top:72px;width:31px;height:1px;background:#000;"></div>
<span class="t" style="left:229px;top:57px;font-size:12px;color:#000;">0001</span>
<div class="a" style="left:226px;top:73px;width:31px;height:1px;background:#fff;"></div>
<div class="a" style="left:226px;top:74px;width:31px;height:15px;background:#c0c0c0;"></div>
<div class="a" style="left:226px;top:88px;width:31px;height:1px;background:#000;"></div>
<span class="t" style="left:229px;top:73px;font-size:12px;color:#000;">0002</span>
<div class="a" style="left:226px;top:89px;width:31px;height:1px;background:#fff;"></div>
<div class="a" style="left:226px;top:90px;width:31px;height:15px;background:#c0c0c0;"></div>
<div class="a" style="left:226px;top:104px;width:31px;height:1px;background:#000;"></div>
<span class="t" style="left:229px;top:89px;font-size:12px;color:#000;">0003</span>
<div class="a" style="left:226px;top:105px;width:31px;height:1px;background:#fff;"></div>
<div class="a" style="left:226px;top:106px;width:31px;height:15px;background:#c0c0c0;"></div>
<div class="a" style="left:226px;top:120px;width:31px;height:1px;background:#000;"></div>
<span class="t" style="left:229px;top:105px;font-size:12px;color:#000;">0004</span>
<div class="a" style="left:226px;top:121px;width:31px;height:1px;background:#fff;"></div>
<div class="a" style="left:226px;top:122px;width:31px;height:15px;background:#c0c0c0;"></div>
<div class="a" style="left:226px;top:136px;width:31px;height:1px;background:#000;"></div>
<span class="t" style="left:229px;top:121px;font-size:12px;color:#000;">0005</span>
<div class="a" style="left:226px;top:137px;width:31px;height:1px;background:#fff;"></div>
<div class="a" style="left:226px;top:138px;width:31px;height:15px;background:#c0c0c0;"></div>
<div class="a" style="left:226px;top:152px;width:31px;height:1px;background:#000;"></div>
<span class="t" style="left:229px;top:137px;font-size:12px;color:#000;">0006</span>
<div class="a" style="left:226px;top:153px;width:31px;height:1px;background:#fff;"></div>
<div class="a" style="left:226px;top:154px;width:31px;height:15px;background:#c0c0c0;"></div>
<div class="a" style="left:226px;top:168px;width:31px;height:1px;background:#000;"></div>
<span class="t" style="left:229px;top:153px;font-size:12px;color:#000;">0007</span>
<div class="a" style="left:226px;top:169px;width:31px;height:1px;background:#fff;"></div>
<div class="a" style="left:226px;top:170px;width:31px;height:15px;background:#c0c0c0;"></div>
<div class="a" style="left:226px;top:184px;width:31px;height:1px;background:#000;"></div>
<span class="t" style="left:229px;top:169px;font-size:12px;color:#000;">0008</span>
<div class="a" style="left:226px;top:185px;width:31px;height:2px;background:#fff;"></div>
<div class="a" style="left:226px;top:187px;width:31px;height:1px;background:#000;"></div>
<div class="a" style="left:226px;top:188px;width:31px;height:15px;background:#c0c0c0;"></div>
<div class="a" style="left:226px;top:203px;width:32px;height:1px;background:#000;"></div>
<div class="a" style="left:257px;top:57px;width:1px;height:131px;background:#000;"></div>
<div class="a" style="left:259px;top:57px;width:2px;height:17px;background:#000;"></div>
<span class="t" style="left:260px;top:57px;font-size:12px;letter-spacing:-0.1px"><span style="color:#0c0ca8">FUNCTION_BLOCK</span><span style="color:#000"> DOV</span></span>
<span class="t" style="left:260px;top:73px;font-size:12px;letter-spacing:-0.1px"><span style="color:#0c0ca8">VAR_INPUT</span></span>
<span class="t" style="left:279px;top:89px;font-size:12px;letter-spacing:-0.1px"><span style="color:#000">DIR: </span><span style="color:#0c0ca8">STRING</span><span style="color:#000">(80):= 'S:\PLC';</span></span>
<span class="t" style="left:279px;top:105px;font-size:12px;letter-spacing:-0.1px"><span style="color:#000">FILE: </span><span style="color:#0c0ca8">STRING</span><span style="color:#000">(80):= 'EMISSIONEN';</span></span>
<span class="t" style="left:279px;top:121px;font-size:12px;letter-spacing:-0.1px"><span style="color:#000">ON: </span><span style="color:#0c0ca8">BOOL</span><span style="color:#000">;</span></span>
<span class="t" style="left:279px;top:137px;font-size:12px;letter-spacing:-0.1px"><span style="color:#000">RUN: </span><span style="color:#0c0ca8">BOOL</span><span style="color:#000">;</span></span>
<span class="t" style="left:279px;top:153px;font-size:12px;letter-spacing:-0.1px"><span style="color:#000">IN: </span><span style="color:#0c0ca8">ARRAY</span><span style="color:#000"> [1..5] </span><span style="color:#0c0ca8">OF STRING</span><span style="color:#000">;</span></span>
<span class="t" style="left:260px;top:169px;font-size:12px;letter-spacing:-0.1px"><span style="color:#0c0ca8">END_VAR</span></span>
<div class="a" style="left:987px;top:57px;width:13px;height:131px;background:#f0f0f0;"></div>
<svg style="left:990px;top:64px" width="9" height="6"><path d="M0.8 5.2 L4.5 1.5 L8.2 5.2" fill="none" stroke="#606060" stroke-width="2.1"/></svg>
<div class="a" style="left:987px;top:74px;width:13px;height:17px;background:#cdcdcd;"></div>
<svg style="left:990px;top:176px" width="9" height="6"><path d="M0.8 0.8 L4.5 4.5 L8.2 0.8" fill="none" stroke="#606060" stroke-width="2.1"/></svg>
<div class="a" style="left:258px;top:188px;width:742px;height:16px;background:#f0f0f0;"></div>
<svg style="left:263px;top:191px" width="6" height="9"><path d="M5.2 0.8 L1.5 4.5 L5.2 8.2" fill="none" stroke="#606060" stroke-width="2.1"/></svg>
<div class="a" style="left:275px;top:188px;width:17px;height:15px;background:#cdcdcd;"></div>
<svg style="left:976px;top:191px" width="6" height="9"><path d="M0.8 0.8 L4.5 4.5 L0.8 8.2" fill="none" stroke="#606060" stroke-width="2.1"/></svg>
<div class="a" style="left:226px;top:204px;width:774px;height:1px;background:#fff;"></div>
<div class="a" style="left:258px;top:205px;width:742px;height:2px;background:#f0f0f0;"></div>
<div class="a" style="left:226px;top:205px;width:32px;height:2px;background:#fff;"></div>
<div class="a" style="left:226px;top:207px;width:774px;height:1px;background:#a0a0a0;"></div>
<div class="a" style="left:226px;top:208px;width:774px;height:1px;background:#000;"></div>
<div class="a" style="left:226px;top:209px;width:761px;height:390px;background:#fff;"></div>
<div class="a" style="left:226px;top:209px;width:31px;height:1px;background:#fff;"></div>
<div class="a" style="left:226px;top:210px;width:31px;height:101px;background:#c0c0c0;"></div>
<span class="t" style="left:227px;top:210px;font-size:12px;color:#000;">0001</span>
<div class="a" style="left:226px;top:312px;width:31px;height:1px;background:#fff;"></div>
<div class="a" style="left:226px;top:313px;width:31px;height:152px;background:#c0c0c0;"></div>
<span class="t" style="left:227px;top:313px;font-size:12px;color:#000;">0002</span>
<div class="a" style="left:226px;top:466px;width:31px;height:1px;background:#fff;"></div>
<div class="a" style="left:226px;top:467px;width:31px;height:132px;background:#c0c0c0;"></div>
<span class="t" style="left:227px;top:467px;font-size:12px;color:#000;">0003</span>
<div class="a" style="left:257px;top:209px;width:1px;height:390px;background:#000;"></div>
<svg style="left:226px;top:226px" width="31" height="85" shape-rendering="crispEdges"><g fill="#000"><rect x="1" y="0" width="1" height="1"/><rect x="1" y="83" width="1" height="1"/><rect x="3" y="0" width="1" height="1"/><rect x="3" y="83" width="1" height="1"/><rect x="5" y="0" width="1" height="1"/><rect x="5" y="83" width="1" height="1"/><rect x="7" y="0" width="1" height="1"/><rect x="7" y="83" width="1" height="1"/><rect x="9" y="0" width="1" height="1"/><rect x="9" y="83" width="1" height="1"/><rect x="11" y="0" width="1" height="1"/><rect x="11" y="83" width="1" height="1"/><rect x="13" y="0" width="1" height="1"/><rect x="13" y="83" width="1" height="1"/><rect x="15" y="0" width="1" height="1"/><rect x="15" y="83" width="1" height="1"/><rect x="17" y="0" width="1" height="1"/><rect x="17" y="83" width="1" height="1"/><rect x="19" y="0" width="1" height="1"/><rect x="19" y="83" width="1" height="1"/><rect x="21" y="0" width="1" height="1"/><rect x="21" y="83" width="1" height="1"/><rect x="23" y="0" width="1" height="1"/><rect x="23" y="83" width="1" height="1"/><rect x="25" y="0" width="1" height="1"/><rect x="25" y="83" width="1" height="1"/><rect x="27" y="0" width="1" height="1"/><rect x="27" y="83" width="1" height="1"/><rect x="29" y="0" width="1" height="1"/><rect x="29" y="83" width="1" height="1"/><rect x="1" y="0" width="1" height="1"/><rect x="29" y="0" width="1" height="1"/><rect x="1" y="2" width="1" height="1"/><rect x="29" y="2" width="1" height="1"/><rect x="1" y="4" width="1" height="1"/><rect x="29" y="4" width="1" height="1"/><rect x="1" y="6" width="1" height="1"/><rect x="29" y="6" width="1" height="1"/><rect x="1" y="8" width="1" height="1"/><rect x="29" y="8" width="1" height="1"/><rect x="1" y="10" width="1" height="1"/><rect x="29" y="10" width="1" height="1"/><rect x="1" y="12" width="1" height="1"/><rect x="29" y="12" width="1" height="1"/><rect x="1" y="14" width="1" height="1"/><rect x="29" y="14" width="1" height="1"/><rect x="1" y="16" width="1" height="1"/><rect x="29" y="16" width="1" height="1"/><rect x="1" y="18" width="1" height="1"/><rect x="29" y="18" width="1" height="1"/><rect x="1" y="20" width="1" height="1"/><rect x="29" y="20" width="1" height="1"/><rect x="1" y="22" width="1" height="1"/><rect x="29" y="22" width="1" height="1"/><rect x="1" y="24" width="1" height="1"/><rect x="29" y="24" width="1" height="1"/><rect x="1" y="26" width="1" height="1"/><rect x="29" y="26" width="1" height="1"/><rect x="1" y="28" width="1" height="1"/><rect x="29" y="28" width="1" height="1"/><rect x="1" y="30" width="1" height="1"/><rect x="29" y="30" width="1" height="1"/><rect x="1" y="32" width="1" height="1"/><rect x="29" y="32" width="1" height="1"/><rect x="1" y="34" width="1" height="1"/><rect x="29" y="34" width="1" height="1"/><rect x="1" y="36" width="1" height="1"/><rect x="29" y="36" width="1" height="1"/><rect x="1" y="38" width="1" height="1"/><rect x="29" y="38" width="1" height="1"/><rect x="1" y="40" width="1" height="1"/><rect x="29" y="40" width="1" height="1"/><rect x="1" y="42" width="1" height="1"/><rect x="29" y="42" width="1" height="1"/><rect x="1" y="44" width="1" height="1"/><rect x="29" y="44" width="1" height="1"/><rect x="1" y="46" width="1" height="1"/><rect x="29" y="46" width="1" height="1"/><rect x="1" y="48" width="1" height="1"/><rect x="29" y="48" width="1" height="1"/><rect x="1" y="50" width="1" height="1"/><rect x="29" y="50" width="1" height="1"/><rect x="1" y="52" width="1" height="1"/><rect x="29" y="52" width="1" height="1"/><rect x="1" y="54" width="1" height="1"/><rect x="29" y="54" width="1" height="1"/><rect x="1" y="56" width="1" height="1"/><rect x="29" y="56" width="1" height="1"/><rect x="1" y="58" width="1" height="1"/><rect x="29" y="58" width="1" height="1"/><rect x="1" y="60" width="1" height="1"/><rect x="29" y="60" width="1" height="1"/><rect x="1" y="62" width="1" height="1"/><rect x="29" y="62" width="1" height="1"/><rect x="1" y="64" width="1" height="1"/><rect x="29" y="64" width="1" height="1"/><rect x="1" y="66" width="1" height="1"/><rect x="29" y="66" width="1" height="1"/><rect x="1" y="68" width="1" height="1"/><rect x="29" y="68" width="1" height="1"/><rect x="1" y="70" width="1" height="1"/><rect x="29" y="70" width="1" height="1"/><rect x="1" y="72" width="1" height="1"/><rect x="29" y="72" width="1" height="1"/><rect x="1" y="74" width="1" height="1"/><rect x="29" y="74" width="1" height="1"/><rect x="1" y="76" width="1" height="1"/><rect x="29" y="76" width="1" height="1"/><rect x="1" y="78" width="1" height="1"/><rect x="29" y="78" width="1" height="1"/><rect x="1" y="80" width="1" height="1"/><rect x="29" y="80" width="1" height="1"/><rect x="1" y="82" width="1" height="1"/><rect x="29" y="82" width="1" height="1"/></g></svg>
<div class="a" style="left:226px;top:311px;width:760px;height:1px;background:#000;"></div>
<div class="a" style="left:226px;top:465px;width:760px;height:1px;background:#000;"></div>
<span class="t" style="left:260.00px;top:210px;font-size:12px;color:#008000;letter-spacing:0.113px">(* Konvertierung Datum &amp; Zeit *)</span>
<span class="t" style="left:320.60px;top:244px;font-size:12px;color:#0c0ca8;letter-spacing:0.091px">DT_TO_STRING</span>
<span class="t" style="left:259.40px;top:260px;font-size:12px;color:#000;letter-spacing:0.117px">SYS.CLK</span>
<span class="t" style="left:448.60px;top:260px;font-size:12px;color:#000;letter-spacing:-0.300px">PR_DT</span>
<span class="t" style="left:260.00px;top:313px;font-size:12px;color:#008000;letter-spacing:0.159px">(* Eintragungszyklus *)</span>
<span class="t" style="left:352.50px;top:329px;font-size:12px;color:#000;letter-spacing:-0.100px">T01</span>
<span class="t" style="left:352.30px;top:347px;font-size:12px;color:#000;letter-spacing:-1.550px">TOF</span>
<span class="t" style="left:322.50px;top:363px;font-size:12px;color:#000;letter-spacing:0.000px">IN</span>
<span class="t" style="left:322.00px;top:380px;font-size:12px;color:#000;letter-spacing:0.000px">PT</span>
<span class="t" style="left:392.60px;top:363px;font-size:12px;color:#000;letter-spacing:0.000px">Q</span>
<span class="t" style="left:386.70px;top:380px;font-size:12px;color:#000;letter-spacing:-0.100px">ET</span>
<span class="t" style="left:285.60px;top:363px;font-size:12px;color:#000;letter-spacing:0.800px">RUN</span>
<span class="t" style="left:260.20px;top:380px;font-size:12px;color:#c010c8;letter-spacing:0.333px">T#500ms</span>
<span class="t" style="left:483.60px;top:329px;font-size:12px;color:#000;letter-spacing:0.100px">F01</span>
<span class="t" style="left:471.50px;top:347px;font-size:12px;color:#000;letter-spacing:0.280px">R_TRIG</span>
<span class="t" style="left:447.60px;top:363px;font-size:12px;color:#000;letter-spacing:0.000px">CLK</span>
<span class="t" style="left:531.70px;top:363px;font-size:12px;color:#000;letter-spacing:0.000px">Q</span>
<span class="t" style="left:598.30px;top:347px;font-size:12px;color:#0c0ca8;letter-spacing:-0.400px">AND</span>
<span class="t" style="left:669.90px;top:363px;font-size:12px;color:#000;letter-spacing:-0.020px">ELSE01</span>
<span class="t" style="left:446.30px;top:431px;font-size:12px;color:#000;letter-spacing:-0.100px">ON</span>
<span class="t" style="left:497.80px;top:448px;font-size:12px;color:#000;letter-spacing:0.120px">ELSE02</span>
<span class="t" style="left:260.00px;top:467px;font-size:12px;color:#008000;letter-spacing:0.154px">(* Eintragsdatum &amp; -zeit *)</span>
<span class="t" style="left:349.00px;top:501px;font-size:12px;color:#000;letter-spacing:-0.750px">MID</span>
<span class="t" style="left:326.80px;top:517px;font-size:12px;color:#000;letter-spacing:0.000px">STR</span>
<span class="t" style="left:326.80px;top:534px;font-size:12px;color:#000;letter-spacing:0.000px">LEN</span>
<span class="t" style="left:326.80px;top:551px;font-size:12px;color:#000;letter-spacing:0.000px">POS</span>
<span class="t" style="left:277.50px;top:517px;font-size:12px;color:#000;letter-spacing:0.275px">PR_DT</span>
<span class="t" style="left:310.20px;top:534px;font-size:12px;color:#000;letter-spacing:0.000px">2</span>
<span class="t" style="left:303.90px;top:551px;font-size:12px;color:#000;letter-spacing:0.700px">12</span>
<span class="t" style="left:458.70px;top:501px;font-size:12px;color:#000;letter-spacing:-0.060px">CONCAT</span>
<span class="t" style="left:427.50px;top:517px;font-size:12px;color:#000;letter-spacing:0.300px">STR1</span>
<span class="t" style="left:427.50px;top:534px;font-size:12px;color:#000;letter-spacing:0.300px">STR2</span>
<span class="t" style="left:617.70px;top:501px;font-size:12px;color:#000;letter-spacing:-0.060px">CONCAT</span>
<span class="t" style="left:586.50px;top:517px;font-size:12px;color:#000;letter-spacing:0.300px">STR1</span>
<span class="t" style="left:586.50px;top:534px;font-size:12px;color:#000;letter-spacing:0.300px">STR2</span>
<span class="t" style="left:776.70px;top:501px;font-size:12px;color:#000;letter-spacing:-0.060px">CONCAT</span>
<span class="t" style="left:745.50px;top:517px;font-size:12px;color:#000;letter-spacing:0.300px">STR1</span>
<span class="t" style="left:745.50px;top:534px;font-size:12px;color:#000;letter-spacing:0.300px">STR2</span>
<span class="t" style="left:410.00px;top:534px;font-size:12px;color:#000;letter-spacing:0.400px">':'</span>
<span class="t" style="left:894.70px;top:517px;font-size:12px;color:#000;letter-spacing:-0.033px">MS01</span>
<span class="t" style="left:349.00px;top:586px;font-size:12px;color:#000;letter-spacing:-0.750px">MID</span>
<span class="t" style="left:458.70px;top:586px;font-size:12px;color:#000;letter-spacing:-0.060px">CONCAT</span>
<svg style="left:0;top:0" width="1000" height="750"><g fill="none" stroke="#000" stroke-width="1" shape-rendering="crispEdges"><rect x="318.5" y="243.5" width="96" height="33"/><path d="M311.5 268.5L318.5 268.5"/><path d="M414.5 268.5L449.5 268.5"/><rect x="321.5" y="346.5" width="82" height="50"/><path d="M313.5 371.5L321.5 371.5"/><path d="M313.5 388.5L321.5 388.5"/><path d="M403.5 371.5L446.5 371.5"/><path d="M403.5 388.5L420.5 388.5"/><rect x="446.5" y="346.5" width="96" height="50"/><path d="M542.5 371.5L585.5 371.5"/><rect x="585.5" y="346.5" width="50" height="50"/><circle cx="640" cy="371.5" r="3.5" fill="#fff" shape-rendering="geometricPrecision"/><path d="M644.5 371.5L662.5 371.5"/><path d="M662.5 363.5L671 371.5L662.5 379.5z" fill="#fff"/><circle cx="581" cy="388.5" r="3.5" fill="#fff" shape-rendering="geometricPrecision"/><path d="M568.5 388.5L577.5 388.5"/><path d="M568.5 388.5L568.5 439.5"/><path d="M471.5 439.5L568.5 439.5"/><circle cx="468" cy="439.5" r="3.5" fill="#fff" shape-rendering="geometricPrecision"/><path d="M490.5 439.5L490.5 465.5"/><path d="M490.5 449.5L499 457L490.5 465" fill="none"/><rect x="326.5" y="500.5" width="66" height="67"/><path d="M318.5 525.5L326.5 525.5"/><path d="M318.5 542.5L326.5 542.5"/><path d="M318.5 559.5L326.5 559.5"/><path d="M392.5 525.5L426.5 525.5"/><rect x="426.5" y="500.5" width="116" height="50"/><rect x="585.5" y="500.5" width="116" height="50"/><rect x="744.5" y="500.5" width="116" height="50"/><path d="M419.5 542.5L426.5 542.5"/><path d="M542.5 525.5L585.5 525.5"/><path d="M701.5 525.5L744.5 525.5"/><path d="M860.5 525.5L895.5 525.5"/><path d="M569.5 542.5L585.5 542.5"/><path d="M569.5 542.5L569.5 599.5"/><path d="M727.5 542.5L744.5 542.5"/><path d="M727.5 542.5L727.5 599.5"/><rect x="326.5" y="585.5" width="66" height="55"/><rect x="426.5" y="585.5" width="116" height="55"/></g><g fill="#000" shape-rendering="crispEdges"><rect x="489" y="260" width="1" height="1"/><rect x="489" y="276" width="1" height="1"/><rect x="491" y="260" width="1" height="1"/><rect x="491" y="276" width="1" height="1"/><rect x="493" y="260" width="1" height="1"/><rect x="493" y="276" width="1" height="1"/><rect x="495" y="260" width="1" height="1"/><rect x="495" y="276" width="1" height="1"/><rect x="497" y="260" width="1" height="1"/><rect x="497" y="276" width="1" height="1"/><rect x="499" y="260" width="1" height="1"/><rect x="499" y="276" width="1" height="1"/><rect x="501" y="260" width="1" height="1"/><rect x="501" y="276" width="1" height="1"/><rect x="503" y="260" width="1" height="1"/><rect x="503" y="276" width="1" height="1"/><rect x="505" y="260" width="1" height="1"/><rect x="505" y="276" width="1" height="1"/><rect x="489" y="260" width="1" height="1"/><rect x="505" y="260" width="1" height="1"/><rect x="489" y="262" width="1" height="1"/><rect x="505" y="262" width="1" height="1"/><rect x="489" y="264" width="1" height="1"/><rect x="505" y="264" width="1" height="1"/><rect x="489" y="266" width="1" height="1"/><rect x="505" y="266" width="1" height="1"/><rect x="489" y="268" width="1" height="1"/><rect x="505" y="268" width="1" height="1"/><rect x="489" y="270" width="1" height="1"/><rect x="505" y="270" width="1" height="1"/><rect x="489" y="272" width="1" height="1"/><rect x="505" y="272" width="1" height="1"/><rect x="489" y="274" width="1" height="1"/><rect x="505" y="274" width="1" height="1"/><rect x="489" y="276" width="1" height="1"/><rect x="505" y="276" width="1" height="1"/></g></svg>
<svg style="left:346px;top:363px" width="33" height="33" viewBox="0 0 33 33"><circle cx="16.5" cy="16.5" r="14.8" fill="#c8c8c8" stroke="#000" stroke-width="1.3"/><path d="M16.50 7.00L16.50 3.50" stroke="#000" stroke-width="1.3"/><rect x="21.65" y="5.94" width="1.3" height="1.3" fill="#000"/><rect x="25.86" y="10.15" width="1.3" height="1.3" fill="#000"/><path d="M26.00 16.50L29.50 16.50" stroke="#000" stroke-width="1.3"/><rect x="25.86" y="21.65" width="1.3" height="1.3" fill="#000"/><rect x="21.65" y="25.86" width="1.3" height="1.3" fill="#000"/><path d="M16.50 26.00L16.50 29.50" stroke="#000" stroke-width="1.3"/><rect x="10.15" y="25.86" width="1.3" height="1.3" fill="#000"/><rect x="5.94" y="21.65" width="1.3" height="1.3" fill="#000"/><path d="M7.00 16.50L3.50 16.50" stroke="#000" stroke-width="1.3"/><rect x="5.94" y="10.15" width="1.3" height="1.3" fill="#000"/><rect x="10.15" y="5.94" width="1.3" height="1.3" fill="#000"/><path d="M7 11.5H16.5V20.5H26" fill="none" stroke="#d02020" stroke-width="1.2"/><path d="M7 12.5H15.5V21.5H26" fill="none" stroke="#ff9090" stroke-width="0.8"/></svg>
<svg style="left:479px;top:364px" width="31" height="31" viewBox="0 0 31 31">
<rect width="31" height="31" fill="#000"/>
<g stroke="#f0f080" stroke-width="1.1"><path d="M14.5 1.5v2M8 4l1.5 1.5M21 4l-1.5 1.5M6.5 8.5h2M20.5 8.5h2M8 13l1.5 -1.5M21 13l-1.5 -1.5"/></g>
<circle cx="14.5" cy="8.5" r="4.8" fill="#ffff00"/>
<rect x="12.5" y="13" width="4.5" height="8" fill="#909090"/>
<path d="M3 25.5H14.5V21M17 16.5H28" fill="none" stroke="#d01818" stroke-width="1.2"/>
</svg>
<div class="a" style="left:987px;top:209px;width:13px;height:390px;background:#f0f0f0;"></div>
<svg style="left:990px;top:215px" width="9" height="6"><path d="M0.8 5.2 L4.5 1.5 L8.2 5.2" fill="none" stroke="#606060" stroke-width="2.1"/></svg>
<div class="a" style="left:987px;top:226px;width:13px;height:17px;background:#cdcdcd;"></div>
<svg style="left:990px;top:588px" width="9" height="6"><path d="M0.8 0.8 L4.5 4.5 L8.2 0.8" fill="none" stroke="#606060" stroke-width="2.1"/></svg>
<div class="a" style="left:226px;top:599px;width:761px;height:1px;background:#fff;"></div>
<div class="a" style="left:226px;top:600px;width:774px;height:15px;background:#f0f0f0;"></div>
<svg style="left:230px;top:603px" width="6" height="9"><path d="M5.2 0.8 L1.5 4.5 L5.2 8.2" fill="none" stroke="#606060" stroke-width="2.1"/></svg>
<div class="a" style="left:242px;top:600px;width:17px;height:15px;background:#cdcdcd;"></div>
<div class="a" style="left:969px;top:600px;width:17px;height:15px;background:#dadada;"></div>
<svg style="left:975px;top:603px" width="6" height="9"><path d="M0.8 0.8 L4.5 4.5 L0.8 8.2" fill="none" stroke="#000" stroke-width="2.1"/></svg>
<div class="a" style="left:226px;top:615px;width:774px;height:3px;background:#fff;"></div>
<div class="a" style="left:226px;top:618px;width:774px;height:2px;background:#000;"></div>
<div class="a" style="left:226px;top:620px;width:774px;height:107px;background:#f0f0f0;"></div>
<div class="a" style="left:235px;top:629px;width:757px;height:88px;background:#fff;"></div>
<div class="a" style="left:235px;top:629px;width:757px;height:1px;background:#000;"></div>
<div class="a" style="left:235px;top:629px;width:1px;height:88px;background:#000;"></div>
<div class="a" style="left:991px;top:629px;width:1px;height:88px;background:#a0a0a0;"></div>
<div class="a" style="left:235px;top:716px;width:757px;height:1px;background:#a0a0a0;"></div>
<span class="t" style="left:237px;top:630px;font-size:12.5px;color:#6d6d6d;">Lade Bibliothek 'r:\steuerungssysteme\wago\001-006-h01-02a\Funktionen.lib'</span>
<span class="t" style="left:237px;top:646px;font-size:12.5px;color:#6d6d6d;">Lade Bibliothek 'r:\steuerungssysteme\wago\001-006-h01-02a\Schaltprogramm.lib'</span>
<span class="t" style="left:237px;top:662px;font-size:12.5px;color:#6d6d6d;">Lade Bibliothek 'r:\steuerungssysteme\wago\001-006-h01-02a\Ethernet.lib'</span>
<span class="t" style="left:237px;top:678px;font-size:12.5px;color:#6d6d6d;">Lade Bibliothek 'r:\steuerungssysteme\wago\001-006-h01-02a\Energiemessung.lib'</span>
<div class="a" style="left:236px;top:700px;width:755px;height:16px;background:#f0f0f0;"></div>
<svg style="left:241px;top:703px" width="6" height="9"><path d="M5.2 0.8 L1.5 4.5 L5.2 8.2" fill="none" stroke="#606060" stroke-width="2.1"/></svg>
<div class="a" style="left:253px;top:700px;width:133px;height:16px;background:#cdcdcd;"></div>
<svg style="left:980px;top:703px" width="6" height="9"><path d="M0.8 0.8 L4.5 4.5 L0.8 8.2" fill="none" stroke="#606060" stroke-width="2.1"/></svg>
<div class="a" style="left:0px;top:727px;width:1000px;height:23px;background:#f0f0f0;"></div>
<div class="a" style="left:0px;top:732px;width:877px;height:15px;border-left:1px solid #a0a0a0;border-top:1px solid #a0a0a0;border-right:1px solid #fff;border-bottom:1px solid #fff"></div>
<div class="a" style="left:881px;top:732px;width:45px;height:15px;border-left:1px solid #a0a0a0;border-top:1px solid #a0a0a0;border-right:1px solid #fff;border-bottom:1px solid #fff"></div>
<span class="t" style="left:883px;top:732px;font-size:12px;color:#808080;transform:scaleX(0.87);transform-origin:0 0;letter-spacing:0.3px">ONLINE</span>
<div class="a" style="left:931px;top:732px;width:20px;height:15px;border-left:1px solid #a0a0a0;border-top:1px solid #a0a0a0;border-right:1px solid #fff;border-bottom:1px solid #fff"></div>
<span class="t" style="left:933px;top:732px;font-size:12px;color:#000;transform:scaleX(0.87);transform-origin:0 0;letter-spacing:0.3px">ÜB</span>
<div class="a" style="left:956px;top:732px;width:40px;height:15px;border-left:1px solid #a0a0a0;border-top:1px solid #a0a0a0;border-right:1px solid #fff;border-bottom:1px solid #fff"></div>
<span class="t" style="left:958px;top:732px;font-size:12px;color:#808080;transform:scaleX(0.87);transform-origin:0 0;letter-spacing:0.3px">LESEN</span>
</body></html>
